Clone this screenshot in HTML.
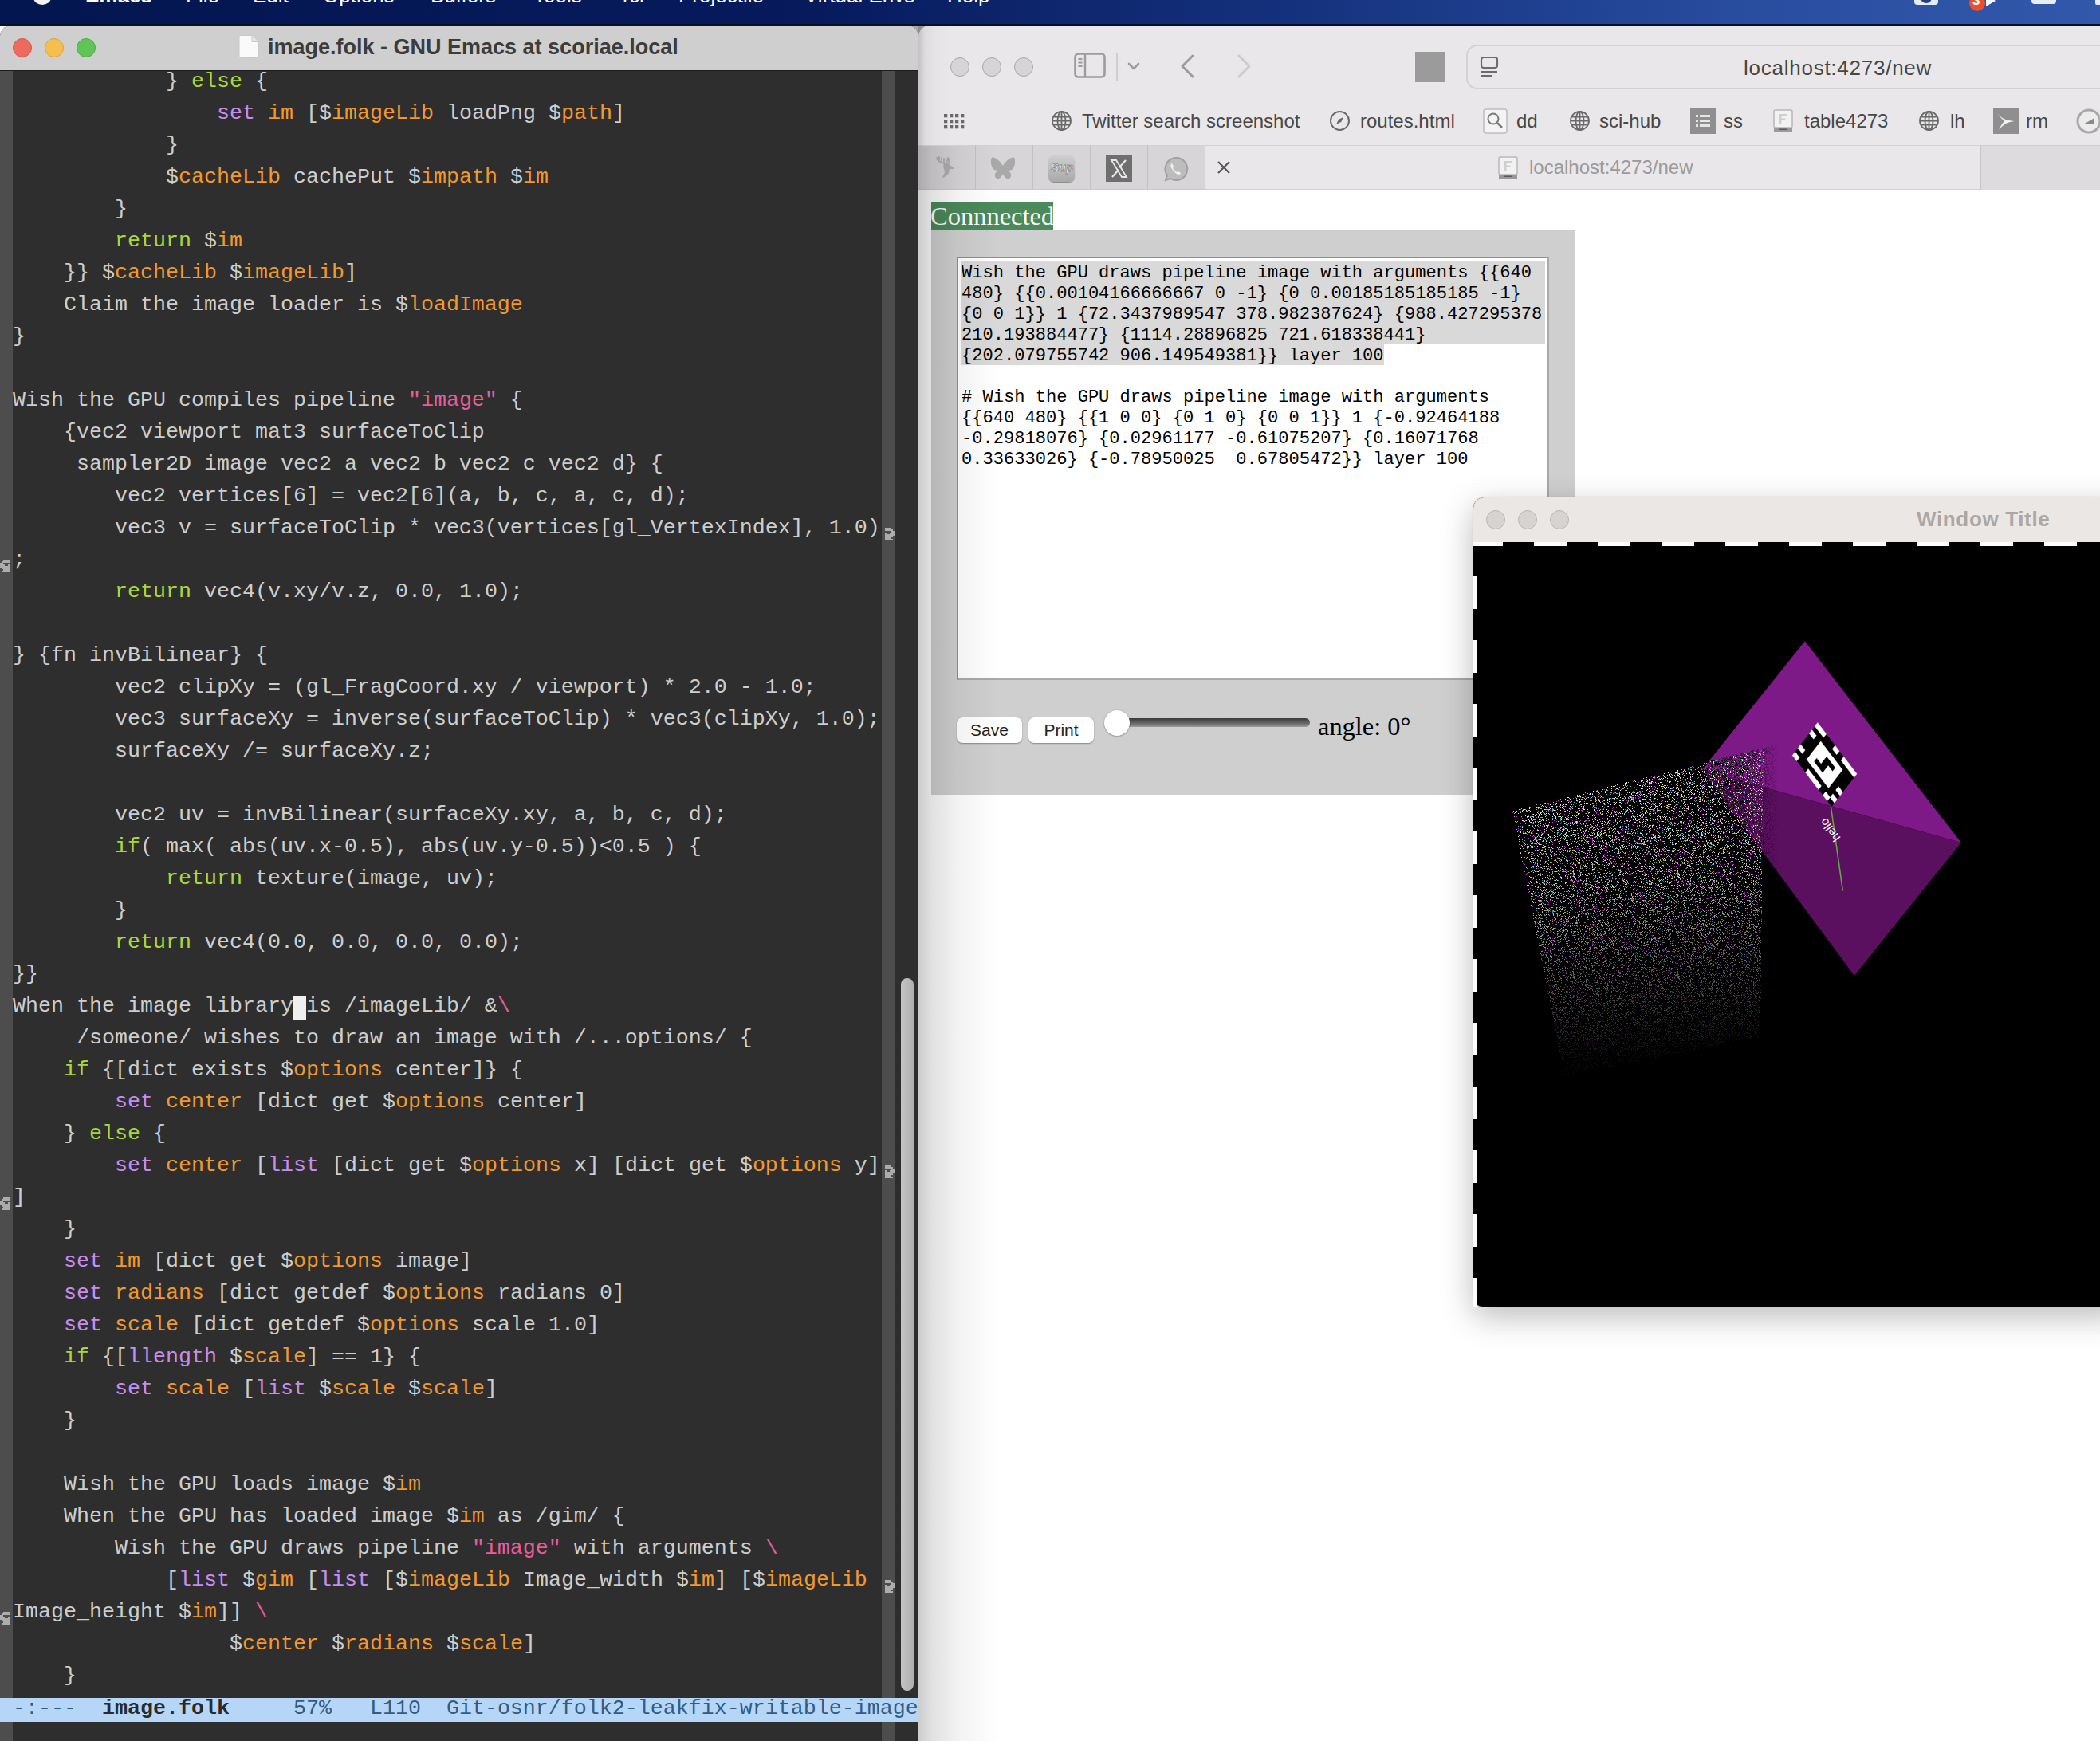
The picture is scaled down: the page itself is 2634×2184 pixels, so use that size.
<!DOCTYPE html><html><head><meta charset="utf-8"><style>*{box-sizing:border-box}
html,body{margin:0;padding:0}
body{width:2634px;height:2184px;overflow:hidden;position:relative;background:#fff;font-family:"Liberation Sans",sans-serif}
.a{position:absolute}
.t{white-space:pre}
.tl{position:absolute;width:24px;height:24px;border-radius:50%}
.ln{position:absolute;left:16px;font-family:"Liberation Mono",monospace;font-size:26.667px;line-height:40px;white-space:pre;color:#cdcdcd}
.k{color:#a8d83c}.p{color:#c88cf0}.o{color:#f2982f}.s{color:#e85c9c}
.bm{position:absolute;top:135px;font-size:24px;line-height:32px;color:#4b4b4b;white-space:pre}
</style></head><body>
<div class="a" style="left:0px;top:0px;width:2634px;height:32px;background:linear-gradient(to right,#04164f 0%,#061a5c 38%,#15327e 62%,#2a4fa2 85%,#3158aa 100%)"></div>
<div class="a t" style="left:107px;top:-19px;color:#fff;font-size:26px;line-height:26px;font-weight:bold">Emacs</div>
<div class="a t" style="left:233px;top:-19px;color:#fff;font-size:26px;line-height:26px;">File</div>
<div class="a t" style="left:317px;top:-19px;color:#fff;font-size:26px;line-height:26px;">Edit</div>
<div class="a t" style="left:405px;top:-19px;color:#fff;font-size:26px;line-height:26px;">Options</div>
<div class="a t" style="left:540px;top:-19px;color:#fff;font-size:26px;line-height:26px;">Buffers</div>
<div class="a t" style="left:669px;top:-19px;color:#fff;font-size:26px;line-height:26px;">Tools</div>
<div class="a t" style="left:776px;top:-19px;color:#fff;font-size:26px;line-height:26px;">Tcl</div>
<div class="a t" style="left:851px;top:-19px;color:#fff;font-size:26px;line-height:26px;">Projectile</div>
<div class="a t" style="left:1009px;top:-19px;color:#fff;font-size:26px;line-height:26px;">Virtual Envs</div>
<div class="a t" style="left:1188px;top:-19px;color:#fff;font-size:26px;line-height:26px;">Help</div>
<div class="a" style="left:42px;top:-14px;width:22px;height:20px;background:#f2f2f2;border-radius:0 0 11px 11px / 0 0 9px 9px"></div>
<div class="a" style="left:2401px;top:-8px;width:30px;height:14px;background:#e8ecf5;border-radius:4px"></div>
<div class="a" style="left:2409px;top:-6px;width:14px;height:10px;background:#233f8c;border-radius:0 0 7px 7px"></div>
<div class="a" style="left:2491px;top:-6px;width:12px;height:14px;background:#fff;clip-path:polygon(0 0,100% 50%,0 100%)"></div>
<div class="a" style="left:2470px;top:-6px;width:20px;height:20px;background:#e8512a;border-radius:50%"></div>
<div class="a t" style="left:2474px;top:-9px;color:#fff;font-size:17px;line-height:20px;font-weight:bold">3</div>
<div class="a" style="left:2548px;top:-8px;width:31px;height:13px;background:#e8ecf5;border-radius:4px"></div>
<div class="a" style="left:2628px;top:-8px;width:8px;height:14px;background:#e8ecf5;border-radius:2px"></div>
<div class="a" style="left:0px;top:30px;width:2634px;height:2px;background:#0a0f24"></div>
<div class="a" style="left:1120px;top:32px;width:60px;height:30px;background:linear-gradient(to right,#b8b8b8,#9a9a9a)"></div>
<div class="a" style="left:1152px;top:32px;width:1482px;height:2152px;background:#fff;border-radius:15px 0 0 0;overflow:hidden"></div>
<div class="a" style="left:1152px;top:32px;width:1482px;height:151px;background:#e9e7e9;border-radius:15px 0 0 0;border-bottom:1px solid #d3d1d3"></div>
<div class="a" style="left:1192px;top:72px;width:24px;height:24px;border-radius:50%;background:#d6d4d6;border:1px solid #a9a7a9"></div>
<div class="a" style="left:1232px;top:72px;width:24px;height:24px;border-radius:50%;background:#d6d4d6;border:1px solid #a9a7a9"></div>
<div class="a" style="left:1272px;top:72px;width:24px;height:24px;border-radius:50%;background:#d6d4d6;border:1px solid #a9a7a9"></div>
<svg class="a" style="left:1346px;top:65px" width="44" height="36" viewBox="0 0 44 36"><rect x="2.5" y="2.5" width="37" height="29" rx="4" fill="none" stroke="#9c9c9c" stroke-width="2.6"/><line x1="15" y1="3" x2="15" y2="31" stroke="#9c9c9c" stroke-width="2.4"/><path d="M6.5 9h5M6.5 13.5h5M6.5 18h5" stroke="#9c9c9c" stroke-width="2"/></svg>
<div class="a" style="left:1400px;top:67px;width:2px;height:34px;background:#cfcdcf"></div>
<svg class="a" style="left:1412px;top:76px" width="20" height="14" viewBox="0 0 20 14"><path d="M4 4l6 6 6-6" fill="none" stroke="#9c9c9c" stroke-width="2.6" stroke-linecap="round" stroke-linejoin="round"/></svg>
<svg class="a" style="left:1476px;top:66px" width="28" height="34" viewBox="0 0 28 34"><path d="M20 4L7 17l13 13" fill="none" stroke="#9c9c9c" stroke-width="3" stroke-linecap="round" stroke-linejoin="round"/></svg>
<svg class="a" style="left:1546px;top:66px" width="28" height="34" viewBox="0 0 28 34"><path d="M8 4l13 13L8 30" fill="none" stroke="#cdcbcd" stroke-width="3" stroke-linecap="round" stroke-linejoin="round"/></svg>
<div class="a" style="left:1775px;top:65px;width:38px;height:38px;background:#9b9b9b"></div>
<div class="a" style="left:1839px;top:56px;width:820px;height:56px;border:2px solid #d3d1d3;border-radius:14px;background:#e9e7e9"></div>
<svg class="a" style="left:1855px;top:70px" width="28" height="28" viewBox="0 0 28 28"><rect x="3" y="2" width="20" height="13" rx="3" fill="none" stroke="#6c6c6c" stroke-width="2.2"/><path d="M3 20h20M3 25h13" stroke="#6c6c6c" stroke-width="2.2"/></svg>
<div class="a t" style="left:2187px;top:70px;font-size:26px;line-height:30px;color:#474747;letter-spacing:0.75px">localhost:4273/new</div>
<svg class="a" style="left:1184px;top:143px" width="26" height="19" viewBox="0 0 26 19"><rect x="0" y="0" width="4.3" height="4.3" fill="#6a6a6a"/><rect x="0" y="7" width="4.3" height="4.3" fill="#6a6a6a"/><rect x="0" y="14" width="4.3" height="4.3" fill="#6a6a6a"/><rect x="7" y="0" width="4.3" height="4.3" fill="#6a6a6a"/><rect x="7" y="7" width="4.3" height="4.3" fill="#6a6a6a"/><rect x="7" y="14" width="4.3" height="4.3" fill="#6a6a6a"/><rect x="14" y="0" width="4.3" height="4.3" fill="#6a6a6a"/><rect x="14" y="7" width="4.3" height="4.3" fill="#6a6a6a"/><rect x="14" y="14" width="4.3" height="4.3" fill="#6a6a6a"/><rect x="21" y="0" width="4.3" height="4.3" fill="#6a6a6a"/><rect x="21" y="7" width="4.3" height="4.3" fill="#6a6a6a"/><rect x="21" y="14" width="4.3" height="4.3" fill="#6a6a6a"/></svg>
<svg class="a" style="left:1318px;top:138px" width="27" height="27" viewBox="0 0 27 27"><g fill="none" stroke="#6a6a6a" stroke-width="1.8"><circle cx="13.5" cy="13.5" r="11.5"/><ellipse cx="13.5" cy="13.5" rx="5" ry="11.5"/><path d="M13.5 2v23M2 13.5h23M3.5 8.5h20M3.5 18.5h20"/></g></svg>
<div class="a t" style="left:1357px;top:138px;font-size:24px;line-height:28px;color:#484848">Twitter search screenshot</div>
<svg class="a" style="left:1667px;top:138px" width="27" height="27" viewBox="0 0 27 27"><circle cx="13.5" cy="13.5" r="11.5" fill="none" stroke="#6a6a6a" stroke-width="2"/><path d="M18 9l-6 2.8-2.8 6 6-2.8z" fill="#6a6a6a"/></svg>
<div class="a t" style="left:1706px;top:138px;font-size:24px;line-height:28px;color:#484848">routes.html</div>
<svg class="a" style="left:1860px;top:136px" width="32" height="32" viewBox="0 0 32 32"><rect x="1" y="1" width="29" height="30" rx="3" fill="#f4f4f4" stroke="#bdbdbd" stroke-width="1.5"/><circle cx="13" cy="13" r="6.5" fill="none" stroke="#7a7a7a" stroke-width="2"/><path d="M18 18l6 6" stroke="#7a7a7a" stroke-width="2.5"/></svg>
<div class="a t" style="left:1902px;top:138px;font-size:24px;line-height:28px;color:#484848">dd</div>
<svg class="a" style="left:1968px;top:138px" width="27" height="27" viewBox="0 0 27 27"><g fill="none" stroke="#6a6a6a" stroke-width="1.8"><circle cx="13.5" cy="13.5" r="11.5"/><ellipse cx="13.5" cy="13.5" rx="5" ry="11.5"/><path d="M13.5 2v23M2 13.5h23M3.5 8.5h20M3.5 18.5h20"/></g></svg>
<div class="a t" style="left:2006px;top:138px;font-size:24px;line-height:28px;color:#484848">sci-hub</div>
<svg class="a" style="left:2120px;top:136px" width="32" height="32" viewBox="0 0 32 32"><rect width="32" height="32" fill="#8f8f8f"/><path d="M7 8h3v3H7zM12 8h13v3H12zM7 14h3v3H7zM12 14h13v3H12zM7 20h3v3H7zM12 20h13v3H12z" fill="#e6e6e6"/></svg>
<div class="a t" style="left:2162px;top:138px;font-size:24px;line-height:28px;color:#484848">ss</div>
<svg class="a" style="left:2224px;top:137px" width="25" height="29" viewBox="0 0 25 29"><rect x="1" y="1" width="23" height="22" rx="2" fill="#f2f2f2" stroke="#b8b8b8" stroke-width="1.5"/><path d="M8 6h9v2.5h-6.5v3h5v2.5h-5v5H8z" fill="#cfcfcf"/><rect x="1" y="23" width="23" height="5" fill="#9a9a9a"/><rect x="8" y="24.5" width="9" height="1.5" fill="#5a5a5a"/></svg>
<div class="a t" style="left:2263px;top:138px;font-size:24px;line-height:28px;color:#484848">table4273</div>
<svg class="a" style="left:2406px;top:138px" width="27" height="27" viewBox="0 0 27 27"><g fill="none" stroke="#6a6a6a" stroke-width="1.8"><circle cx="13.5" cy="13.5" r="11.5"/><ellipse cx="13.5" cy="13.5" rx="5" ry="11.5"/><path d="M13.5 2v23M2 13.5h23M3.5 8.5h20M3.5 18.5h20"/></g></svg>
<div class="a t" style="left:2446px;top:138px;font-size:24px;line-height:28px;color:#484848">lh</div>
<svg class="a" style="left:2500px;top:136px" width="32" height="32" viewBox="0 0 32 32"><rect width="32" height="32" fill="#8f8f8f"/><path d="M5 6c5 6 10 9 22 10-10 1-14 4-20 11 3-6 5-9 7-11-3-3-6-6-9-10z" fill="#f2f2f2"/></svg>
<div class="a t" style="left:2541px;top:138px;font-size:24px;line-height:28px;color:#484848">rm</div>
<svg class="a" style="left:2603px;top:135px" width="34" height="34" viewBox="0 0 34 34"><circle cx="17" cy="17" r="14" fill="#ececec" stroke="#a8a8a8" stroke-width="3"/><path d="M10 21l14-8v8z" fill="#8a8a8a"/></svg>
<div class="a" style="left:1152px;top:183px;width:1482px;height:55px;background:#e9e7e9;border-bottom:1px solid #d0ced0"></div>
<div class="a" style="left:1152px;top:183px;width:359px;height:55px;background:#d7d5d7;border-bottom:1px solid #cbc9cb"></div>
<div class="a" style="left:1223px;top:182px;width:1px;height:56px;background:#c3c1c3"></div>
<div class="a" style="left:1295px;top:182px;width:1px;height:56px;background:#c3c1c3"></div>
<div class="a" style="left:1367px;top:182px;width:1px;height:56px;background:#c3c1c3"></div>
<div class="a" style="left:1439px;top:182px;width:1px;height:56px;background:#c3c1c3"></div>
<div class="a" style="left:1511px;top:182px;width:1px;height:56px;background:#c3c1c3"></div>
<div class="a" style="left:2484px;top:182px;width:150px;height:56px;background:#dddbdd;border-left:1px solid #c8c6c8;border-top:1px solid #d0ced0"></div>
<svg class="a" style="left:1172px;top:195px" width="30" height="30" viewBox="0 0 30 30"><g fill="none" stroke="#b0b0b0" stroke-width="1.8" stroke-linecap="round"><path d="M3 3c1 4 4 6 9 7M6 2v4M9 3v5M12 4v5M15 9c1-2 2-4 2-6M18 4v6"/></g><path d="M12 9c3 0 6 1 7 3l5 3c1 1 0 2-1 2h-4c0 5-3 10-10 11 2-2 4-5 4-9-2-2-2-6-1-10z" fill="#b0b0b0"/></svg>
<svg class="a" style="left:1242px;top:196px" width="32" height="32" viewBox="0 0 32 32"><path d="M16 12C12 5 4 0 2 2 0 4 1 12 3 15c2 3 6 3 8 3-4 1-7 5-4 9 3 3 7 0 9-5 2 5 6 8 9 5 3-4 0-8-4-9 2 0 6 0 8-3 2-3 3-11 1-13-2-2-10 3-14 10z" fill="#a9a9a9"/></svg>
<div class="a" style="left:1315px;top:195px;width:33px;height:33px;background:linear-gradient(#cfcfcf,#a9a9a9);border-radius:7px;box-shadow:0 1px 1px #888"></div>
<div class="a t" style="left:1318px;top:198px;font-size:15px;line-height:24px;font-style:italic;font-weight:bold;color:#f0f0f0;-webkit-text-stroke:0.8px #888">Sup</div>
<div class="a" style="left:1387px;top:195px;width:33px;height:33px;background:#6f6f6f"></div>
<svg class="a" style="left:1390px;top:198px" width="27" height="27" viewBox="0 0 27 27"><path d="M4 3h6l13 21h-6z" fill="none" stroke="#e8e8e8" stroke-width="1.8"/><path d="M22 3L14 12M5 24l8-9" stroke="#e8e8e8" stroke-width="2.2"/></svg>
<svg class="a" style="left:1458px;top:195px" width="34" height="34" viewBox="0 0 34 34"><path d="M17 3a14 14 0 1 1-7 26l-6 2 2-6A14 14 0 0 1 17 3z" fill="#bdbdbd" stroke="#a0a0a0" stroke-width="2"/><path d="M12 10c-2 1-2 4 0 7 2 3 5 6 8 7 2 0 3-1 3-2l-3-2-2 1c-2-1-4-3-5-5l1-2-2-4z" fill="#f2f2f2"/></svg>
<svg class="a" style="left:1525px;top:200px" width="20" height="20" viewBox="0 0 20 20"><path d="M3 3l14 14M17 3L3 17" stroke="#555" stroke-width="2.2"/></svg>
<svg class="a" style="left:1879px;top:196px" width="25" height="29" viewBox="0 0 25 29"><rect x="1" y="1" width="23" height="22" rx="2" fill="#f2f2f2" stroke="#b8b8b8" stroke-width="1.5"/><path d="M8 6h9v2.5h-6.5v3h5v2.5h-5v5H8z" fill="#cfcfcf"/><rect x="1" y="23" width="23" height="5" fill="#9a9a9a"/><rect x="8" y="24.5" width="9" height="1.5" fill="#5a5a5a"/></svg>
<div class="a t" style="left:1918px;top:195px;font-size:24px;line-height:30px;color:#9c9a9c">localhost:4273/new</div>
<div class="a" style="left:1168px;top:254px;width:153px;height:35px;background:#4a8a5b"></div>
<div class="a t" style="left:1167px;top:252px;font-family:'Liberation Serif',serif;font-size:32.5px;line-height:38px;color:#fff">Connnected</div>
<div class="a" style="left:1168px;top:289px;width:808px;height:708px;background:#cfcfcf"></div>
<div class="a" style="left:1200px;top:322px;width:743px;height:531px;background:#fff;border:2px solid #8f8f8f;border-right-color:#a9a9a9;border-bottom-color:#a9a9a9"></div>
<div class="a" style="left:1205px;top:328px;width:733px;height:26px;background:#d9d9d9"></div>
<div class="a" style="left:1205px;top:354px;width:733px;height:26px;background:#d9d9d9"></div>
<div class="a" style="left:1205px;top:380px;width:733px;height:26px;background:#d9d9d9"></div>
<div class="a" style="left:1205px;top:406px;width:733px;height:26px;background:#d9d9d9"></div>
<div class="a" style="left:1205px;top:432px;width:531px;height:26px;background:#d9d9d9"></div>
<div class="a t" style="left:1206px;top:330px;font-family:'Liberation Mono',monospace;font-size:22.07px;line-height:26px;color:#000">Wish the GPU draws pipeline image with arguments {{640</div>
<div class="a t" style="left:1206px;top:356px;font-family:'Liberation Mono',monospace;font-size:22.07px;line-height:26px;color:#000">480} {{0.00104166666667 0 -1} {0 0.00185185185185 -1}</div>
<div class="a t" style="left:1206px;top:382px;font-family:'Liberation Mono',monospace;font-size:22.07px;line-height:26px;color:#000">{0 0 1}} 1 {72.3437989547 378.982387624} {988.427295378</div>
<div class="a t" style="left:1206px;top:408px;font-family:'Liberation Mono',monospace;font-size:22.07px;line-height:26px;color:#000">210.193884477} {1114.28896825 721.618338441}</div>
<div class="a t" style="left:1206px;top:434px;font-family:'Liberation Mono',monospace;font-size:22.07px;line-height:26px;color:#000">{202.079755742 906.149549381}} layer 100</div>
<div class="a t" style="left:1206px;top:486px;font-family:'Liberation Mono',monospace;font-size:22.07px;line-height:26px;color:#000"># Wish the GPU draws pipeline image with arguments</div>
<div class="a t" style="left:1206px;top:512px;font-family:'Liberation Mono',monospace;font-size:22.07px;line-height:26px;color:#000">{{640 480} {{1 0 0} {0 1 0} {0 0 1}} 1 {-0.92464188</div>
<div class="a t" style="left:1206px;top:538px;font-family:'Liberation Mono',monospace;font-size:22.07px;line-height:26px;color:#000">-0.29818076} {0.02961177 -0.61075207} {0.16071768</div>
<div class="a t" style="left:1206px;top:564px;font-family:'Liberation Mono',monospace;font-size:22.07px;line-height:26px;color:#000">0.33633026} {-0.78950025  0.67805472}} layer 100</div>
<div class="a" style="left:1200px;top:900px;width:82px;height:32px;background:#fff;border-radius:7px;box-shadow:0 0.5px 1.5px rgba(0,0,0,.35)"></div>
<div class="a t" style="left:1200px;top:901px;width:82px;text-align:center;font-size:21px;line-height:30px;color:#222">Save</div>
<div class="a" style="left:1290px;top:900px;width:82px;height:32px;background:#fff;border-radius:7px;box-shadow:0 0.5px 1.5px rgba(0,0,0,.35)"></div>
<div class="a t" style="left:1290px;top:901px;width:82px;text-align:center;font-size:21px;line-height:30px;color:#222">Print</div>
<div class="a" style="left:1395px;top:901px;width:248px;height:11px;border-radius:6px;background:linear-gradient(#3a3a3a,#6a6a6a 60%,#9a9a9a)"></div>
<div class="a" style="left:1385px;top:891px;width:32px;height:32px;border-radius:50%;background:#fff;box-shadow:0 0.5px 2px rgba(0,0,0,.45)"></div>
<div class="a t" style="left:1653px;top:893px;font-family:'Liberation Serif',serif;font-size:32.4px;line-height:36px;color:#000">angle: 0°</div>
<div class="a" style="left:1152px;top:183px;width:100px;height:2001px;background:linear-gradient(to right,rgba(0,0,0,.2),rgba(0,0,0,.12) 16%,rgba(0,0,0,.05) 48%,rgba(0,0,0,0))"></div>
<div class="a" style="left:1152px;top:32px;width:40px;height:151px;background:linear-gradient(to right,rgba(0,0,0,.16),rgba(0,0,0,.05) 20%,rgba(0,0,0,.02) 50%,rgba(0,0,0,0))"></div>
<div class="a" style="left:1848px;top:624px;width:816px;height:1015px;background:#000;border-radius:14px 0 0 12px;box-shadow:0 12px 40px rgba(0,0,0,.28),0 0 2px rgba(0,0,0,.3);overflow:hidden"></div>
<div class="a" style="left:1848px;top:624px;width:816px;height:56px;background:#ebe7e4;border-radius:14px 0 0 0"></div>
<div class="a" style="left:1864px;top:640px;width:24px;height:24px;border-radius:50%;background:#d7d3d0;border:1px solid #b9b5b2"></div>
<div class="a" style="left:1904px;top:640px;width:24px;height:24px;border-radius:50%;background:#d7d3d0;border:1px solid #b9b5b2"></div>
<div class="a" style="left:1944px;top:640px;width:24px;height:24px;border-radius:50%;background:#d7d3d0;border:1px solid #b9b5b2"></div>
<div class="a t" style="left:2404px;top:635px;font-size:26px;line-height:32px;font-weight:bold;color:#aba7a4;letter-spacing:0.65px">Window Title</div>
<svg class="a" style="left:1848px;top:680px" width="786" height="959" viewBox="1848 680 786 959" shape-rendering="crispEdges"><path d="M1848 680h37v5h-37zM1924 680h41v5h-41zM2004 680h41v5h-41zM2084 680h41v5h-41zM2164 680h41v5h-41zM2244 680h41v5h-41zM2324 680h41v5h-41zM2404 680h41v5h-41zM2484 680h41v5h-41zM2564 680h41v5h-41z" fill="#fff"/><path d="M1848 723h5v41h-5zM1848 803h5v41h-5zM1848 883h5v41h-5zM1848 963h5v41h-5zM1848 1043h5v41h-5zM1848 1123h5v41h-5zM1848 1203h5v41h-5zM1848 1283h5v41h-5zM1848 1363h5v41h-5zM1848 1443h5v41h-5zM1848 1523h5v41h-5zM1848 1603h5v41h-5z" fill="#fff"/></svg>
<svg class="a" style="left:1848px;top:680px" width="786" height="959" viewBox="1848 680 786 959"><path d="M2263.8 804.3L2134.6 965.7L2459.8 1056.9z" fill="#7e1a88"/><path d="M2134.6 965.7L2459.8 1056.9L2325.9 1223.9z" fill="#5b0f5f"/></svg>
<svg class="a" style="left:1848px;top:680px" width="786" height="959" viewBox="1848 680 786 959" shape-rendering="crispEdges"><defs><pattern id="pc" patternUnits="userSpaceOnUse" x="0" y="0" width="131" height="127"><path d="M81 27h1v1h-1zM117 10h1v1h-1zM114 2h1v1h-1zM65 49h1v1h-1zM36 93h1v1h-1zM72 45h1v1h-1zM105 55h1v1h-1zM81 59h1v1h-1zM44 101h1v1h-1zM129 113h1v1h-1zM28 48h1v1h-1zM15 94h1v1h-1zM5 42h1v1h-1zM105 107h1v1h-1zM120 14h1v1h-1zM82 125h1v1h-1zM57 32h1v1h-1zM67 122h1v1h-1zM34 0h1v1h-1zM49 26h1v1h-1zM12 15h1v1h-1zM115 7h1v1h-1zM26 54h1v1h-1zM94 69h1v1h-1zM108 68h1v1h-1zM126 105h1v1h-1zM110 34h1v1h-1zM97 110h1v1h-1zM62 40h1v1h-1zM80 61h1v1h-1zM89 70h1v1h-1zM84 62h1v1h-1zM78 42h1v1h-1zM42 54h1v1h-1zM29 107h1v1h-1zM106 36h1v1h-1zM58 96h1v1h-1zM71 126h1v1h-1zM46 29h1v1h-1zM31 65h1v1h-1zM6 9h1v1h-1zM12 11h1v1h-1zM53 34h1v1h-1zM114 103h1v1h-1zM12 7h1v1h-1zM17 116h1v1h-1zM110 11h1v1h-1zM79 7h1v1h-1zM125 74h1v1h-1zM74 116h1v1h-1zM19 81h1v1h-1zM73 28h1v1h-1zM6 26h1v1h-1zM84 105h1v1h-1zM76 29h1v1h-1zM93 38h1v1h-1zM74 94h1v1h-1zM99 100h1v1h-1zM58 36h1v1h-1zM98 4h1v1h-1zM94 33h1v1h-1zM105 111h1v1h-1zM118 92h1v1h-1zM14 4h1v1h-1zM86 31h1v1h-1zM95 15h1v1h-1zM56 38h1v1h-1zM10 85h1v1h-1zM68 70h1v1h-1zM113 41h1v1h-1zM118 87h1v1h-1zM69 51h1v1h-1zM103 70h1v1h-1zM130 32h1v1h-1zM122 60h1v1h-1zM75 22h1v1h-1zM98 16h1v1h-1zM97 86h1v1h-1zM84 125h1v1h-1zM17 97h1v1h-1zM110 112h1v1h-1zM63 15h1v1h-1zM30 41h1v1h-1zM29 32h1v1h-1zM119 47h1v1h-1zM47 115h1v1h-1zM13 107h1v1h-1zM51 93h1v1h-1zM124 46h1v1h-1zM75 56h1v1h-1zM11 35h1v1h-1zM28 71h1v1h-1zM26 99h1v1h-1zM124 100h1v1h-1zM117 88h1v1h-1zM100 102h1v1h-1zM75 13h1v1h-1zM76 123h1v1h-1zM49 23h1v1h-1zM53 113h1v1h-1zM93 100h1v1h-1zM9 101h1v1h-1zM21 17h1v1h-1zM124 124h1v1h-1zM103 97h1v1h-1zM40 45h1v1h-1zM93 39h1v1h-1zM17 17h1v1h-1zM127 2h1v1h-1zM43 30h1v1h-1zM22 118h1v1h-1zM119 37h1v1h-1zM106 92h1v1h-1zM110 72h1v1h-1zM97 39h1v1h-1zM22 29h1v1h-1zM86 108h1v1h-1zM40 15h1v1h-1zM61 29h1v1h-1zM53 66h1v1h-1zM0 55h1v1h-1zM117 92h1v1h-1zM95 42h1v1h-1zM120 76h1v1h-1zM119 25h1v1h-1zM105 99h1v1h-1zM119 5h1v1h-1zM22 60h1v1h-1zM3 48h1v1h-1zM2 117h1v1h-1zM92 54h1v1h-1zM127 20h1v1h-1zM15 103h1v1h-1zM88 45h1v1h-1zM11 96h1v1h-1zM59 91h1v1h-1zM40 16h1v1h-1zM70 33h1v1h-1zM84 13h1v1h-1zM106 97h1v1h-1zM86 15h1v1h-1zM99 50h1v1h-1zM61 48h1v1h-1zM125 26h1v1h-1zM75 78h1v1h-1zM110 125h1v1h-1zM20 38h1v1h-1zM14 125h1v1h-1zM82 71h1v1h-1zM104 45h1v1h-1zM39 32h1v1h-1zM113 23h1v1h-1zM104 41h1v1h-1zM39 27h1v1h-1zM108 75h1v1h-1zM98 31h1v1h-1zM75 2h1v1h-1zM50 16h1v1h-1zM83 8h1v1h-1zM79 93h1v1h-1zM103 16h1v1h-1zM6 87h1v1h-1zM82 109h1v1h-1zM107 26h1v1h-1zM89 2h1v1h-1zM47 72h1v1h-1zM10 84h1v1h-1zM116 22h1v1h-1zM45 28h1v1h-1zM49 88h1v1h-1zM21 122h1v1h-1zM33 14h1v1h-1zM115 38h1v1h-1zM59 34h1v1h-1zM49 13h1v1h-1zM17 82h1v1h-1zM89 86h1v1h-1zM40 31h1v1h-1zM48 26h1v1h-1zM70 66h1v1h-1zM38 32h1v1h-1zM93 26h1v1h-1zM45 42h1v1h-1zM98 43h1v1h-1zM101 13h1v1h-1zM75 92h1v1h-1zM114 110h1v1h-1zM39 104h1v1h-1zM10 82h1v1h-1zM26 57h1v1h-1zM118 97h1v1h-1zM65 109h1v1h-1zM110 108h1v1h-1zM10 60h1v1h-1zM95 25h1v1h-1zM35 107h1v1h-1zM81 94h1v1h-1zM56 16h1v1h-1zM49 87h1v1h-1zM12 63h1v1h-1zM95 123h1v1h-1zM108 63h1v1h-1zM88 8h1v1h-1zM43 48h1v1h-1zM48 15h1v1h-1zM94 67h1v1h-1zM99 106h1v1h-1zM36 45h1v1h-1zM98 34h1v1h-1zM117 41h1v1h-1zM16 63h1v1h-1zM24 59h1v1h-1zM59 66h1v1h-1zM94 3h1v1h-1zM83 45h1v1h-1zM79 66h1v1h-1zM51 95h1v1h-1zM40 96h1v1h-1zM84 56h1v1h-1zM99 109h1v1h-1zM26 34h1v1h-1zM58 80h1v1h-1zM44 19h1v1h-1zM62 100h1v1h-1zM4 79h1v1h-1zM44 31h1v1h-1zM50 32h1v1h-1zM71 88h1v1h-1zM94 40h1v1h-1zM108 32h1v1h-1zM120 95h1v1h-1zM103 88h1v1h-1zM99 117h1v1h-1zM130 91h1v1h-1zM88 47h1v1h-1zM14 66h1v1h-1zM23 69h1v1h-1zM75 93h1v1h-1zM124 63h1v1h-1zM119 18h1v1h-1zM98 3h1v1h-1zM28 30h1v1h-1zM8 96h1v1h-1zM20 69h1v1h-1zM4 122h1v1h-1zM40 126h1v1h-1zM94 95h1v1h-1zM95 21h1v1h-1zM130 12h1v1h-1zM38 16h1v1h-1zM33 25h1v1h-1zM51 115h1v1h-1zM97 40h1v1h-1zM29 46h1v1h-1zM67 4h1v1h-1zM16 119h1v1h-1zM65 119h1v1h-1zM23 19h1v1h-1zM74 74h1v1h-1zM63 89h1v1h-1zM87 106h1v1h-1zM107 35h1v1h-1zM67 109h1v1h-1zM92 67h1v1h-1zM82 114h1v1h-1zM62 5h1v1h-1zM130 85h1v1h-1zM51 98h1v1h-1zM50 94h1v1h-1zM33 114h1v1h-1zM44 85h1v1h-1zM14 35h1v1h-1zM88 13h1v1h-1zM27 2h1v1h-1zM96 113h1v1h-1zM65 76h1v1h-1zM103 45h1v1h-1zM99 72h1v1h-1zM44 1h1v1h-1zM78 126h1v1h-1zM128 60h1v1h-1zM8 107h1v1h-1zM30 21h1v1h-1zM112 53h1v1h-1zM99 21h1v1h-1zM129 1h1v1h-1zM109 15h1v1h-1zM38 89h1v1h-1zM127 50h1v1h-1zM21 69h1v1h-1zM78 61h1v1h-1zM127 114h1v1h-1zM43 44h1v1h-1zM110 107h1v1h-1zM77 51h1v1h-1zM20 37h1v1h-1zM38 23h1v1h-1zM22 126h1v1h-1zM126 121h1v1h-1zM75 1h1v1h-1zM57 94h1v1h-1zM13 45h1v1h-1zM36 100h1v1h-1zM60 26h1v1h-1zM107 20h1v1h-1zM124 84h1v1h-1zM56 89h1v1h-1zM30 48h1v1h-1zM94 80h1v1h-1zM43 110h1v1h-1zM59 32h1v1h-1zM54 88h1v1h-1zM95 113h1v1h-1zM104 52h1v1h-1zM2 36h1v1h-1zM125 124h1v1h-1zM61 13h1v1h-1zM53 67h1v1h-1zM70 112h1v1h-1zM122 47h1v1h-1zM95 97h1v1h-1zM73 48h1v1h-1zM52 93h1v1h-1zM82 29h1v1h-1zM15 78h1v1h-1zM72 87h1v1h-1zM99 118h1v1h-1zM37 45h1v1h-1zM115 94h1v1h-1zM108 30h1v1h-1zM8 83h1v1h-1zM44 122h1v1h-1zM112 106h1v1h-1zM87 80h1v1h-1zM32 32h1v1h-1zM49 122h1v1h-1zM38 28h1v1h-1zM83 12h1v1h-1zM32 99h1v1h-1zM56 41h1v1h-1zM74 99h1v1h-1zM32 72h1v1h-1zM112 39h1v1h-1zM49 9h1v1h-1zM41 91h1v1h-1zM115 21h1v1h-1zM64 2h1v1h-1zM122 81h1v1h-1zM89 116h1v1h-1zM17 110h1v1h-1zM9 79h1v1h-1zM113 52h1v1h-1zM29 45h1v1h-1zM25 67h1v1h-1zM130 78h1v1h-1zM62 117h1v1h-1zM106 122h1v1h-1zM100 104h1v1h-1zM107 58h1v1h-1zM48 38h1v1h-1zM71 82h1v1h-1zM39 105h1v1h-1zM100 1h1v1h-1zM66 81h1v1h-1zM96 43h1v1h-1zM64 26h1v1h-1zM8 106h1v1h-1zM89 78h1v1h-1zM32 107h1v1h-1zM84 83h1v1h-1zM116 65h1v1h-1zM115 93h1v1h-1zM21 107h1v1h-1zM112 56h1v1h-1zM40 23h1v1h-1zM33 96h1v1h-1zM8 28h1v1h-1zM92 96h1v1h-1zM105 19h1v1h-1zM25 56h1v1h-1zM5 80h1v1h-1zM103 126h1v1h-1zM100 124h1v1h-1zM63 100h1v1h-1zM100 121h1v1h-1zM36 24h1v1h-1zM85 89h1v1h-1zM81 47h1v1h-1zM100 91h1v1h-1zM98 37h1v1h-1zM33 2h1v1h-1zM57 37h1v1h-1zM9 50h1v1h-1zM64 109h1v1h-1zM83 94h1v1h-1zM65 54h1v1h-1zM125 56h1v1h-1zM24 118h1v1h-1zM21 126h1v1h-1zM111 121h1v1h-1zM21 35h1v1h-1zM3 27h1v1h-1zM53 88h1v1h-1zM54 106h1v1h-1zM107 19h1v1h-1zM78 121h1v1h-1zM43 29h1v1h-1zM4 108h1v1h-1zM111 11h1v1h-1zM122 98h1v1h-1zM129 30h1v1h-1zM99 34h1v1h-1zM103 73h1v1h-1zM50 80h1v1h-1zM117 9h1v1h-1zM100 41h1v1h-1zM51 10h1v1h-1zM111 12h1v1h-1zM98 99h1v1h-1zM69 21h1v1h-1zM54 13h1v1h-1zM17 81h1v1h-1zM35 125h1v1h-1zM127 106h1v1h-1zM58 71h1v1h-1zM1 40h1v1h-1zM36 113h1v1h-1zM55 114h1v1h-1zM117 99h1v1h-1zM52 69h1v1h-1zM46 83h1v1h-1zM103 20h1v1h-1zM123 35h1v1h-1zM104 101h1v1h-1zM89 102h1v1h-1zM35 105h1v1h-1zM93 70h1v1h-1zM92 108h1v1h-1zM41 116h1v1h-1zM67 117h1v1h-1zM119 33h1v1h-1zM67 102h1v1h-1zM72 67h1v1h-1zM25 55h1v1h-1zM82 4h1v1h-1zM48 89h1v1h-1zM59 116h1v1h-1zM94 63h1v1h-1zM122 24h1v1h-1zM91 77h1v1h-1zM3 102h1v1h-1zM126 84h1v1h-1zM73 91h1v1h-1zM93 91h1v1h-1zM64 38h1v1h-1zM61 118h1v1h-1zM54 7h1v1h-1zM50 65h1v1h-1zM37 89h1v1h-1zM66 107h1v1h-1zM24 86h1v1h-1zM59 2h1v1h-1zM28 3h1v1h-1zM46 64h1v1h-1zM35 80h1v1h-1zM9 84h1v1h-1zM115 32h1v1h-1zM110 56h1v1h-1zM113 122h1v1h-1zM9 114h1v1h-1zM50 42h1v1h-1zM59 27h1v1h-1zM41 33h1v1h-1zM5 90h1v1h-1zM1 111h1v1h-1zM74 80h1v1h-1zM74 78h1v1h-1zM68 6h1v1h-1zM84 14h1v1h-1zM42 90h1v1h-1zM74 119h1v1h-1zM126 50h1v1h-1zM57 50h1v1h-1zM76 79h1v1h-1zM21 89h1v1h-1zM107 84h1v1h-1zM41 97h1v1h-1zM53 21h1v1h-1zM35 24h1v1h-1zM100 30h1v1h-1zM48 105h1v1h-1zM108 19h1v1h-1zM88 114h1v1h-1zM121 111h1v1h-1zM13 108h1v1h-1zM94 77h1v1h-1zM111 57h1v1h-1zM92 7h1v1h-1zM64 17h1v1h-1zM65 11h1v1h-1zM120 103h1v1h-1zM9 25h1v1h-1zM103 24h1v1h-1zM20 87h1v1h-1zM63 27h1v1h-1zM127 25h1v1h-1zM68 109h1v1h-1zM76 0h1v1h-1zM57 96h1v1h-1zM34 29h1v1h-1zM32 43h1v1h-1zM114 36h1v1h-1zM63 70h1v1h-1zM79 103h1v1h-1zM86 71h1v1h-1zM66 117h1v1h-1zM18 52h1v1h-1zM112 20h1v1h-1zM28 98h1v1h-1zM29 106h1v1h-1zM53 116h1v1h-1zM76 13h1v1h-1zM96 12h1v1h-1zM49 126h1v1h-1zM98 53h1v1h-1zM52 24h1v1h-1zM56 8h1v1h-1zM113 86h1v1h-1zM51 62h1v1h-1zM40 58h1v1h-1zM96 118h1v1h-1zM64 106h1v1h-1zM122 8h1v1h-1zM19 48h1v1h-1zM54 5h1v1h-1zM107 124h1v1h-1zM111 92h1v1h-1zM45 60h1v1h-1zM91 7h1v1h-1zM27 8h1v1h-1zM16 113h1v1h-1zM20 89h1v1h-1zM107 91h1v1h-1zM43 27h1v1h-1zM120 31h1v1h-1zM45 119h1v1h-1zM74 59h1v1h-1zM121 87h1v1h-1zM60 112h1v1h-1zM73 6h1v1h-1zM96 5h1v1h-1zM20 99h1v1h-1zM92 77h1v1h-1zM34 126h1v1h-1zM123 120h1v1h-1zM48 28h1v1h-1zM123 0h1v1h-1zM86 91h1v1h-1zM11 86h1v1h-1zM61 56h1v1h-1zM27 95h1v1h-1zM109 16h1v1h-1zM73 93h1v1h-1zM61 111h1v1h-1zM88 60h1v1h-1zM66 3h1v1h-1zM83 111h1v1h-1zM129 91h1v1h-1zM86 60h1v1h-1zM45 58h1v1h-1zM112 58h1v1h-1zM20 125h1v1h-1zM127 24h1v1h-1zM95 70h1v1h-1zM33 74h1v1h-1zM79 43h1v1h-1zM62 124h1v1h-1zM103 75h1v1h-1zM104 118h1v1h-1zM78 14h1v1h-1zM36 96h1v1h-1zM44 38h1v1h-1zM122 42h1v1h-1zM50 46h1v1h-1zM72 14h1v1h-1zM9 83h1v1h-1zM26 85h1v1h-1zM66 57h1v1h-1zM29 50h1v1h-1zM128 17h1v1h-1zM76 31h1v1h-1zM116 96h1v1h-1zM24 88h1v1h-1zM83 54h1v1h-1zM121 9h1v1h-1zM55 35h1v1h-1zM129 9h1v1h-1zM14 10h1v1h-1zM82 55h1v1h-1zM13 110h1v1h-1zM56 100h1v1h-1zM11 69h1v1h-1zM88 95h1v1h-1zM3 125h1v1h-1zM96 7h1v1h-1zM97 107h1v1h-1zM120 69h1v1h-1zM79 107h1v1h-1zM1 115h1v1h-1zM40 5h1v1h-1zM18 28h1v1h-1zM106 35h1v1h-1zM103 27h1v1h-1zM34 22h1v1h-1zM59 54h1v1h-1zM84 19h1v1h-1zM23 20h1v1h-1zM4 105h1v1h-1zM47 95h1v1h-1zM91 19h1v1h-1zM65 2h1v1h-1zM115 46h1v1h-1zM117 72h1v1h-1zM130 23h1v1h-1zM104 21h1v1h-1zM36 26h1v1h-1zM12 40h1v1h-1zM25 20h1v1h-1zM6 42h1v1h-1zM85 15h1v1h-1zM87 114h1v1h-1zM57 71h1v1h-1zM124 86h1v1h-1zM31 79h1v1h-1zM16 62h1v1h-1zM84 123h1v1h-1zM19 92h1v1h-1zM53 23h1v1h-1zM109 40h1v1h-1zM126 87h1v1h-1zM114 68h1v1h-1zM15 35h1v1h-1zM54 14h1v1h-1zM54 91h1v1h-1zM91 96h1v1h-1zM40 84h1v1h-1zM7 7h1v1h-1zM51 90h1v1h-1zM43 45h1v1h-1zM33 103h1v1h-1zM2 12h1v1h-1zM115 85h1v1h-1zM65 52h1v1h-1zM86 104h1v1h-1zM121 19h1v1h-1zM118 122h1v1h-1zM125 98h1v1h-1zM126 58h1v1h-1zM112 74h1v1h-1zM76 71h1v1h-1zM37 65h1v1h-1zM94 50h1v1h-1zM35 15h1v1h-1zM90 36h1v1h-1zM70 70h1v1h-1zM9 81h1v1h-1zM69 71h1v1h-1zM12 112h1v1h-1zM87 48h1v1h-1zM116 50h1v1h-1zM84 0h1v1h-1zM105 70h1v1h-1zM23 80h1v1h-1zM22 48h1v1h-1zM26 67h1v1h-1zM73 79h1v1h-1zM16 65h1v1h-1zM34 78h1v1h-1zM55 120h1v1h-1zM126 4h1v1h-1zM91 35h1v1h-1zM118 77h1v1h-1zM32 7h1v1h-1zM94 25h1v1h-1zM117 8h1v1h-1zM66 29h1v1h-1zM40 107h1v1h-1zM1 52h1v1h-1zM129 71h1v1h-1zM36 116h1v1h-1zM3 6h1v1h-1zM1 25h1v1h-1zM27 79h1v1h-1zM61 34h1v1h-1zM13 60h1v1h-1zM14 5h1v1h-1zM106 34h1v1h-1zM105 39h1v1h-1zM56 97h1v1h-1zM70 44h1v1h-1zM10 1h1v1h-1zM42 32h1v1h-1zM117 77h1v1h-1zM61 3h1v1h-1zM106 91h1v1h-1zM93 123h1v1h-1zM73 27h1v1h-1zM108 4h1v1h-1zM106 16h1v1h-1zM94 57h1v1h-1zM102 106h1v1h-1zM70 81h1v1h-1zM108 34h1v1h-1zM83 6h1v1h-1zM67 47h1v1h-1zM23 93h1v1h-1zM53 85h1v1h-1zM81 8h1v1h-1zM13 71h1v1h-1zM54 53h1v1h-1zM9 6h1v1h-1zM100 12h1v1h-1zM24 25h1v1h-1zM48 63h1v1h-1zM85 16h1v1h-1zM78 105h1v1h-1zM23 98h1v1h-1zM122 85h1v1h-1zM106 93h1v1h-1zM8 98h1v1h-1zM125 45h1v1h-1zM113 8h1v1h-1zM98 118h1v1h-1zM39 11h1v1h-1zM15 118h1v1h-1zM98 82h1v1h-1zM76 46h1v1h-1zM58 70h1v1h-1zM27 42h1v1h-1zM19 52h1v1h-1zM97 66h1v1h-1zM125 123h1v1h-1zM31 57h1v1h-1zM5 6h1v1h-1zM101 97h1v1h-1zM71 37h1v1h-1zM103 93h1v1h-1zM59 33h1v1h-1zM7 15h1v1h-1zM12 14h1v1h-1zM116 118h1v1h-1zM34 25h1v1h-1zM119 126h1v1h-1zM58 43h1v1h-1zM37 33h1v1h-1zM72 5h1v1h-1zM85 1h1v1h-1zM101 101h1v1h-1zM96 14h1v1h-1zM54 86h1v1h-1zM71 115h1v1h-1zM51 117h1v1h-1zM124 116h1v1h-1zM67 81h1v1h-1zM44 5h1v1h-1zM58 24h1v1h-1zM53 32h1v1h-1zM98 17h1v1h-1zM126 89h1v1h-1zM38 67h1v1h-1zM44 14h1v1h-1zM111 79h1v1h-1zM66 121h1v1h-1zM11 25h1v1h-1zM39 15h1v1h-1zM8 91h1v1h-1zM16 117h1v1h-1zM64 104h1v1h-1zM32 74h1v1h-1zM7 47h1v1h-1zM104 49h1v1h-1zM129 92h1v1h-1zM16 43h1v1h-1zM93 89h1v1h-1zM4 113h1v1h-1zM33 56h1v1h-1zM50 99h1v1h-1zM116 89h1v1h-1zM44 17h1v1h-1zM71 89h1v1h-1zM92 118h1v1h-1zM120 106h1v1h-1zM113 48h1v1h-1zM125 71h1v1h-1zM46 66h1v1h-1zM89 65h1v1h-1zM130 107h1v1h-1zM73 54h1v1h-1zM68 1h1v1h-1zM130 120h1v1h-1zM103 89h1v1h-1zM47 36h1v1h-1zM16 50h1v1h-1zM8 73h1v1h-1zM24 70h1v1h-1zM33 38h1v1h-1zM1 43h1v1h-1zM12 115h1v1h-1zM6 32h1v1h-1zM14 26h1v1h-1zM80 13h1v1h-1zM90 76h1v1h-1zM6 106h1v1h-1zM71 96h1v1h-1zM69 114h1v1h-1zM123 53h1v1h-1zM100 16h1v1h-1zM53 44h1v1h-1zM122 96h1v1h-1zM112 102h1v1h-1zM127 80h1v1h-1zM15 33h1v1h-1zM80 26h1v1h-1zM80 0h1v1h-1zM129 6h1v1h-1zM51 113h1v1h-1zM12 17h1v1h-1zM36 58h1v1h-1zM58 40h1v1h-1zM111 34h1v1h-1zM114 26h1v1h-1zM93 61h1v1h-1zM85 44h1v1h-1zM0 71h1v1h-1zM33 47h1v1h-1zM14 6h1v1h-1zM49 2h1v1h-1zM114 4h1v1h-1zM89 5h1v1h-1zM42 28h1v1h-1zM92 116h1v1h-1zM34 64h1v1h-1zM66 21h1v1h-1zM68 63h1v1h-1zM8 76h1v1h-1zM121 104h1v1h-1zM11 52h1v1h-1zM105 4h1v1h-1zM30 56h1v1h-1zM42 2h1v1h-1zM86 10h1v1h-1zM10 81h1v1h-1zM80 111h1v1h-1zM95 77h1v1h-1zM95 58h1v1h-1zM29 18h1v1h-1zM116 49h1v1h-1zM7 125h1v1h-1zM91 115h1v1h-1zM58 8h1v1h-1zM50 79h1v1h-1zM41 0h1v1h-1zM50 126h1v1h-1zM80 72h1v1h-1zM3 1h1v1h-1zM73 95h1v1h-1zM65 28h1v1h-1zM15 113h1v1h-1zM103 92h1v1h-1zM117 63h1v1h-1zM0 0h1v1h-1zM41 53h1v1h-1zM116 34h1v1h-1zM47 118h1v1h-1zM41 84h1v1h-1zM44 39h1v1h-1zM129 82h1v1h-1zM63 80h1v1h-1zM38 29h1v1h-1zM48 45h1v1h-1zM56 102h1v1h-1zM37 80h1v1h-1zM128 33h1v1h-1zM1 86h1v1h-1zM130 28h1v1h-1zM27 111h1v1h-1zM92 61h1v1h-1zM128 114h1v1h-1zM84 102h1v1h-1zM27 50h1v1h-1zM48 97h1v1h-1zM81 21h1v1h-1zM5 21h1v1h-1zM2 111h1v1h-1zM54 6h1v1h-1zM58 97h1v1h-1zM47 84h1v1h-1zM26 7h1v1h-1zM119 88h1v1h-1zM107 82h1v1h-1zM23 113h1v1h-1zM77 69h1v1h-1zM86 84h1v1h-1zM67 22h1v1h-1zM55 79h1v1h-1zM111 107h1v1h-1zM59 85h1v1h-1zM52 122h1v1h-1zM65 82h1v1h-1zM51 41h1v1h-1zM99 32h1v1h-1zM76 75h1v1h-1zM56 6h1v1h-1zM129 105h1v1h-1zM51 124h1v1h-1zM108 41h1v1h-1zM84 53h1v1h-1zM101 90h1v1h-1zM130 100h1v1h-1zM129 50h1v1h-1zM3 52h1v1h-1zM94 91h1v1h-1zM59 92h1v1h-1zM5 49h1v1h-1zM115 0h1v1h-1zM102 52h1v1h-1zM70 119h1v1h-1zM0 123h1v1h-1zM31 94h1v1h-1zM64 12h1v1h-1zM30 50h1v1h-1zM13 23h1v1h-1zM25 112h1v1h-1zM125 27h1v1h-1zM7 72h1v1h-1zM41 61h1v1h-1zM67 53h1v1h-1zM38 21h1v1h-1zM36 12h1v1h-1zM15 59h1v1h-1zM4 94h1v1h-1zM27 39h1v1h-1zM46 11h1v1h-1zM113 100h1v1h-1zM115 104h1v1h-1zM18 120h1v1h-1zM129 23h1v1h-1zM124 12h1v1h-1zM71 79h1v1h-1zM67 78h1v1h-1zM39 24h1v1h-1zM66 90h1v1h-1zM59 55h1v1h-1zM126 23h1v1h-1zM10 94h1v1h-1zM64 102h1v1h-1zM67 111h1v1h-1zM47 46h1v1h-1zM35 63h1v1h-1zM81 31h1v1h-1zM114 5h1v1h-1zM112 122h1v1h-1zM107 80h1v1h-1zM103 100h1v1h-1zM39 100h1v1h-1zM112 47h1v1h-1zM105 123h1v1h-1zM60 120h1v1h-1zM28 21h1v1h-1zM95 81h1v1h-1zM109 102h1v1h-1zM41 11h1v1h-1zM42 81h1v1h-1zM1 32h1v1h-1zM0 94h1v1h-1zM30 102h1v1h-1zM68 31h1v1h-1zM29 97h1v1h-1zM95 90h1v1h-1zM99 31h1v1h-1zM67 115h1v1h-1zM55 60h1v1h-1zM101 47h1v1h-1zM16 67h1v1h-1zM37 97h1v1h-1zM49 115h1v1h-1zM20 64h1v1h-1zM81 107h1v1h-1zM65 91h1v1h-1zM25 21h1v1h-1zM63 95h1v1h-1zM57 81h1v1h-1zM106 49h1v1h-1zM94 45h1v1h-1zM115 34h1v1h-1zM77 2h1v1h-1zM15 47h1v1h-1zM51 17h1v1h-1zM96 107h1v1h-1zM2 44h1v1h-1zM86 61h1v1h-1zM98 113h1v1h-1zM43 16h1v1h-1zM16 0h1v1h-1zM109 126h1v1h-1zM22 70h1v1h-1zM70 75h1v1h-1zM126 116h1v1h-1zM96 37h1v1h-1zM100 81h1v1h-1zM56 67h1v1h-1zM86 119h1v1h-1zM35 116h1v1h-1zM32 67h1v1h-1zM25 105h1v1h-1zM70 56h1v1h-1zM47 25h1v1h-1zM75 88h1v1h-1zM5 43h1v1h-1zM97 70h1v1h-1zM1 2h1v1h-1zM81 113h1v1h-1zM38 30h1v1h-1zM38 13h1v1h-1zM20 10h1v1h-1zM86 12h1v1h-1zM102 83h1v1h-1zM50 21h1v1h-1zM116 121h1v1h-1zM35 11h1v1h-1zM107 46h1v1h-1zM110 120h1v1h-1zM130 38h1v1h-1zM29 120h1v1h-1zM85 64h1v1h-1zM25 66h1v1h-1zM130 63h1v1h-1zM25 3h1v1h-1zM101 38h1v1h-1zM0 114h1v1h-1zM95 119h1v1h-1zM8 67h1v1h-1zM40 105h1v1h-1zM82 90h1v1h-1zM102 41h1v1h-1zM47 69h1v1h-1zM6 80h1v1h-1zM91 14h1v1h-1zM118 73h1v1h-1zM15 15h1v1h-1zM79 29h1v1h-1zM93 29h1v1h-1zM40 53h1v1h-1zM88 105h1v1h-1zM127 120h1v1h-1zM64 36h1v1h-1zM124 9h1v1h-1zM8 77h1v1h-1zM92 29h1v1h-1zM26 118h1v1h-1zM124 107h1v1h-1zM122 124h1v1h-1zM70 4h1v1h-1zM123 8h1v1h-1zM118 118h1v1h-1zM114 21h1v1h-1zM4 19h1v1h-1zM34 45h1v1h-1zM9 46h1v1h-1zM1 24h1v1h-1zM26 82h1v1h-1zM128 80h1v1h-1zM9 39h1v1h-1zM25 39h1v1h-1zM43 99h1v1h-1zM21 27h1v1h-1zM48 76h1v1h-1zM52 14h1v1h-1zM42 49h1v1h-1zM121 62h1v1h-1zM121 97h1v1h-1zM81 106h1v1h-1zM109 91h1v1h-1zM7 75h1v1h-1zM25 102h1v1h-1zM44 49h1v1h-1zM99 5h1v1h-1zM60 70h1v1h-1zM65 80h1v1h-1zM12 72h1v1h-1zM1 64h1v1h-1zM23 81h1v1h-1zM72 99h1v1h-1zM26 95h1v1h-1zM116 19h1v1h-1zM47 14h1v1h-1zM36 9h1v1h-1zM77 18h1v1h-1zM19 23h1v1h-1zM34 39h1v1h-1zM75 45h1v1h-1zM66 108h1v1h-1zM14 53h1v1h-1zM127 32h1v1h-1zM78 75h1v1h-1zM93 73h1v1h-1zM128 37h1v1h-1zM51 1h1v1h-1zM111 62h1v1h-1zM68 114h1v1h-1z" fill="#e8e8e8"/><path d="M75 64h1v1h-1zM29 91h1v1h-1zM7 17h1v1h-1zM37 104h1v1h-1zM119 96h1v1h-1zM0 119h1v1h-1zM104 37h1v1h-1zM39 113h1v1h-1zM33 42h1v1h-1zM129 16h1v1h-1zM61 5h1v1h-1zM110 33h1v1h-1zM4 67h1v1h-1zM67 76h1v1h-1zM107 51h1v1h-1zM65 4h1v1h-1zM32 119h1v1h-1zM126 108h1v1h-1zM64 1h1v1h-1zM86 45h1v1h-1zM20 6h1v1h-1zM69 118h1v1h-1zM24 61h1v1h-1zM66 115h1v1h-1zM83 99h1v1h-1zM70 52h1v1h-1zM86 58h1v1h-1zM49 77h1v1h-1zM77 59h1v1h-1zM108 86h1v1h-1zM124 22h1v1h-1zM0 86h1v1h-1zM65 53h1v1h-1zM86 80h1v1h-1zM69 43h1v1h-1zM110 55h1v1h-1zM118 94h1v1h-1zM98 21h1v1h-1zM32 54h1v1h-1zM23 70h1v1h-1zM115 114h1v1h-1zM74 93h1v1h-1zM53 8h1v1h-1zM114 95h1v1h-1zM71 59h1v1h-1zM54 120h1v1h-1zM114 83h1v1h-1zM46 94h1v1h-1zM0 116h1v1h-1zM106 74h1v1h-1zM11 90h1v1h-1zM44 22h1v1h-1zM18 46h1v1h-1zM35 62h1v1h-1zM124 29h1v1h-1zM58 20h1v1h-1zM128 48h1v1h-1zM32 20h1v1h-1zM56 36h1v1h-1zM6 120h1v1h-1zM39 78h1v1h-1zM14 89h1v1h-1zM16 95h1v1h-1zM125 8h1v1h-1zM53 52h1v1h-1zM11 58h1v1h-1zM24 92h1v1h-1zM91 60h1v1h-1zM14 11h1v1h-1zM56 3h1v1h-1zM24 103h1v1h-1zM74 79h1v1h-1zM40 11h1v1h-1zM28 53h1v1h-1zM31 111h1v1h-1zM117 120h1v1h-1zM6 100h1v1h-1zM57 124h1v1h-1zM16 108h1v1h-1zM25 84h1v1h-1zM59 20h1v1h-1zM64 98h1v1h-1zM85 84h1v1h-1zM13 14h1v1h-1zM77 64h1v1h-1zM25 111h1v1h-1zM49 49h1v1h-1zM77 26h1v1h-1zM99 36h1v1h-1zM118 2h1v1h-1zM40 98h1v1h-1zM109 5h1v1h-1zM23 54h1v1h-1zM115 66h1v1h-1zM9 30h1v1h-1zM101 80h1v1h-1zM123 38h1v1h-1zM116 0h1v1h-1zM7 108h1v1h-1zM104 84h1v1h-1zM84 27h1v1h-1zM103 19h1v1h-1zM11 68h1v1h-1zM19 101h1v1h-1zM110 61h1v1h-1zM56 21h1v1h-1zM2 7h1v1h-1zM49 73h1v1h-1zM47 79h1v1h-1zM121 39h1v1h-1zM44 46h1v1h-1zM49 65h1v1h-1zM15 105h1v1h-1zM98 125h1v1h-1zM24 101h1v1h-1zM100 73h1v1h-1zM32 35h1v1h-1zM7 46h1v1h-1zM123 121h1v1h-1zM22 40h1v1h-1zM112 109h1v1h-1zM123 4h1v1h-1zM24 89h1v1h-1zM34 68h1v1h-1zM114 23h1v1h-1zM127 98h1v1h-1zM66 61h1v1h-1zM57 82h1v1h-1zM41 115h1v1h-1zM108 61h1v1h-1zM111 49h1v1h-1zM89 8h1v1h-1zM10 102h1v1h-1zM102 114h1v1h-1zM122 31h1v1h-1zM36 72h1v1h-1zM104 8h1v1h-1zM0 73h1v1h-1zM87 72h1v1h-1zM100 119h1v1h-1zM96 87h1v1h-1zM85 9h1v1h-1zM11 8h1v1h-1zM119 61h1v1h-1zM9 89h1v1h-1zM77 125h1v1h-1zM1 0h1v1h-1zM97 51h1v1h-1zM122 5h1v1h-1zM72 98h1v1h-1zM61 33h1v1h-1zM4 17h1v1h-1zM88 11h1v1h-1zM38 103h1v1h-1zM51 12h1v1h-1zM97 62h1v1h-1zM49 42h1v1h-1zM58 119h1v1h-1zM117 37h1v1h-1zM75 37h1v1h-1zM66 37h1v1h-1zM76 89h1v1h-1zM29 124h1v1h-1zM40 17h1v1h-1zM9 7h1v1h-1zM36 64h1v1h-1zM86 72h1v1h-1zM26 19h1v1h-1zM41 78h1v1h-1zM92 8h1v1h-1zM105 93h1v1h-1zM23 38h1v1h-1zM58 99h1v1h-1zM18 122h1v1h-1zM50 114h1v1h-1zM38 65h1v1h-1zM9 26h1v1h-1zM51 97h1v1h-1zM127 77h1v1h-1zM101 122h1v1h-1zM50 101h1v1h-1zM20 72h1v1h-1zM7 53h1v1h-1zM30 27h1v1h-1zM17 24h1v1h-1zM18 44h1v1h-1zM3 98h1v1h-1zM21 59h1v1h-1zM35 58h1v1h-1zM24 2h1v1h-1zM58 112h1v1h-1zM107 126h1v1h-1zM79 94h1v1h-1zM27 124h1v1h-1zM76 105h1v1h-1zM43 88h1v1h-1zM86 75h1v1h-1zM5 76h1v1h-1zM36 111h1v1h-1zM89 12h1v1h-1zM80 110h1v1h-1zM26 41h1v1h-1zM43 71h1v1h-1zM72 89h1v1h-1zM72 110h1v1h-1zM121 69h1v1h-1zM89 15h1v1h-1zM111 105h1v1h-1zM24 82h1v1h-1zM11 14h1v1h-1zM27 27h1v1h-1zM99 13h1v1h-1zM35 84h1v1h-1zM106 116h1v1h-1zM19 111h1v1h-1zM35 113h1v1h-1zM99 3h1v1h-1zM22 88h1v1h-1zM18 78h1v1h-1zM42 11h1v1h-1zM118 55h1v1h-1zM95 8h1v1h-1zM28 45h1v1h-1zM116 8h1v1h-1zM10 26h1v1h-1zM74 103h1v1h-1zM16 77h1v1h-1zM62 47h1v1h-1zM124 21h1v1h-1zM68 77h1v1h-1zM34 30h1v1h-1zM98 63h1v1h-1zM102 125h1v1h-1zM89 38h1v1h-1zM17 88h1v1h-1zM53 112h1v1h-1zM50 109h1v1h-1zM22 112h1v1h-1zM79 41h1v1h-1zM69 86h1v1h-1zM25 79h1v1h-1zM123 49h1v1h-1zM91 34h1v1h-1zM128 108h1v1h-1zM40 71h1v1h-1zM63 10h1v1h-1zM71 39h1v1h-1zM32 94h1v1h-1zM37 103h1v1h-1zM17 70h1v1h-1zM60 114h1v1h-1zM46 62h1v1h-1zM36 34h1v1h-1zM4 83h1v1h-1zM98 11h1v1h-1zM28 23h1v1h-1zM39 91h1v1h-1zM120 49h1v1h-1zM106 60h1v1h-1zM49 40h1v1h-1zM56 4h1v1h-1zM18 33h1v1h-1zM49 98h1v1h-1zM105 89h1v1h-1zM42 4h1v1h-1zM40 56h1v1h-1zM33 121h1v1h-1zM13 15h1v1h-1zM4 51h1v1h-1zM79 17h1v1h-1zM98 68h1v1h-1zM10 32h1v1h-1zM26 66h1v1h-1zM101 12h1v1h-1zM129 74h1v1h-1zM115 54h1v1h-1zM0 89h1v1h-1zM4 84h1v1h-1zM1 94h1v1h-1zM50 43h1v1h-1zM85 90h1v1h-1zM16 83h1v1h-1zM26 21h1v1h-1zM68 123h1v1h-1zM85 39h1v1h-1zM34 7h1v1h-1zM67 59h1v1h-1zM116 52h1v1h-1zM111 123h1v1h-1zM109 47h1v1h-1zM46 40h1v1h-1zM78 59h1v1h-1zM113 109h1v1h-1zM113 77h1v1h-1zM15 49h1v1h-1zM75 107h1v1h-1zM107 73h1v1h-1zM129 77h1v1h-1zM61 36h1v1h-1zM52 15h1v1h-1zM22 14h1v1h-1zM70 45h1v1h-1zM130 40h1v1h-1zM60 19h1v1h-1zM97 20h1v1h-1zM98 14h1v1h-1zM43 51h1v1h-1zM73 46h1v1h-1zM121 34h1v1h-1zM123 84h1v1h-1zM108 59h1v1h-1zM8 30h1v1h-1zM126 83h1v1h-1zM57 2h1v1h-1zM17 78h1v1h-1zM56 23h1v1h-1zM113 12h1v1h-1zM79 16h1v1h-1zM124 89h1v1h-1zM38 18h1v1h-1zM1 71h1v1h-1zM24 85h1v1h-1zM112 57h1v1h-1zM76 117h1v1h-1zM32 12h1v1h-1zM60 37h1v1h-1zM51 53h1v1h-1zM74 86h1v1h-1zM41 80h1v1h-1zM69 14h1v1h-1zM61 96h1v1h-1zM105 23h1v1h-1zM74 8h1v1h-1zM41 12h1v1h-1zM119 4h1v1h-1zM79 52h1v1h-1zM119 107h1v1h-1zM84 114h1v1h-1zM0 76h1v1h-1zM38 86h1v1h-1zM38 97h1v1h-1zM117 103h1v1h-1zM46 57h1v1h-1zM99 101h1v1h-1zM67 104h1v1h-1zM95 66h1v1h-1zM100 86h1v1h-1zM34 110h1v1h-1zM25 60h1v1h-1zM42 47h1v1h-1zM85 75h1v1h-1zM53 13h1v1h-1zM122 66h1v1h-1zM47 63h1v1h-1zM114 22h1v1h-1zM107 103h1v1h-1zM37 60h1v1h-1zM11 15h1v1h-1zM12 9h1v1h-1zM6 23h1v1h-1zM21 56h1v1h-1zM61 14h1v1h-1zM90 37h1v1h-1zM8 80h1v1h-1zM109 78h1v1h-1zM103 103h1v1h-1zM114 117h1v1h-1zM61 124h1v1h-1zM100 47h1v1h-1zM67 20h1v1h-1zM52 3h1v1h-1zM59 106h1v1h-1zM93 5h1v1h-1zM121 99h1v1h-1zM81 9h1v1h-1zM104 126h1v1h-1zM2 77h1v1h-1zM91 12h1v1h-1zM96 123h1v1h-1zM6 116h1v1h-1zM123 73h1v1h-1zM66 14h1v1h-1zM21 125h1v1h-1zM66 60h1v1h-1zM129 35h1v1h-1zM101 39h1v1h-1zM23 2h1v1h-1zM60 23h1v1h-1zM57 112h1v1h-1zM99 104h1v1h-1zM64 93h1v1h-1zM73 3h1v1h-1zM81 45h1v1h-1zM24 4h1v1h-1zM98 109h1v1h-1zM104 64h1v1h-1zM32 68h1v1h-1zM36 82h1v1h-1zM92 34h1v1h-1zM21 32h1v1h-1zM58 46h1v1h-1zM34 46h1v1h-1zM42 117h1v1h-1zM90 41h1v1h-1zM88 104h1v1h-1zM110 50h1v1h-1zM34 101h1v1h-1zM9 17h1v1h-1zM86 29h1v1h-1zM26 6h1v1h-1zM18 38h1v1h-1zM75 102h1v1h-1zM123 114h1v1h-1zM121 83h1v1h-1zM106 42h1v1h-1zM23 46h1v1h-1zM30 5h1v1h-1zM34 74h1v1h-1zM88 53h1v1h-1zM24 112h1v1h-1zM52 91h1v1h-1zM101 44h1v1h-1zM60 1h1v1h-1zM30 16h1v1h-1zM105 25h1v1h-1zM60 117h1v1h-1zM67 36h1v1h-1zM88 20h1v1h-1zM64 37h1v1h-1zM130 10h1v1h-1zM12 55h1v1h-1zM113 113h1v1h-1zM66 98h1v1h-1zM25 59h1v1h-1zM83 0h1v1h-1zM96 92h1v1h-1zM60 38h1v1h-1zM33 16h1v1h-1zM58 28h1v1h-1zM60 62h1v1h-1zM32 70h1v1h-1zM51 92h1v1h-1zM14 34h1v1h-1zM19 63h1v1h-1zM101 21h1v1h-1zM70 39h1v1h-1zM88 42h1v1h-1zM84 92h1v1h-1zM111 35h1v1h-1zM43 35h1v1h-1zM123 23h1v1h-1zM121 14h1v1h-1zM53 17h1v1h-1zM128 14h1v1h-1zM111 4h1v1h-1zM23 27h1v1h-1zM93 90h1v1h-1zM35 111h1v1h-1zM126 2h1v1h-1zM85 25h1v1h-1zM2 101h1v1h-1zM105 105h1v1h-1zM29 93h1v1h-1zM104 65h1v1h-1zM60 66h1v1h-1zM100 108h1v1h-1zM82 79h1v1h-1zM55 39h1v1h-1zM10 8h1v1h-1zM51 87h1v1h-1zM111 118h1v1h-1zM80 121h1v1h-1zM111 44h1v1h-1zM21 53h1v1h-1zM28 61h1v1h-1zM95 100h1v1h-1zM110 49h1v1h-1zM46 97h1v1h-1zM74 44h1v1h-1zM113 94h1v1h-1zM16 4h1v1h-1zM103 4h1v1h-1zM72 4h1v1h-1zM69 27h1v1h-1zM8 18h1v1h-1zM67 13h1v1h-1zM91 107h1v1h-1zM21 123h1v1h-1zM30 119h1v1h-1zM58 41h1v1h-1zM6 95h1v1h-1zM20 20h1v1h-1zM92 86h1v1h-1zM75 6h1v1h-1zM76 48h1v1h-1zM65 51h1v1h-1zM60 31h1v1h-1zM14 32h1v1h-1zM26 106h1v1h-1zM68 44h1v1h-1zM98 19h1v1h-1zM111 33h1v1h-1zM87 85h1v1h-1zM112 36h1v1h-1zM41 44h1v1h-1zM11 87h1v1h-1zM119 65h1v1h-1zM73 112h1v1h-1zM89 112h1v1h-1zM25 64h1v1h-1zM65 8h1v1h-1zM110 38h1v1h-1zM87 79h1v1h-1zM91 56h1v1h-1zM120 71h1v1h-1zM129 34h1v1h-1zM127 35h1v1h-1zM0 17h1v1h-1zM81 56h1v1h-1zM38 88h1v1h-1zM96 16h1v1h-1zM35 31h1v1h-1z" fill="#c4c4c4"/><path d="M123 16h1v1h-1zM101 55h1v1h-1zM109 82h1v1h-1zM39 98h1v1h-1zM107 31h1v1h-1zM17 69h1v1h-1zM106 76h1v1h-1zM62 123h1v1h-1zM66 26h1v1h-1zM103 99h1v1h-1zM112 99h1v1h-1zM80 81h1v1h-1zM127 76h1v1h-1zM61 68h1v1h-1zM130 81h1v1h-1zM32 40h1v1h-1zM47 29h1v1h-1zM14 48h1v1h-1zM7 13h1v1h-1zM19 72h1v1h-1zM52 87h1v1h-1zM73 126h1v1h-1zM126 122h1v1h-1zM39 96h1v1h-1zM123 67h1v1h-1zM36 89h1v1h-1zM121 49h1v1h-1zM72 72h1v1h-1zM49 41h1v1h-1zM128 110h1v1h-1zM27 19h1v1h-1zM4 58h1v1h-1zM61 37h1v1h-1zM62 74h1v1h-1zM7 83h1v1h-1zM48 62h1v1h-1zM3 108h1v1h-1zM16 34h1v1h-1zM126 104h1v1h-1zM56 18h1v1h-1zM45 111h1v1h-1zM7 39h1v1h-1zM89 31h1v1h-1zM68 80h1v1h-1zM100 49h1v1h-1zM40 39h1v1h-1zM106 21h1v1h-1zM111 94h1v1h-1zM127 53h1v1h-1zM113 2h1v1h-1zM82 18h1v1h-1zM103 95h1v1h-1zM67 94h1v1h-1zM23 110h1v1h-1zM45 63h1v1h-1zM40 54h1v1h-1zM129 109h1v1h-1zM117 108h1v1h-1zM108 49h1v1h-1zM115 80h1v1h-1zM120 56h1v1h-1zM68 66h1v1h-1zM88 99h1v1h-1zM39 107h1v1h-1zM52 22h1v1h-1zM61 83h1v1h-1zM79 98h1v1h-1zM77 27h1v1h-1zM59 51h1v1h-1zM49 56h1v1h-1zM30 114h1v1h-1zM82 62h1v1h-1zM8 71h1v1h-1zM97 58h1v1h-1zM116 18h1v1h-1zM6 114h1v1h-1zM33 75h1v1h-1zM124 15h1v1h-1zM5 85h1v1h-1zM77 20h1v1h-1zM14 114h1v1h-1zM21 76h1v1h-1zM74 81h1v1h-1zM57 58h1v1h-1zM25 126h1v1h-1zM75 39h1v1h-1zM31 96h1v1h-1zM111 51h1v1h-1zM16 54h1v1h-1zM41 29h1v1h-1zM115 99h1v1h-1zM76 73h1v1h-1zM86 39h1v1h-1zM94 82h1v1h-1zM41 20h1v1h-1zM113 11h1v1h-1zM18 22h1v1h-1zM3 63h1v1h-1zM86 53h1v1h-1zM28 93h1v1h-1zM82 44h1v1h-1zM117 22h1v1h-1zM77 85h1v1h-1zM86 94h1v1h-1zM68 107h1v1h-1zM86 65h1v1h-1zM28 73h1v1h-1zM10 125h1v1h-1zM21 18h1v1h-1zM17 111h1v1h-1zM17 13h1v1h-1zM96 22h1v1h-1zM112 93h1v1h-1zM24 87h1v1h-1zM113 40h1v1h-1zM40 28h1v1h-1zM106 30h1v1h-1zM27 34h1v1h-1zM73 1h1v1h-1zM130 11h1v1h-1zM24 13h1v1h-1zM114 119h1v1h-1zM77 19h1v1h-1zM42 84h1v1h-1zM94 64h1v1h-1zM50 47h1v1h-1zM18 60h1v1h-1zM19 93h1v1h-1zM93 43h1v1h-1zM120 48h1v1h-1zM33 68h1v1h-1zM12 113h1v1h-1zM58 15h1v1h-1zM19 1h1v1h-1zM58 117h1v1h-1zM59 61h1v1h-1zM111 77h1v1h-1zM34 16h1v1h-1zM71 92h1v1h-1zM126 22h1v1h-1zM123 12h1v1h-1zM31 19h1v1h-1zM108 44h1v1h-1zM5 37h1v1h-1zM67 121h1v1h-1zM103 106h1v1h-1zM92 111h1v1h-1zM44 111h1v1h-1zM39 125h1v1h-1zM21 64h1v1h-1zM99 28h1v1h-1zM105 92h1v1h-1zM76 14h1v1h-1zM105 51h1v1h-1zM92 75h1v1h-1zM28 52h1v1h-1zM5 55h1v1h-1zM72 34h1v1h-1zM69 41h1v1h-1zM62 7h1v1h-1zM7 59h1v1h-1zM94 14h1v1h-1zM5 10h1v1h-1zM59 42h1v1h-1zM42 23h1v1h-1zM109 87h1v1h-1zM92 10h1v1h-1zM84 95h1v1h-1zM13 80h1v1h-1zM21 8h1v1h-1zM49 12h1v1h-1zM9 68h1v1h-1zM20 11h1v1h-1zM11 55h1v1h-1zM98 12h1v1h-1zM93 37h1v1h-1zM4 125h1v1h-1zM76 28h1v1h-1zM55 13h1v1h-1zM42 74h1v1h-1zM101 29h1v1h-1zM124 104h1v1h-1zM55 22h1v1h-1zM108 124h1v1h-1zM108 120h1v1h-1zM88 55h1v1h-1zM60 67h1v1h-1zM32 37h1v1h-1zM33 5h1v1h-1zM62 33h1v1h-1zM26 22h1v1h-1zM126 110h1v1h-1zM45 93h1v1h-1zM37 3h1v1h-1zM83 91h1v1h-1zM42 34h1v1h-1zM9 94h1v1h-1zM47 123h1v1h-1zM113 36h1v1h-1zM17 59h1v1h-1zM60 49h1v1h-1zM117 118h1v1h-1zM3 116h1v1h-1zM28 114h1v1h-1zM13 17h1v1h-1zM41 100h1v1h-1zM67 28h1v1h-1zM34 43h1v1h-1zM90 33h1v1h-1zM78 52h1v1h-1zM55 65h1v1h-1zM94 85h1v1h-1zM103 28h1v1h-1zM30 116h1v1h-1zM123 72h1v1h-1zM55 75h1v1h-1zM100 20h1v1h-1zM76 96h1v1h-1zM92 104h1v1h-1zM50 50h1v1h-1zM26 31h1v1h-1zM6 3h1v1h-1zM109 100h1v1h-1zM22 28h1v1h-1zM8 54h1v1h-1zM104 109h1v1h-1zM96 49h1v1h-1zM68 90h1v1h-1zM112 25h1v1h-1zM107 100h1v1h-1zM45 31h1v1h-1zM74 65h1v1h-1zM37 4h1v1h-1zM106 56h1v1h-1zM56 78h1v1h-1zM98 25h1v1h-1zM23 41h1v1h-1zM30 46h1v1h-1zM98 79h1v1h-1zM9 61h1v1h-1zM72 113h1v1h-1zM60 3h1v1h-1zM64 54h1v1h-1zM23 68h1v1h-1zM81 30h1v1h-1zM108 118h1v1h-1zM71 68h1v1h-1zM70 26h1v1h-1zM73 31h1v1h-1zM32 123h1v1h-1zM24 42h1v1h-1zM22 53h1v1h-1zM97 78h1v1h-1zM46 22h1v1h-1zM98 97h1v1h-1zM114 120h1v1h-1zM1 77h1v1h-1zM21 65h1v1h-1zM116 85h1v1h-1zM120 41h1v1h-1zM33 79h1v1h-1zM104 46h1v1h-1zM62 58h1v1h-1zM128 122h1v1h-1zM92 47h1v1h-1zM12 118h1v1h-1zM88 19h1v1h-1zM130 76h1v1h-1zM102 81h1v1h-1zM129 31h1v1h-1zM28 59h1v1h-1zM88 17h1v1h-1zM98 64h1v1h-1zM99 55h1v1h-1zM50 60h1v1h-1zM5 81h1v1h-1zM30 47h1v1h-1zM36 65h1v1h-1zM20 102h1v1h-1zM40 55h1v1h-1zM38 76h1v1h-1zM97 46h1v1h-1zM119 59h1v1h-1zM122 77h1v1h-1zM92 103h1v1h-1zM26 111h1v1h-1zM24 24h1v1h-1zM59 37h1v1h-1zM6 98h1v1h-1zM5 65h1v1h-1zM68 8h1v1h-1zM37 123h1v1h-1zM77 55h1v1h-1zM4 9h1v1h-1zM97 119h1v1h-1zM110 87h1v1h-1zM9 91h1v1h-1zM12 105h1v1h-1zM114 41h1v1h-1zM34 49h1v1h-1zM118 124h1v1h-1zM43 114h1v1h-1zM23 4h1v1h-1zM15 123h1v1h-1zM124 90h1v1h-1zM107 118h1v1h-1zM83 47h1v1h-1zM16 53h1v1h-1zM105 115h1v1h-1zM29 35h1v1h-1zM41 95h1v1h-1zM128 12h1v1h-1zM120 23h1v1h-1zM128 45h1v1h-1zM66 86h1v1h-1zM94 62h1v1h-1zM57 40h1v1h-1zM66 79h1v1h-1zM92 106h1v1h-1zM75 115h1v1h-1zM14 42h1v1h-1zM120 115h1v1h-1zM90 105h1v1h-1zM81 110h1v1h-1zM27 119h1v1h-1zM63 3h1v1h-1zM127 109h1v1h-1zM112 71h1v1h-1zM67 49h1v1h-1zM32 39h1v1h-1zM37 121h1v1h-1zM78 34h1v1h-1zM28 50h1v1h-1zM64 10h1v1h-1zM45 90h1v1h-1zM35 48h1v1h-1zM81 79h1v1h-1zM16 56h1v1h-1zM104 48h1v1h-1zM118 14h1v1h-1zM18 90h1v1h-1zM121 48h1v1h-1zM90 75h1v1h-1zM37 57h1v1h-1zM81 50h1v1h-1zM106 85h1v1h-1zM12 48h1v1h-1zM17 101h1v1h-1zM54 2h1v1h-1zM119 60h1v1h-1zM11 62h1v1h-1zM70 23h1v1h-1zM77 71h1v1h-1zM82 24h1v1h-1zM96 81h1v1h-1zM14 88h1v1h-1zM100 116h1v1h-1zM95 37h1v1h-1zM67 74h1v1h-1zM54 113h1v1h-1zM115 55h1v1h-1zM94 54h1v1h-1zM130 59h1v1h-1zM85 11h1v1h-1zM122 49h1v1h-1zM110 113h1v1h-1zM117 16h1v1h-1zM3 50h1v1h-1zM12 88h1v1h-1zM6 55h1v1h-1zM15 91h1v1h-1zM69 47h1v1h-1zM115 36h1v1h-1zM43 74h1v1h-1zM48 59h1v1h-1zM101 70h1v1h-1zM105 102h1v1h-1zM37 20h1v1h-1zM10 5h1v1h-1zM88 121h1v1h-1zM71 2h1v1h-1zM14 80h1v1h-1zM112 37h1v1h-1zM77 68h1v1h-1zM128 5h1v1h-1zM12 12h1v1h-1zM76 67h1v1h-1zM11 1h1v1h-1zM77 46h1v1h-1zM27 97h1v1h-1zM1 8h1v1h-1zM51 21h1v1h-1zM99 113h1v1h-1zM6 65h1v1h-1zM78 112h1v1h-1zM57 84h1v1h-1zM76 40h1v1h-1zM76 27h1v1h-1zM116 74h1v1h-1zM63 91h1v1h-1zM4 32h1v1h-1zM69 83h1v1h-1zM108 1h1v1h-1zM128 69h1v1h-1zM13 29h1v1h-1zM37 39h1v1h-1zM126 114h1v1h-1zM116 51h1v1h-1zM113 104h1v1h-1zM83 75h1v1h-1zM79 96h1v1h-1zM72 35h1v1h-1zM21 47h1v1h-1zM64 81h1v1h-1zM22 121h1v1h-1zM34 121h1v1h-1zM121 65h1v1h-1zM19 109h1v1h-1zM64 118h1v1h-1zM117 55h1v1h-1zM122 11h1v1h-1zM32 90h1v1h-1zM86 112h1v1h-1zM0 62h1v1h-1zM126 13h1v1h-1zM82 6h1v1h-1zM81 48h1v1h-1zM110 97h1v1h-1zM50 69h1v1h-1zM110 37h1v1h-1zM103 67h1v1h-1zM119 77h1v1h-1zM47 56h1v1h-1zM88 87h1v1h-1zM49 58h1v1h-1zM108 92h1v1h-1zM16 55h1v1h-1zM81 46h1v1h-1zM6 70h1v1h-1zM68 32h1v1h-1zM93 9h1v1h-1zM94 29h1v1h-1zM39 90h1v1h-1zM2 115h1v1h-1zM64 90h1v1h-1zM87 26h1v1h-1zM93 48h1v1h-1zM61 87h1v1h-1zM54 89h1v1h-1zM47 55h1v1h-1zM40 52h1v1h-1zM38 75h1v1h-1zM57 34h1v1h-1zM15 39h1v1h-1zM118 12h1v1h-1zM47 80h1v1h-1zM126 125h1v1h-1zM36 41h1v1h-1zM104 58h1v1h-1zM75 10h1v1h-1zM29 112h1v1h-1zM97 53h1v1h-1zM50 45h1v1h-1zM85 123h1v1h-1zM7 94h1v1h-1zM69 34h1v1h-1zM84 78h1v1h-1zM1 19h1v1h-1zM83 112h1v1h-1zM45 107h1v1h-1zM82 112h1v1h-1zM2 104h1v1h-1zM46 79h1v1h-1zM13 7h1v1h-1zM16 14h1v1h-1zM16 23h1v1h-1zM32 16h1v1h-1zM13 25h1v1h-1zM36 123h1v1h-1zM46 36h1v1h-1zM47 48h1v1h-1zM107 109h1v1h-1zM107 30h1v1h-1zM32 26h1v1h-1zM97 104h1v1h-1zM39 5h1v1h-1zM37 51h1v1h-1zM91 20h1v1h-1zM88 29h1v1h-1zM11 71h1v1h-1zM17 104h1v1h-1zM91 111h1v1h-1zM110 85h1v1h-1zM13 92h1v1h-1zM70 69h1v1h-1zM24 58h1v1h-1zM108 116h1v1h-1zM91 83h1v1h-1zM38 6h1v1h-1zM44 64h1v1h-1zM48 120h1v1h-1zM18 68h1v1h-1zM66 54h1v1h-1zM101 35h1v1h-1zM95 108h1v1h-1zM95 73h1v1h-1zM25 73h1v1h-1zM40 59h1v1h-1zM40 103h1v1h-1zM51 91h1v1h-1zM18 0h1v1h-1zM76 118h1v1h-1zM56 60h1v1h-1zM13 116h1v1h-1zM18 73h1v1h-1zM72 39h1v1h-1zM70 25h1v1h-1zM19 0h1v1h-1zM118 61h1v1h-1zM119 122h1v1h-1zM129 47h1v1h-1zM24 37h1v1h-1zM110 46h1v1h-1zM38 92h1v1h-1zM93 77h1v1h-1zM89 25h1v1h-1zM88 33h1v1h-1zM113 34h1v1h-1zM79 105h1v1h-1zM57 47h1v1h-1zM81 51h1v1h-1zM70 86h1v1h-1zM9 107h1v1h-1zM102 38h1v1h-1zM116 23h1v1h-1zM89 22h1v1h-1zM113 15h1v1h-1zM21 91h1v1h-1zM77 44h1v1h-1zM113 74h1v1h-1zM36 115h1v1h-1zM116 76h1v1h-1zM0 95h1v1h-1zM1 84h1v1h-1zM110 70h1v1h-1zM73 119h1v1h-1zM104 94h1v1h-1zM52 86h1v1h-1zM28 79h1v1h-1zM90 110h1v1h-1zM72 17h1v1h-1zM26 72h1v1h-1zM42 108h1v1h-1zM44 10h1v1h-1zM25 11h1v1h-1zM82 7h1v1h-1zM57 125h1v1h-1zM115 84h1v1h-1zM58 123h1v1h-1zM84 117h1v1h-1zM18 18h1v1h-1zM116 58h1v1h-1zM81 119h1v1h-1zM110 0h1v1h-1zM4 88h1v1h-1zM63 109h1v1h-1zM82 111h1v1h-1zM94 108h1v1h-1zM73 57h1v1h-1zM8 112h1v1h-1zM36 33h1v1h-1zM73 118h1v1h-1zM114 48h1v1h-1zM78 68h1v1h-1zM43 33h1v1h-1zM94 56h1v1h-1zM60 119h1v1h-1zM111 2h1v1h-1zM35 39h1v1h-1zM87 89h1v1h-1zM33 87h1v1h-1zM51 22h1v1h-1zM47 101h1v1h-1zM11 111h1v1h-1zM83 7h1v1h-1zM4 70h1v1h-1zM25 77h1v1h-1zM35 44h1v1h-1zM60 105h1v1h-1zM46 125h1v1h-1zM85 98h1v1h-1zM32 75h1v1h-1zM12 97h1v1h-1zM83 103h1v1h-1zM47 58h1v1h-1zM67 68h1v1h-1zM48 42h1v1h-1zM59 78h1v1h-1zM26 51h1v1h-1zM127 74h1v1h-1zM87 40h1v1h-1zM118 116h1v1h-1zM34 89h1v1h-1zM122 52h1v1h-1zM54 107h1v1h-1zM121 89h1v1h-1zM32 38h1v1h-1zM88 27h1v1h-1zM15 67h1v1h-1zM67 16h1v1h-1zM73 17h1v1h-1zM110 26h1v1h-1zM54 33h1v1h-1zM86 8h1v1h-1zM27 13h1v1h-1zM44 34h1v1h-1zM94 123h1v1h-1zM23 14h1v1h-1zM63 35h1v1h-1zM16 21h1v1h-1zM53 62h1v1h-1zM21 34h1v1h-1zM123 17h1v1h-1zM32 41h1v1h-1zM102 53h1v1h-1zM31 59h1v1h-1zM65 27h1v1h-1zM90 92h1v1h-1zM59 71h1v1h-1zM108 18h1v1h-1zM59 100h1v1h-1zM83 35h1v1h-1zM91 16h1v1h-1zM86 111h1v1h-1zM77 74h1v1h-1zM13 89h1v1h-1zM51 15h1v1h-1zM116 32h1v1h-1zM125 49h1v1h-1zM1 100h1v1h-1zM117 38h1v1h-1zM90 68h1v1h-1zM42 51h1v1h-1zM46 111h1v1h-1zM96 40h1v1h-1zM26 33h1v1h-1zM43 75h1v1h-1zM28 124h1v1h-1zM115 13h1v1h-1zM116 119h1v1h-1zM109 83h1v1h-1zM77 73h1v1h-1zM90 112h1v1h-1zM73 20h1v1h-1zM51 46h1v1h-1zM77 3h1v1h-1zM4 15h1v1h-1zM40 112h1v1h-1zM45 77h1v1h-1zM44 126h1v1h-1z" fill="#c030d0"/><path d="M15 26h1v1h-1zM130 102h1v1h-1zM1 67h1v1h-1zM80 66h1v1h-1zM35 104h1v1h-1zM123 13h1v1h-1zM92 56h1v1h-1zM95 103h1v1h-1zM50 97h1v1h-1zM49 45h1v1h-1zM79 75h1v1h-1zM88 70h1v1h-1zM125 59h1v1h-1zM28 63h1v1h-1zM1 42h1v1h-1zM25 76h1v1h-1zM7 124h1v1h-1zM126 61h1v1h-1zM77 111h1v1h-1zM54 25h1v1h-1zM25 14h1v1h-1zM55 112h1v1h-1zM97 113h1v1h-1zM89 54h1v1h-1zM81 112h1v1h-1zM26 32h1v1h-1zM96 55h1v1h-1zM88 63h1v1h-1zM100 88h1v1h-1zM90 45h1v1h-1zM68 101h1v1h-1zM33 28h1v1h-1zM80 1h1v1h-1zM44 4h1v1h-1zM65 34h1v1h-1zM12 85h1v1h-1zM105 54h1v1h-1zM61 24h1v1h-1zM21 97h1v1h-1zM21 2h1v1h-1zM130 62h1v1h-1zM86 56h1v1h-1zM27 4h1v1h-1zM43 5h1v1h-1zM17 79h1v1h-1zM98 114h1v1h-1zM93 42h1v1h-1zM59 12h1v1h-1zM70 67h1v1h-1zM49 47h1v1h-1zM71 43h1v1h-1zM4 126h1v1h-1zM33 22h1v1h-1zM108 106h1v1h-1zM56 105h1v1h-1zM110 124h1v1h-1zM33 118h1v1h-1zM116 11h1v1h-1zM8 75h1v1h-1zM129 29h1v1h-1zM70 20h1v1h-1zM103 34h1v1h-1zM17 72h1v1h-1zM128 30h1v1h-1zM115 57h1v1h-1zM120 88h1v1h-1zM90 62h1v1h-1zM8 81h1v1h-1zM125 55h1v1h-1zM73 24h1v1h-1zM9 117h1v1h-1zM25 95h1v1h-1zM98 9h1v1h-1zM14 67h1v1h-1zM48 98h1v1h-1zM54 16h1v1h-1zM120 28h1v1h-1zM55 57h1v1h-1zM115 77h1v1h-1zM49 18h1v1h-1zM14 103h1v1h-1zM24 93h1v1h-1zM130 29h1v1h-1zM121 70h1v1h-1zM36 1h1v1h-1zM43 103h1v1h-1zM34 59h1v1h-1zM61 101h1v1h-1zM67 77h1v1h-1zM7 90h1v1h-1zM118 16h1v1h-1zM18 113h1v1h-1zM50 87h1v1h-1zM57 86h1v1h-1zM37 125h1v1h-1zM28 24h1v1h-1zM1 50h1v1h-1zM103 35h1v1h-1zM66 45h1v1h-1zM80 97h1v1h-1zM21 30h1v1h-1zM121 75h1v1h-1zM87 116h1v1h-1zM2 33h1v1h-1zM34 86h1v1h-1zM11 37h1v1h-1zM10 56h1v1h-1zM24 17h1v1h-1zM49 97h1v1h-1zM10 49h1v1h-1zM18 88h1v1h-1zM45 40h1v1h-1zM74 73h1v1h-1zM98 95h1v1h-1zM112 60h1v1h-1zM96 42h1v1h-1zM21 43h1v1h-1zM10 53h1v1h-1zM79 28h1v1h-1zM92 66h1v1h-1zM61 64h1v1h-1zM8 120h1v1h-1zM77 23h1v1h-1zM113 1h1v1h-1zM127 11h1v1h-1zM100 61h1v1h-1zM91 15h1v1h-1zM5 121h1v1h-1zM18 39h1v1h-1zM99 54h1v1h-1zM15 93h1v1h-1zM6 109h1v1h-1zM105 1h1v1h-1zM101 76h1v1h-1zM33 51h1v1h-1zM127 108h1v1h-1zM127 23h1v1h-1zM118 52h1v1h-1zM51 68h1v1h-1zM80 29h1v1h-1zM78 81h1v1h-1zM87 51h1v1h-1zM65 37h1v1h-1zM16 76h1v1h-1zM7 122h1v1h-1zM65 90h1v1h-1zM99 41h1v1h-1zM90 57h1v1h-1zM49 10h1v1h-1zM63 93h1v1h-1zM73 96h1v1h-1zM129 122h1v1h-1zM42 39h1v1h-1zM71 112h1v1h-1zM125 67h1v1h-1zM28 34h1v1h-1zM88 76h1v1h-1zM43 84h1v1h-1zM104 90h1v1h-1zM89 32h1v1h-1zM31 6h1v1h-1zM40 9h1v1h-1zM1 38h1v1h-1zM93 87h1v1h-1zM123 83h1v1h-1zM95 30h1v1h-1zM47 120h1v1h-1zM41 73h1v1h-1zM95 50h1v1h-1zM32 110h1v1h-1zM100 29h1v1h-1zM22 116h1v1h-1zM75 41h1v1h-1zM7 30h1v1h-1zM75 0h1v1h-1zM105 56h1v1h-1zM8 50h1v1h-1zM68 33h1v1h-1zM45 105h1v1h-1zM35 51h1v1h-1zM52 99h1v1h-1zM123 113h1v1h-1zM56 65h1v1h-1zM53 63h1v1h-1zM60 113h1v1h-1zM74 100h1v1h-1zM106 105h1v1h-1zM18 6h1v1h-1zM113 103h1v1h-1zM70 115h1v1h-1zM101 92h1v1h-1zM55 64h1v1h-1zM50 107h1v1h-1zM61 86h1v1h-1zM125 51h1v1h-1zM104 17h1v1h-1zM91 103h1v1h-1zM130 18h1v1h-1zM71 104h1v1h-1zM39 124h1v1h-1zM120 39h1v1h-1zM56 26h1v1h-1zM57 45h1v1h-1zM85 46h1v1h-1zM127 111h1v1h-1zM2 27h1v1h-1zM38 0h1v1h-1zM60 124h1v1h-1zM38 46h1v1h-1zM114 93h1v1h-1zM113 125h1v1h-1zM93 126h1v1h-1zM118 64h1v1h-1zM55 96h1v1h-1zM50 83h1v1h-1zM37 118h1v1h-1zM116 29h1v1h-1zM92 46h1v1h-1zM106 72h1v1h-1zM13 3h1v1h-1zM16 38h1v1h-1zM39 30h1v1h-1zM84 11h1v1h-1zM126 96h1v1h-1zM11 21h1v1h-1zM122 75h1v1h-1zM41 49h1v1h-1zM27 59h1v1h-1zM38 35h1v1h-1zM108 60h1v1h-1zM117 21h1v1h-1zM116 104h1v1h-1zM7 99h1v1h-1zM126 91h1v1h-1zM116 14h1v1h-1zM31 20h1v1h-1zM117 62h1v1h-1zM51 43h1v1h-1zM31 115h1v1h-1zM92 28h1v1h-1zM53 28h1v1h-1zM78 38h1v1h-1zM31 68h1v1h-1zM83 116h1v1h-1zM103 113h1v1h-1zM89 72h1v1h-1zM26 92h1v1h-1zM86 55h1v1h-1zM47 85h1v1h-1zM11 30h1v1h-1zM120 25h1v1h-1zM0 60h1v1h-1zM43 52h1v1h-1zM60 27h1v1h-1zM49 125h1v1h-1zM83 105h1v1h-1zM65 61h1v1h-1zM64 47h1v1h-1zM121 63h1v1h-1zM80 115h1v1h-1zM114 101h1v1h-1zM28 55h1v1h-1zM85 38h1v1h-1zM122 61h1v1h-1zM107 22h1v1h-1zM123 30h1v1h-1zM84 122h1v1h-1zM108 0h1v1h-1zM109 93h1v1h-1zM60 53h1v1h-1zM89 60h1v1h-1zM46 44h1v1h-1zM4 56h1v1h-1zM103 90h1v1h-1zM11 60h1v1h-1zM66 22h1v1h-1zM104 122h1v1h-1zM111 38h1v1h-1zM58 106h1v1h-1zM44 68h1v1h-1zM13 104h1v1h-1zM1 102h1v1h-1zM88 56h1v1h-1zM65 50h1v1h-1zM68 21h1v1h-1zM111 53h1v1h-1zM23 96h1v1h-1zM40 120h1v1h-1zM46 46h1v1h-1zM81 73h1v1h-1zM83 108h1v1h-1zM113 10h1v1h-1zM83 115h1v1h-1zM113 126h1v1h-1zM61 12h1v1h-1zM13 100h1v1h-1zM69 125h1v1h-1zM3 4h1v1h-1zM129 17h1v1h-1zM112 65h1v1h-1zM99 60h1v1h-1zM96 71h1v1h-1zM70 87h1v1h-1zM125 121h1v1h-1zM126 0h1v1h-1zM0 15h1v1h-1zM52 32h1v1h-1zM36 19h1v1h-1zM8 62h1v1h-1zM79 126h1v1h-1zM49 109h1v1h-1zM75 20h1v1h-1zM128 22h1v1h-1zM39 97h1v1h-1zM89 17h1v1h-1zM92 105h1v1h-1zM94 38h1v1h-1zM46 115h1v1h-1zM116 64h1v1h-1zM111 3h1v1h-1zM92 62h1v1h-1zM91 37h1v1h-1zM92 115h1v1h-1zM7 66h1v1h-1zM37 109h1v1h-1zM85 32h1v1h-1zM106 73h1v1h-1zM21 75h1v1h-1zM62 112h1v1h-1zM33 41h1v1h-1zM32 106h1v1h-1zM69 74h1v1h-1zM111 71h1v1h-1zM31 28h1v1h-1zM46 21h1v1h-1zM35 79h1v1h-1zM116 88h1v1h-1zM124 10h1v1h-1zM71 53h1v1h-1zM110 52h1v1h-1zM11 122h1v1h-1zM15 7h1v1h-1zM13 19h1v1h-1zM85 8h1v1h-1zM31 22h1v1h-1zM128 24h1v1h-1zM126 33h1v1h-1zM123 10h1v1h-1zM38 99h1v1h-1zM105 38h1v1h-1zM5 114h1v1h-1zM8 93h1v1h-1zM105 42h1v1h-1zM0 100h1v1h-1zM36 84h1v1h-1z" fill="#40c0d0"/><path d="M61 105h1v1h-1zM94 99h1v1h-1zM58 58h1v1h-1zM76 91h1v1h-1zM20 95h1v1h-1zM0 105h1v1h-1zM11 45h1v1h-1zM51 73h1v1h-1zM88 31h1v1h-1zM63 106h1v1h-1zM127 125h1v1h-1zM49 117h1v1h-1zM31 97h1v1h-1zM89 75h1v1h-1zM36 83h1v1h-1zM119 98h1v1h-1zM54 38h1v1h-1zM1 63h1v1h-1zM113 79h1v1h-1zM68 59h1v1h-1zM120 100h1v1h-1zM98 71h1v1h-1zM106 79h1v1h-1zM110 21h1v1h-1zM114 80h1v1h-1zM38 59h1v1h-1zM32 69h1v1h-1zM2 9h1v1h-1zM2 81h1v1h-1zM100 0h1v1h-1zM108 47h1v1h-1zM32 118h1v1h-1zM59 115h1v1h-1zM83 78h1v1h-1zM110 86h1v1h-1zM63 51h1v1h-1zM2 17h1v1h-1zM8 108h1v1h-1zM30 59h1v1h-1zM34 73h1v1h-1zM83 28h1v1h-1zM25 107h1v1h-1zM127 122h1v1h-1zM3 112h1v1h-1zM119 2h1v1h-1zM16 125h1v1h-1zM129 83h1v1h-1zM121 6h1v1h-1zM111 32h1v1h-1zM59 14h1v1h-1zM14 41h1v1h-1zM41 43h1v1h-1zM51 78h1v1h-1zM110 65h1v1h-1zM16 116h1v1h-1zM79 13h1v1h-1zM69 64h1v1h-1zM101 117h1v1h-1zM37 46h1v1h-1zM123 123h1v1h-1zM23 25h1v1h-1zM60 97h1v1h-1zM51 57h1v1h-1zM67 6h1v1h-1zM11 32h1v1h-1zM84 28h1v1h-1zM29 16h1v1h-1zM4 76h1v1h-1zM82 108h1v1h-1zM59 90h1v1h-1zM105 77h1v1h-1zM81 1h1v1h-1zM85 105h1v1h-1zM61 99h1v1h-1zM65 29h1v1h-1zM126 123h1v1h-1zM51 7h1v1h-1zM64 0h1v1h-1zM73 53h1v1h-1zM44 59h1v1h-1zM38 63h1v1h-1zM46 118h1v1h-1zM58 64h1v1h-1zM116 33h1v1h-1zM70 88h1v1h-1zM64 96h1v1h-1zM20 67h1v1h-1zM107 88h1v1h-1zM83 113h1v1h-1zM82 32h1v1h-1zM49 66h1v1h-1zM120 8h1v1h-1zM105 113h1v1h-1zM123 104h1v1h-1zM125 24h1v1h-1zM1 83h1v1h-1zM6 25h1v1h-1zM123 94h1v1h-1zM14 110h1v1h-1zM49 61h1v1h-1zM74 111h1v1h-1zM32 59h1v1h-1zM7 77h1v1h-1zM40 88h1v1h-1zM120 60h1v1h-1zM64 56h1v1h-1zM29 36h1v1h-1zM120 36h1v1h-1zM0 109h1v1h-1zM48 103h1v1h-1zM99 125h1v1h-1zM61 85h1v1h-1zM128 126h1v1h-1zM20 53h1v1h-1zM9 33h1v1h-1zM124 96h1v1h-1zM105 7h1v1h-1zM101 18h1v1h-1zM110 24h1v1h-1zM52 0h1v1h-1zM89 9h1v1h-1zM14 65h1v1h-1zM79 117h1v1h-1zM91 42h1v1h-1zM62 1h1v1h-1zM57 80h1v1h-1zM115 63h1v1h-1zM77 92h1v1h-1zM105 126h1v1h-1zM102 22h1v1h-1zM59 58h1v1h-1zM25 5h1v1h-1zM79 97h1v1h-1zM58 95h1v1h-1zM18 102h1v1h-1zM89 63h1v1h-1zM4 50h1v1h-1zM56 93h1v1h-1zM81 104h1v1h-1zM48 25h1v1h-1zM63 48h1v1h-1zM53 27h1v1h-1zM53 89h1v1h-1zM58 69h1v1h-1zM30 42h1v1h-1zM39 115h1v1h-1zM65 101h1v1h-1zM86 77h1v1h-1zM33 122h1v1h-1zM29 21h1v1h-1zM24 63h1v1h-1zM94 19h1v1h-1zM43 90h1v1h-1zM92 26h1v1h-1zM117 33h1v1h-1zM3 56h1v1h-1zM93 107h1v1h-1zM68 15h1v1h-1zM88 106h1v1h-1zM71 11h1v1h-1zM129 120h1v1h-1zM30 76h1v1h-1zM26 40h1v1h-1zM52 118h1v1h-1zM118 123h1v1h-1zM57 25h1v1h-1zM129 58h1v1h-1zM7 68h1v1h-1zM66 106h1v1h-1zM86 28h1v1h-1zM95 9h1v1h-1zM70 2h1v1h-1zM83 80h1v1h-1zM105 13h1v1h-1zM26 126h1v1h-1zM14 29h1v1h-1zM120 97h1v1h-1zM126 68h1v1h-1zM15 30h1v1h-1zM26 109h1v1h-1zM87 13h1v1h-1zM124 110h1v1h-1zM99 114h1v1h-1zM125 77h1v1h-1zM56 88h1v1h-1zM66 109h1v1h-1zM114 126h1v1h-1zM60 51h1v1h-1zM107 114h1v1h-1zM7 50h1v1h-1zM4 117h1v1h-1zM82 113h1v1h-1zM115 11h1v1h-1zM37 62h1v1h-1zM36 112h1v1h-1zM127 16h1v1h-1zM66 38h1v1h-1zM109 36h1v1h-1zM0 82h1v1h-1zM96 76h1v1h-1zM100 50h1v1h-1zM95 125h1v1h-1zM17 85h1v1h-1zM3 43h1v1h-1zM49 124h1v1h-1zM42 126h1v1h-1zM119 28h1v1h-1zM5 17h1v1h-1zM108 12h1v1h-1zM22 124h1v1h-1zM55 5h1v1h-1zM68 118h1v1h-1zM90 12h1v1h-1zM118 109h1v1h-1zM19 38h1v1h-1zM109 33h1v1h-1zM43 17h1v1h-1zM1 10h1v1h-1zM32 29h1v1h-1zM71 32h1v1h-1zM81 111h1v1h-1zM101 41h1v1h-1zM42 30h1v1h-1zM63 112h1v1h-1zM125 6h1v1h-1zM81 24h1v1h-1zM15 17h1v1h-1zM101 26h1v1h-1zM86 42h1v1h-1zM47 18h1v1h-1zM127 57h1v1h-1zM97 26h1v1h-1zM78 46h1v1h-1zM39 110h1v1h-1zM128 1h1v1h-1zM57 109h1v1h-1zM53 36h1v1h-1zM20 98h1v1h-1zM39 68h1v1h-1zM13 115h1v1h-1zM88 36h1v1h-1zM64 62h1v1h-1zM59 40h1v1h-1zM54 48h1v1h-1zM57 38h1v1h-1zM31 114h1v1h-1zM129 70h1v1h-1zM45 19h1v1h-1zM94 97h1v1h-1zM98 81h1v1h-1zM17 25h1v1h-1zM47 28h1v1h-1zM9 100h1v1h-1zM8 79h1v1h-1zM91 85h1v1h-1zM54 46h1v1h-1zM47 124h1v1h-1zM62 106h1v1h-1zM71 47h1v1h-1zM42 3h1v1h-1zM111 56h1v1h-1zM33 82h1v1h-1zM6 119h1v1h-1zM85 117h1v1h-1zM7 88h1v1h-1zM65 110h1v1h-1zM130 33h1v1h-1zM55 109h1v1h-1zM57 11h1v1h-1zM53 68h1v1h-1zM127 110h1v1h-1zM6 123h1v1h-1zM91 116h1v1h-1zM67 48h1v1h-1zM12 3h1v1h-1zM103 52h1v1h-1zM54 39h1v1h-1zM53 83h1v1h-1zM8 56h1v1h-1zM15 81h1v1h-1zM116 107h1v1h-1zM74 125h1v1h-1zM24 71h1v1h-1zM41 68h1v1h-1zM18 124h1v1h-1zM108 103h1v1h-1zM101 54h1v1h-1zM106 126h1v1h-1z" fill="#c8c840"/><path d="M44 91h1v1h-1zM18 2h1v1h-1zM90 104h1v1h-1zM48 90h1v1h-1zM115 88h1v1h-1zM66 42h1v1h-1zM75 24h1v1h-1zM128 95h1v1h-1zM57 90h1v1h-1zM19 113h1v1h-1zM3 36h1v1h-1zM95 18h1v1h-1zM26 101h1v1h-1zM97 82h1v1h-1zM123 64h1v1h-1zM12 53h1v1h-1zM32 76h1v1h-1zM105 64h1v1h-1zM82 105h1v1h-1zM95 20h1v1h-1zM27 3h1v1h-1zM119 30h1v1h-1zM83 119h1v1h-1zM31 32h1v1h-1zM112 80h1v1h-1zM49 79h1v1h-1zM5 64h1v1h-1zM41 106h1v1h-1zM34 104h1v1h-1zM73 77h1v1h-1zM110 101h1v1h-1zM111 41h1v1h-1zM69 6h1v1h-1zM111 112h1v1h-1zM24 73h1v1h-1zM98 93h1v1h-1zM16 110h1v1h-1zM53 24h1v1h-1zM101 91h1v1h-1zM99 59h1v1h-1zM13 102h1v1h-1zM100 39h1v1h-1zM23 92h1v1h-1zM70 61h1v1h-1zM86 47h1v1h-1zM55 105h1v1h-1zM4 37h1v1h-1zM21 111h1v1h-1zM71 100h1v1h-1zM119 6h1v1h-1zM119 29h1v1h-1zM91 50h1v1h-1zM96 114h1v1h-1zM109 123h1v1h-1zM17 31h1v1h-1zM100 55h1v1h-1zM122 107h1v1h-1zM103 118h1v1h-1zM29 2h1v1h-1zM20 120h1v1h-1zM53 43h1v1h-1zM73 102h1v1h-1zM102 48h1v1h-1zM37 53h1v1h-1zM108 70h1v1h-1zM99 43h1v1h-1zM48 82h1v1h-1zM35 56h1v1h-1zM77 24h1v1h-1zM45 16h1v1h-1zM28 107h1v1h-1zM107 107h1v1h-1zM22 114h1v1h-1zM52 19h1v1h-1zM62 37h1v1h-1zM87 83h1v1h-1zM87 59h1v1h-1zM46 58h1v1h-1zM124 52h1v1h-1zM119 36h1v1h-1zM124 48h1v1h-1zM79 56h1v1h-1zM95 1h1v1h-1zM124 6h1v1h-1zM98 120h1v1h-1zM16 51h1v1h-1zM66 76h1v1h-1zM38 34h1v1h-1zM26 39h1v1h-1zM94 24h1v1h-1zM15 86h1v1h-1zM66 78h1v1h-1zM1 18h1v1h-1zM30 111h1v1h-1zM99 75h1v1h-1zM126 90h1v1h-1zM69 92h1v1h-1zM96 33h1v1h-1zM22 37h1v1h-1zM64 72h1v1h-1zM65 59h1v1h-1zM53 6h1v1h-1zM70 100h1v1h-1zM7 96h1v1h-1zM13 64h1v1h-1zM53 77h1v1h-1zM116 2h1v1h-1zM123 62h1v1h-1zM52 67h1v1h-1zM19 73h1v1h-1zM102 117h1v1h-1zM24 39h1v1h-1zM83 19h1v1h-1zM52 33h1v1h-1zM26 10h1v1h-1zM32 24h1v1h-1zM41 83h1v1h-1zM13 76h1v1h-1zM8 105h1v1h-1zM49 5h1v1h-1zM90 42h1v1h-1zM113 0h1v1h-1zM52 40h1v1h-1zM38 56h1v1h-1zM105 10h1v1h-1zM55 107h1v1h-1zM8 6h1v1h-1zM128 102h1v1h-1zM56 124h1v1h-1zM114 109h1v1h-1zM88 40h1v1h-1zM111 122h1v1h-1zM88 94h1v1h-1zM21 31h1v1h-1zM72 41h1v1h-1zM73 111h1v1h-1zM23 13h1v1h-1zM27 93h1v1h-1zM33 100h1v1h-1zM116 87h1v1h-1zM97 42h1v1h-1zM25 90h1v1h-1zM24 34h1v1h-1zM14 82h1v1h-1zM20 55h1v1h-1zM88 108h1v1h-1zM62 86h1v1h-1zM16 121h1v1h-1zM103 47h1v1h-1zM119 111h1v1h-1zM72 54h1v1h-1zM92 42h1v1h-1zM130 15h1v1h-1zM26 50h1v1h-1zM37 75h1v1h-1zM78 90h1v1h-1zM57 72h1v1h-1zM96 95h1v1h-1zM99 122h1v1h-1zM22 59h1v1h-1zM72 68h1v1h-1zM105 108h1v1h-1zM87 101h1v1h-1zM103 5h1v1h-1zM77 116h1v1h-1zM60 78h1v1h-1zM78 110h1v1h-1zM28 26h1v1h-1zM50 30h1v1h-1zM34 123h1v1h-1zM126 12h1v1h-1zM17 87h1v1h-1zM14 84h1v1h-1zM22 105h1v1h-1zM97 85h1v1h-1zM78 44h1v1h-1zM46 48h1v1h-1zM98 72h1v1h-1zM43 25h1v1h-1zM29 115h1v1h-1zM2 11h1v1h-1zM100 9h1v1h-1zM45 43h1v1h-1zM20 93h1v1h-1zM6 79h1v1h-1zM13 101h1v1h-1zM129 124h1v1h-1zM104 54h1v1h-1zM9 105h1v1h-1zM97 11h1v1h-1zM118 111h1v1h-1zM55 45h1v1h-1zM38 104h1v1h-1zM45 79h1v1h-1zM82 122h1v1h-1zM44 116h1v1h-1zM8 82h1v1h-1zM13 1h1v1h-1zM89 84h1v1h-1zM122 63h1v1h-1zM31 124h1v1h-1zM76 126h1v1h-1zM43 23h1v1h-1zM117 0h1v1h-1zM43 87h1v1h-1zM18 109h1v1h-1zM28 89h1v1h-1zM8 25h1v1h-1zM47 90h1v1h-1zM59 98h1v1h-1zM123 76h1v1h-1zM34 34h1v1h-1zM95 80h1v1h-1zM110 51h1v1h-1zM26 1h1v1h-1zM62 67h1v1h-1zM65 99h1v1h-1zM7 89h1v1h-1zM91 67h1v1h-1zM114 106h1v1h-1zM59 15h1v1h-1zM113 27h1v1h-1zM113 78h1v1h-1zM5 103h1v1h-1zM38 102h1v1h-1zM50 61h1v1h-1zM23 105h1v1h-1zM64 105h1v1h-1zM28 13h1v1h-1zM111 98h1v1h-1z" fill="#80b080"/><path d="M89 46h1v1h-1zM66 105h1v1h-1zM91 26h1v1h-1zM58 7h1v1h-1zM25 15h1v1h-1zM114 0h1v1h-1zM78 77h1v1h-1zM83 53h1v1h-1zM57 33h1v1h-1zM42 104h1v1h-1zM124 34h1v1h-1zM67 8h1v1h-1zM70 47h1v1h-1zM62 48h1v1h-1zM106 75h1v1h-1zM105 26h1v1h-1zM42 14h1v1h-1zM123 25h1v1h-1zM123 22h1v1h-1zM54 19h1v1h-1zM62 18h1v1h-1zM120 79h1v1h-1zM32 98h1v1h-1zM23 32h1v1h-1zM13 39h1v1h-1zM109 74h1v1h-1zM50 40h1v1h-1zM54 93h1v1h-1zM27 86h1v1h-1zM68 24h1v1h-1zM107 67h1v1h-1zM92 3h1v1h-1zM88 5h1v1h-1zM77 35h1v1h-1zM47 96h1v1h-1zM68 49h1v1h-1zM30 112h1v1h-1zM55 32h1v1h-1zM19 125h1v1h-1zM61 23h1v1h-1zM128 77h1v1h-1zM101 110h1v1h-1zM88 46h1v1h-1zM39 51h1v1h-1zM15 111h1v1h-1zM4 48h1v1h-1zM112 81h1v1h-1zM78 29h1v1h-1zM40 76h1v1h-1zM81 43h1v1h-1zM64 83h1v1h-1zM51 102h1v1h-1zM80 41h1v1h-1zM77 115h1v1h-1zM107 74h1v1h-1zM21 102h1v1h-1zM33 23h1v1h-1zM93 120h1v1h-1zM17 120h1v1h-1zM6 88h1v1h-1zM122 122h1v1h-1zM113 102h1v1h-1zM8 65h1v1h-1zM109 71h1v1h-1zM110 71h1v1h-1zM65 74h1v1h-1zM56 82h1v1h-1zM91 75h1v1h-1zM99 107h1v1h-1zM77 112h1v1h-1zM100 111h1v1h-1zM37 115h1v1h-1zM92 15h1v1h-1zM118 3h1v1h-1zM77 29h1v1h-1zM80 60h1v1h-1zM76 100h1v1h-1zM16 99h1v1h-1zM124 62h1v1h-1zM1 12h1v1h-1zM95 32h1v1h-1zM95 4h1v1h-1zM127 14h1v1h-1zM115 28h1v1h-1zM49 21h1v1h-1zM6 46h1v1h-1zM97 96h1v1h-1zM17 73h1v1h-1zM48 16h1v1h-1zM101 3h1v1h-1zM40 50h1v1h-1zM42 111h1v1h-1zM122 55h1v1h-1zM54 80h1v1h-1zM39 39h1v1h-1zM90 23h1v1h-1zM78 16h1v1h-1zM63 54h1v1h-1zM108 73h1v1h-1zM65 75h1v1h-1zM103 51h1v1h-1zM11 56h1v1h-1zM48 61h1v1h-1zM96 80h1v1h-1zM113 43h1v1h-1zM54 44h1v1h-1zM63 17h1v1h-1zM57 0h1v1h-1zM102 16h1v1h-1zM18 35h1v1h-1zM29 22h1v1h-1zM106 120h1v1h-1zM8 78h1v1h-1zM121 50h1v1h-1zM12 46h1v1h-1zM99 9h1v1h-1zM51 122h1v1h-1zM104 104h1v1h-1zM29 48h1v1h-1zM95 96h1v1h-1zM87 24h1v1h-1zM22 33h1v1h-1zM28 81h1v1h-1zM75 97h1v1h-1zM50 102h1v1h-1zM123 31h1v1h-1zM27 10h1v1h-1zM57 39h1v1h-1zM62 94h1v1h-1zM69 122h1v1h-1zM24 76h1v1h-1zM122 32h1v1h-1zM50 18h1v1h-1zM88 85h1v1h-1zM94 68h1v1h-1zM50 4h1v1h-1zM53 79h1v1h-1zM104 5h1v1h-1zM93 34h1v1h-1zM33 17h1v1h-1zM24 94h1v1h-1zM99 30h1v1h-1zM122 39h1v1h-1zM34 10h1v1h-1zM36 55h1v1h-1zM97 43h1v1h-1zM108 126h1v1h-1zM38 19h1v1h-1zM48 50h1v1h-1zM120 111h1v1h-1zM91 65h1v1h-1zM46 126h1v1h-1zM62 35h1v1h-1zM90 80h1v1h-1z" fill="#c8a0a8"/></pattern><pattern id="pb" patternUnits="userSpaceOnUse" x="0" y="0" width="131" height="127"><path d="M118 104h1v1h-1zM90 42h1v1h-1zM76 107h1v1h-1zM48 45h1v1h-1zM92 88h1v1h-1zM6 48h1v1h-1zM111 101h1v1h-1zM41 42h1v1h-1zM127 45h1v1h-1zM27 107h1v1h-1zM85 48h1v1h-1zM117 37h1v1h-1zM122 115h1v1h-1zM120 42h1v1h-1zM20 104h1v1h-1zM106 107h1v1h-1zM59 32h1v1h-1zM4 96h1v1h-1zM55 61h1v1h-1zM113 39h1v1h-1zM99 104h1v1h-1zM112 43h1v1h-1zM57 107h1v1h-1zM29 45h1v1h-1zM48 58h1v1h-1zM122 7h1v1h-1zM15 110h1v1h-1zM92 101h1v1h-1zM6 61h1v1h-1zM108 45h1v1h-1zM8 107h1v1h-1zM22 5h1v1h-1zM27 120h1v1h-1zM127 58h1v1h-1zM25 47h1v1h-1zM85 61h1v1h-1zM30 125h1v1h-1zM84 102h1v1h-1zM43 64h1v1h-1zM4 109h1v1h-1zM78 58h1v1h-1zM17 48h1v1h-1zM36 61h1v1h-1zM52 5h1v1h-1zM38 107h1v1h-1zM112 56h1v1h-1zM10 8h1v1h-1zM115 61h1v1h-1zM73 64h1v1h-1zM64 15h1v1h-1zM31 67h1v1h-1zM3 5h1v1h-1zM22 18h1v1h-1zM75 110h1v1h-1zM66 61h1v1h-1zM11 125h1v1h-1zM52 126h1v1h-1zM98 13h1v1h-1zM43 77h1v1h-1zM1 80h1v1h-1zM87 120h1v1h-1zM45 123h1v1h-1zM119 72h1v1h-1zM77 75h1v1h-1zM75 2h1v1h-1zM61 67h1v1h-1zM94 15h1v1h-1zM93 19h1v1h-1zM38 120h1v1h-1zM10 21h1v1h-1zM128 13h1v1h-1zM73 77h1v1h-1zM114 78h1v1h-1zM67 3h1v1h-1zM12 67h1v1h-1zM86 16h1v1h-1zM70 8h1v1h-1zM3 18h1v1h-1zM88 62h1v1h-1zM107 75h1v1h-1zM126 88h1v1h-1zM79 13h1v1h-1zM65 78h1v1h-1zM68 83h1v1h-1zM109 121h1v1h-1zM21 8h1v1h-1zM26 86h1v1h-1zM67 124h1v1h-1zM100 72h1v1h-1zM42 67h1v1h-1zM61 80h1v1h-1zM80 93h1v1h-1zM33 18h1v1h-1zM19 83h1v1h-1zM109 13h1v1h-1zM95 78h1v1h-1zM12 80h1v1h-1zM89 34h1v1h-1zM56 86h1v1h-1zM9 11h1v1h-1zM88 75h1v1h-1zM5 40h1v1h-1zM123 32h1v1h-1zM68 96h1v1h-1zM21 21h1v1h-1zM26 99h1v1h-1zM125 78h1v1h-1zM42 80h1v1h-1zM74 32h1v1h-1zM19 96h1v1h-1zM60 97h1v1h-1zM13 22h1v1h-1zM51 48h1v1h-1zM35 40h1v1h-1zM95 91h1v1h-1zM53 94h1v1h-1zM72 107h1v1h-1zM14 102h1v1h-1zM48 100h1v1h-1zM122 49h1v1h-1zM81 48h1v1h-1zM20 38h1v1h-1zM39 51h1v1h-1zM125 91h1v1h-1zM4 30h1v1h-1zM23 43h1v1h-1zM83 94h1v1h-1zM96 33h1v1h-1zM60 110h1v1h-1zM99 38h1v1h-1zM44 102h1v1h-1zM118 51h1v1h-1zM57 41h1v1h-1zM2 105h1v1h-1zM76 54h1v1h-1zM120 97h1v1h-1zM111 48h1v1h-1zM78 100h1v1h-1zM97 113h1v1h-1zM50 38h1v1h-1zM69 51h1v1h-1zM110 52h1v1h-1zM55 116h1v1h-1zM14 115h1v1h-1zM48 113h1v1h-1zM122 62h1v1h-1zM4 43h1v1h-1zM23 56h1v1h-1zM25 102h1v1h-1zM44 115h1v1h-1zM120 110h1v1h-1zM18 62h1v1h-1zM59 100h1v1h-1zM97 126h1v1h-1zM50 51h1v1h-1zM8 54h1v1h-1zM11 59h1v1h-1zM126 9h1v1h-1zM112 111h1v1h-1zM103 62h1v1h-1zM45 57h1v1h-1zM119 6h1v1h-1zM105 108h1v1h-1zM64 70h1v1h-1zM22 73h1v1h-1zM80 14h1v1h-1zM66 116h1v1h-1zM112 3h1v1h-1zM82 60h1v1h-1zM15 70h1v1h-1zM114 12h1v1h-1zM59 113h1v1h-1zM31 14h1v1h-1zM17 116h1v1h-1zM91 65h1v1h-1zM52 73h1v1h-1zM126 22h1v1h-1zM10 76h1v1h-1zM68 17h1v1h-1zM54 119h1v1h-1zM128 68h1v1h-1zM109 55h1v1h-1zM100 6h1v1h-1zM86 71h1v1h-1zM58 9h1v1h-1zM3 73h1v1h-1zM89 76h1v1h-1zM42 1h1v1h-1zM121 65h1v1h-1zM47 79h1v1h-1zM19 17h1v1h-1zM98 81h1v1h-1zM82 73h1v1h-1zM101 86h1v1h-1zM54 11h1v1h-1zM95 12h1v1h-1zM40 76h1v1h-1zM12 14h1v1h-1zM53 15h1v1h-1zM107 22h1v1h-1zM65 25h1v1h-1zM51 90h1v1h-1zM128 81h1v1h-1zM7 20h1v1h-1zM125 12h1v1h-1zM70 76h1v1h-1zM89 89h1v1h-1zM42 14h1v1h-1zM83 15h1v1h-1zM102 28h1v1h-1zM19 30h1v1h-1zM5 95h1v1h-1zM21 76h1v1h-1zM39 93h1v1h-1zM116 84h1v1h-1zM14 36h1v1h-1zM13 77h1v1h-1zM32 90h1v1h-1zM49 30h1v1h-1zM90 31h1v1h-1zM70 89h1v1h-1zM111 90h1v1h-1zM83 28h1v1h-1zM102 41h1v1h-1zM69 93h1v1h-1zM41 31h1v1h-1zM60 44h1v1h-1zM44 36h1v1h-1zM2 39h1v1h-1zM81 103h1v1h-1zM34 28h1v1h-1zM39 106h1v1h-1zM37 33h1v1h-1zM78 34h1v1h-1zM129 36h1v1h-1zM55 50h1v1h-1zM113 28h1v1h-1zM99 93h1v1h-1zM16 95h1v1h-1zM90 44h1v1h-1zM76 109h1v1h-1zM6 50h1v1h-1zM9 92h1v1h-1zM50 93h1v1h-1zM124 42h1v1h-1zM105 29h1v1h-1zM69 106h1v1h-1zM108 34h1v1h-1zM127 47h1v1h-1zM27 109h1v1h-1zM30 114h1v1h-1zM62 103h1v1h-1zM103 104h1v1h-1zM20 106h1v1h-1zM78 47h1v1h-1zM64 112h1v1h-1zM96 101h1v1h-1zM30 6h1v1h-1zM112 45h1v1h-1zM71 44h1v1h-1zM29 47h1v1h-1zM6 63h1v1h-1zM64 4h1v1h-1zM50 106h1v1h-1zM108 47h1v1h-1zM66 50h1v1h-1zM57 1h1v1h-1zM84 104h1v1h-1zM101 7h1v1h-1zM1 69h1v1h-1zM106 122h1v1h-1zM45 112h1v1h-1zM64 125h1v1h-1zM77 64h1v1h-1zM94 4h1v1h-1zM52 7h1v1h-1zM112 58h1v1h-1zM128 2h1v1h-1zM45 4h1v1h-1zM86 5h1v1h-1zM31 69h1v1h-1zM94 125h1v1h-1zM24 66h1v1h-1zM98 15h1v1h-1zM82 7h1v1h-1zM45 125h1v1h-1zM58 64h1v1h-1zM75 4h1v1h-1zM121 120h1v1h-1zM52 20h1v1h-1zM93 21h1v1h-1zM79 123h1v1h-1zM63 115h1v1h-1zM86 18h1v1h-1zM72 83h1v1h-1zM46 67h1v1h-1zM49 72h1v1h-1zM21 10h1v1h-1zM40 23h1v1h-1zM81 24h1v1h-1zM26 88h1v1h-1zM125 67h1v1h-1zM58 77h1v1h-1zM42 69h1v1h-1zM116 18h1v1h-1zM19 85h1v1h-1zM32 24h1v1h-1zM51 37h1v1h-1zM35 29h1v1h-1zM95 80h1v1h-1zM114 93h1v1h-1zM67 18h1v1h-1zM14 91h1v1h-1zM47 39h1v1h-1zM46 80h1v1h-1zM5 42h1v1h-1zM104 21h1v1h-1zM49 85h1v1h-1zM123 34h1v1h-1zM81 37h1v1h-1zM83 83h1v1h-1zM41 86h1v1h-1zM44 91h1v1h-1zM76 43h1v1h-1zM117 81h1v1h-1zM34 83h1v1h-1zM53 96h1v1h-1zM92 24h1v1h-1zM97 102h1v1h-1zM69 40h1v1h-1zM129 91h1v1h-1zM48 102h1v1h-1zM6 105h1v1h-1zM23 45h1v1h-1zM96 35h1v1h-1zM41 99h1v1h-1zM99 40h1v1h-1zM44 104h1v1h-1zM118 53h1v1h-1zM2 107h1v1h-1zM117 94h1v1h-1zM92 37h1v1h-1zM37 101h1v1h-1zM18 51h1v1h-1zM97 115h1v1h-1zM50 40h1v1h-1zM36 105h1v1h-1zM8 43h1v1h-1zM27 56h1v1h-1zM11 48h1v1h-1zM71 99h1v1h-1zM90 112h1v1h-1zM87 43h1v1h-1zM106 56h1v1h-1zM6 118h1v1h-1zM4 45h1v1h-1zM45 46h1v1h-1zM105 97h1v1h-1zM124 110h1v1h-1zM25 104h1v1h-1zM85 118h1v1h-1zM43 121h1v1h-1zM59 102h1v1h-1zM78 115h1v1h-1zM17 105h1v1h-1zM75 46h1v1h-1zM11 61h1v1h-1zM126 11h1v1h-1zM24 0h1v1h-1zM84 51h1v1h-1zM115 118h1v1h-1zM87 56h1v1h-1zM128 57h1v1h-1zM1 16h1v1h-1zM31 124h1v1h-1zM105 110h1v1h-1zM64 72h1v1h-1zM3 62h1v1h-1zM22 75h1v1h-1zM61 3h1v1h-1zM38 56h1v1h-1zM114 14h1v1h-1zM12 3h1v1h-1zM31 16h1v1h-1zM58 119h1v1h-1zM52 75h1v1h-1zM93 76h1v1h-1zM10 78h1v1h-1zM68 19h1v1h-1zM12 124h1v1h-1zM86 73h1v1h-1zM58 11h1v1h-1zM130 116h1v1h-1zM42 3h1v1h-1zM61 16h1v1h-1zM47 81h1v1h-1zM95 14h1v1h-1zM40 78h1v1h-1zM114 27h1v1h-1zM12 16h1v1h-1zM53 17h1v1h-1zM72 30h1v1h-1zM129 12h1v1h-1zM33 75h1v1h-1zM32 79h1v1h-1zM49 19h1v1h-1zM35 84h1v1h-1zM89 91h1v1h-1zM9 68h1v1h-1zM83 17h1v1h-1zM0 19h1v1h-1zM60 33h1v1h-1zM63 75h1v1h-1zM21 78h1v1h-1zM62 79h1v1h-1zM37 22h1v1h-1zM116 86h1v1h-1zM13 79h1v1h-1zM32 92h1v1h-1zM118 95h1v1h-1zM48 36h1v1h-1zM125 27h1v1h-1zM92 79h1v1h-1zM9 81h1v1h-1zM124 31h1v1h-1zM69 95h1v1h-1zM60 46h1v1h-1zM25 25h1v1h-1zM2 41h1v1h-1zM122 106h1v1h-1zM34 30h1v1h-1zM120 33h1v1h-1zM23 100h1v1h-1zM97 49h1v1h-1zM14 51h1v1h-1zM55 52h1v1h-1zM96 90h1v1h-1zM99 95h1v1h-1zM71 33h1v1h-1zM90 46h1v1h-1zM92 92h1v1h-1zM111 105h1v1h-1zM105 31h1v1h-1zM50 95h1v1h-1zM8 98h1v1h-1zM127 49h1v1h-1zM11 103h1v1h-1zM44 51h1v1h-1zM2 54h1v1h-1zM76 3h1v1h-1zM122 119h1v1h-1zM87 98h1v1h-1zM59 36h1v1h-1zM4 100h1v1h-1zM23 113h1v1h-1zM99 108h1v1h-1zM115 52h1v1h-1zM106 3h1v1h-1zM105 44h1v1h-1zM50 108h1v1h-1zM110 122h1v1h-1zM22 9h1v1h-1zM66 52h1v1h-1zM11 116h1v1h-1zM24 55h1v1h-1zM84 106h1v1h-1zM103 119h1v1h-1zM15 6h1v1h-1zM101 9h1v1h-1zM106 124h1v1h-1zM18 11h1v1h-1zM119 63h1v1h-1zM91 1h1v1h-1zM80 71h1v1h-1zM52 9h1v1h-1zM38 111h1v1h-1zM98 125h1v1h-1zM82 117h1v1h-1zM86 7h1v1h-1zM31 71h1v1h-1zM91 122h1v1h-1zM121 1h1v1h-1zM33 117h1v1h-1zM79 4h1v1h-1zM24 68h1v1h-1zM98 17h1v1h-1zM82 9h1v1h-1zM68 74h1v1h-1zM1 84h1v1h-1zM109 112h1v1h-1zM42 58h1v1h-1zM116 7h1v1h-1zM61 71h1v1h-1zM10 25h1v1h-1zM109 4h1v1h-1zM21 120h1v1h-1zM95 69h1v1h-1zM114 82h1v1h-1zM31 84h1v1h-1zM70 12h1v1h-1zM130 63h1v1h-1zM5 31h1v1h-1zM63 9h1v1h-1zM123 23h1v1h-1zM21 12h1v1h-1zM7 77h1v1h-1zM40 25h1v1h-1zM26 90h1v1h-1zM125 69h1v1h-1zM42 71h1v1h-1zM116 20h1v1h-1zM102 85h1v1h-1zM0 74h1v1h-1zM74 23h1v1h-1zM93 36h1v1h-1zM95 82h1v1h-1zM70 25h1v1h-1zM9 15h1v1h-1zM14 93h1v1h-1zM129 80h1v1h-1zM104 23h1v1h-1zM90 88h1v1h-1zM7 90h1v1h-1zM20 29h1v1h-1zM125 82h1v1h-1zM96 24h1v1h-1zM41 88h1v1h-1zM13 26h1v1h-1zM44 93h1v1h-1zM118 42h1v1h-1zM32 39h1v1h-1zM16 31h1v1h-1zM2 96h1v1h-1zM117 83h1v1h-1zM76 45h1v1h-1zM34 85h1v1h-1zM53 98h1v1h-1zM92 26h1v1h-1zM111 39h1v1h-1zM97 104h1v1h-1zM69 42h1v1h-1zM14 106h1v1h-1zM8 32h1v1h-1zM71 88h1v1h-1zM30 50h1v1h-1zM103 40h1v1h-1zM48 104h1v1h-1zM122 53h1v1h-1zM106 45h1v1h-1zM6 107h1v1h-1zM4 34h1v1h-1zM64 48h1v1h-1zM83 98h1v1h-1zM124 99h1v1h-1zM96 37h1v1h-1zM41 101h1v1h-1zM127 104h1v1h-1zM25 93h1v1h-1zM99 42h1v1h-1zM38 32h1v1h-1zM57 45h1v1h-1zM76 58h1v1h-1zM120 101h1v1h-1zM18 53h1v1h-1zM50 42h1v1h-1zM55 120h1v1h-1zM115 107h1v1h-1zM105 99h1v1h-1zM64 61h1v1h-1zM3 51h1v1h-1zM127 117h1v1h-1zM25 106h1v1h-1zM66 107h1v1h-1zM24 110h1v1h-1zM57 58h1v1h-1zM15 61h1v1h-1zM73 2h1v1h-1zM31 5h1v1h-1zM17 107h1v1h-1zM91 56h1v1h-1zM36 120h1v1h-1zM110 69h1v1h-1zM33 51h1v1h-1zM24 2h1v1h-1zM84 53h1v1h-1zM87 58h1v1h-1zM128 59h1v1h-1zM73 123h1v1h-1zM86 62h1v1h-1zM31 126h1v1h-1zM3 64h1v1h-1zM77 13h1v1h-1zM89 67h1v1h-1zM82 64h1v1h-1zM54 2h1v1h-1zM12 5h1v1h-1zM75 61h1v1h-1zM88 0h1v1h-1zM33 64h1v1h-1zM49 8h1v1h-1zM68 21h1v1h-1zM54 123h1v1h-1zM128 72h1v1h-1zM89 80h1v1h-1zM61 18h1v1h-1zM47 83h1v1h-1zM0 8h1v1h-1zM82 77h1v1h-1zM123 78h1v1h-1zM72 32h1v1h-1zM116 75h1v1h-1zM14 27h1v1h-1zM46 16h1v1h-1zM32 81h1v1h-1zM49 21h1v1h-1zM7 24h1v1h-1zM111 81h1v1h-1zM47 96h1v1h-1zM41 22h1v1h-1zM5 99h1v1h-1zM44 27h1v1h-1zM21 80h1v1h-1zM62 81h1v1h-1zM117 17h1v1h-1zM34 19h1v1h-1zM53 32h1v1h-1zM20 84h1v1h-1zM97 38h1v1h-1zM74 91h1v1h-1zM113 19h1v1h-1zM118 97h1v1h-1zM7 37h1v1h-1zM6 41h1v1h-1zM111 94h1v1h-1zM50 84h1v1h-1zM41 35h1v1h-1zM127 38h1v1h-1zM27 100h1v1h-1zM25 27h1v1h-1zM104 91h1v1h-1zM62 94h1v1h-1zM103 95h1v1h-1zM20 97h1v1h-1zM78 38h1v1h-1zM23 102h1v1h-1zM36 41h1v1h-1zM113 32h1v1h-1zM13 94h1v1h-1zM118 110h1v1h-1zM71 35h1v1h-1zM57 100h1v1h-1zM29 38h1v1h-1zM48 51h1v1h-1zM92 94h1v1h-1zM50 97h1v1h-1zM69 110h1v1h-1zM110 111h1v1h-1zM108 38h1v1h-1zM27 113h1v1h-1zM66 41h1v1h-1zM84 95h1v1h-1zM43 57h1v1h-1zM106 113h1v1h-1zM119 52h1v1h-1zM17 41h1v1h-1zM36 54h1v1h-1zM22 119h1v1h-1zM55 67h1v1h-1zM38 100h1v1h-1zM10 1h1v1h-1zM73 57h1v1h-1zM18 121h1v1h-1zM108 51h1v1h-1zM8 113h1v1h-1zM94 116h1v1h-1zM66 54h1v1h-1zM11 118h1v1h-1zM85 67h1v1h-1zM24 57h1v1h-1zM98 6h1v1h-1zM101 11h1v1h-1zM87 113h1v1h-1zM128 114h1v1h-1zM1 73h1v1h-1zM17 54h1v1h-1zM3 119h1v1h-1zM94 8h1v1h-1zM52 11h1v1h-1zM38 113h1v1h-1zM10 14h1v1h-1zM114 71h1v1h-1zM12 60h1v1h-1zM70 1h1v1h-1zM89 14h1v1h-1zM121 3h1v1h-1zM5 20h1v1h-1zM79 6h1v1h-1zM65 71h1v1h-1zM82 11h1v1h-1zM123 12h1v1h-1zM109 114h1v1h-1zM68 76h1v1h-1zM21 1h1v1h-1zM26 79h1v1h-1zM58 68h1v1h-1zM77 81h1v1h-1zM42 60h1v1h-1zM121 124h1v1h-1zM80 86h1v1h-1zM33 11h1v1h-1zM63 119h1v1h-1zM109 6h1v1h-1zM21 122h1v1h-1zM95 71h1v1h-1zM54 70h1v1h-1zM53 74h1v1h-1zM72 87h1v1h-1zM70 14h1v1h-1zM130 65h1v1h-1zM9 4h1v1h-1zM28 17h1v1h-1zM107 81h1v1h-1zM46 71h1v1h-1zM5 33h1v1h-1zM123 25h1v1h-1zM102 87h1v1h-1zM0 76h1v1h-1zM74 25h1v1h-1zM19 89h1v1h-1zM32 28h1v1h-1zM118 31h1v1h-1zM35 33h1v1h-1zM34 74h1v1h-1zM92 15h1v1h-1zM37 79h1v1h-1zM111 28h1v1h-1zM9 17h1v1h-1zM69 31h1v1h-1zM113 74h1v1h-1zM104 25h1v1h-1zM30 39h1v1h-1zM122 42h1v1h-1zM125 84h1v1h-1zM4 23h1v1h-1zM23 36h1v1h-1zM83 87h1v1h-1zM96 26h1v1h-1zM41 90h1v1h-1zM25 82h1v1h-1zM118 44h1v1h-1zM34 87h1v1h-1zM120 90h1v1h-1zM92 28h1v1h-1zM37 92h1v1h-1zM50 31h1v1h-1zM55 109h1v1h-1zM129 95h1v1h-1zM8 34h1v1h-1zM113 87h1v1h-1zM30 52h1v1h-1zM29 93h1v1h-1zM103 42h1v1h-1zM122 55h1v1h-1zM20 44h1v1h-1zM106 47h1v1h-1zM23 49h1v1h-1zM96 39h1v1h-1zM55 1h1v1h-1zM41 103h1v1h-1zM127 106h1v1h-1zM25 95h1v1h-1zM44 108h1v1h-1zM57 47h1v1h-1zM117 98h1v1h-1zM59 93h1v1h-1zM97 119h1v1h-1zM17 96h1v1h-1zM50 44h1v1h-1zM36 109h1v1h-1zM110 58h1v1h-1zM8 47h1v1h-1zM85 1h1v1h-1zM52 53h1v1h-1zM71 103h1v1h-1zM43 4h1v1h-1zM103 55h1v1h-1zM115 109h1v1h-1zM106 60h1v1h-1zM73 112h1v1h-1zM45 50h1v1h-1zM77 2h1v1h-1zM108 106h1v1h-1zM126 123h1v1h-1zM98 61h1v1h-1zM82 53h1v1h-1zM73 4h1v1h-1zM119 120h1v1h-1zM31 7h1v1h-1zM36 122h1v1h-1zM107 2h1v1h-1zM24 4h1v1h-1zM1 20h1v1h-1zM128 61h1v1h-1zM54 112h1v1h-1zM12 115h1v1h-1zM86 64h1v1h-1zM45 63h1v1h-1zM3 66h1v1h-1zM80 20h1v1h-1zM107 123h1v1h-1zM79 61h1v1h-1zM65 126h1v1h-1zM101 79h1v1h-1zM21 56h1v1h-1zM95 5h1v1h-1zM40 69h1v1h-1zM54 4h1v1h-1zM72 21h1v1h-1zM75 63h1v1h-1zM42 115h1v1h-1zM33 66h1v1h-1zM107 15h1v1h-1zM65 18h1v1h-1zM51 83h1v1h-1zM95 126h1v1h-1zM26 26h1v1h-1zM86 77h1v1h-1zM89 82h1v1h-1zM42 7h1v1h-1zM28 72h1v1h-1zM102 21h1v1h-1zM47 85h1v1h-1zM19 23h1v1h-1zM60 24h1v1h-1zM46 126h1v1h-1zM5 88h1v1h-1zM104 67h1v1h-1zM21 69h1v1h-1zM81 83h1v1h-1zM34 8h1v1h-1zM37 13h1v1h-1zM46 18h1v1h-1zM35 88h1v1h-1zM125 18h1v1h-1zM111 83h1v1h-1zM5 101h1v1h-1zM44 29h1v1h-1zM104 80h1v1h-1zM2 32h1v1h-1zM117 19h1v1h-1zM62 83h1v1h-1zM34 21h1v1h-1zM20 86h1v1h-1zM53 34h1v1h-1zM39 99h1v1h-1zM37 26h1v1h-1zM56 39h1v1h-1zM129 29h1v1h-1zM118 99h1v1h-1zM16 88h1v1h-1zM6 43h1v1h-1zM9 85h1v1h-1zM50 86h1v1h-1zM27 102h1v1h-1zM44 42h1v1h-1zM2 45h1v1h-1zM120 37h1v1h-1zM20 99h1v1h-1zM4 91h1v1h-1zM78 40h1v1h-1zM36 43h1v1h-1zM96 94h1v1h-1zM99 99h1v1h-1zM118 112h1v1h-1zM38 89h1v1h-1zM112 38h1v1h-1zM29 40h1v1h-1zM115 43h1v1h-1zM48 53h1v1h-1zM105 35h1v1h-1zM22 0h1v1h-1zM27 115h1v1h-1zM66 43h1v1h-1zM11 107h1v1h-1zM85 56h1v1h-1zM24 46h1v1h-1zM43 59h1v1h-1zM101 0h1v1h-1zM87 102h1v1h-1zM106 115h1v1h-1zM4 104h1v1h-1zM45 105h1v1h-1zM119 54h1v1h-1zM36 56h1v1h-1zM38 102h1v1h-1zM98 116h1v1h-1zM54 46h1v1h-1zM18 123h1v1h-1zM91 113h1v1h-1zM94 118h1v1h-1zM66 56h1v1h-1zM107 57h1v1h-1zM11 120h1v1h-1zM126 70h1v1h-1zM24 59h1v1h-1zM98 8h1v1h-1zM10 124h1v1h-1zM87 115h1v1h-1zM1 75h1v1h-1zM119 67h1v1h-1zM17 56h1v1h-1zM3 121h1v1h-1zM77 70h1v1h-1zM80 75h1v1h-1zM121 113h1v1h-1zM93 14h1v1h-1zM10 16h1v1h-1zM51 17h1v1h-1zM82 121h1v1h-1zM54 59h1v1h-1zM12 62h1v1h-1zM70 3h1v1h-1zM130 54h1v1h-1zM89 16h1v1h-1zM88 57h1v1h-1zM33 121h1v1h-1zM107 70h1v1h-1zM47 19h1v1h-1zM5 22h1v1h-1zM63 0h1v1h-1zM123 14h1v1h-1zM109 116h1v1h-1zM21 3h1v1h-1zM40 16h1v1h-1zM58 70h1v1h-1zM70 124h1v1h-1zM116 11h1v1h-1zM61 75h1v1h-1zM32 17h1v1h-1zM63 121h1v1h-1zM51 30h1v1h-1zM21 124h1v1h-1zM95 73h1v1h-1zM114 86h1v1h-1zM12 75h1v1h-1zM70 16h1v1h-1zM14 84h1v1h-1zM5 35h1v1h-1zM46 73h1v1h-1zM49 78h1v1h-1zM21 16h1v1h-1zM7 81h1v1h-1zM102 89h1v1h-1zM0 78h1v1h-1zM60 92h1v1h-1zM76 36h1v1h-1zM95 86h1v1h-1zM34 76h1v1h-1zM111 30h1v1h-1zM56 94h1v1h-1zM9 19h1v1h-1zM69 33h1v1h-1zM129 84h1v1h-1zM104 27h1v1h-1zM7 94h1v1h-1zM48 95h1v1h-1zM106 36h1v1h-1zM39 46h1v1h-1zM125 86h1v1h-1zM124 90h1v1h-1zM127 95h1v1h-1zM60 105h1v1h-1zM118 46h1v1h-1zM76 49h1v1h-1zM37 94h1v1h-1zM78 95h1v1h-1zM36 98h1v1h-1zM69 46h1v1h-1zM27 49h1v1h-1zM84 31h1v1h-1zM122 57h1v1h-1zM4 38h1v1h-1zM45 39h1v1h-1zM105 90h1v1h-1zM96 41h1v1h-1zM22 55h1v1h-1zM66 98h1v1h-1zM99 46h1v1h-1zM85 111h1v1h-1zM38 36h1v1h-1zM117 100h1v1h-1zM15 52h1v1h-1zM120 105h1v1h-1zM59 95h1v1h-1zM18 57h1v1h-1zM17 98h1v1h-1zM55 124h1v1h-1zM94 52h1v1h-1zM126 4h1v1h-1zM115 111h1v1h-1zM87 49h1v1h-1zM128 50h1v1h-1zM45 52h1v1h-1zM64 65h1v1h-1zM77 4h1v1h-1zM126 125h1v1h-1zM38 49h1v1h-1zM79 50h1v1h-1zM98 63h1v1h-1zM82 55h1v1h-1zM73 6h1v1h-1zM114 7h1v1h-1zM119 122h1v1h-1zM31 9h1v1h-1zM17 111h1v1h-1zM58 112h1v1h-1zM77 125h1v1h-1zM52 68h1v1h-1zM115 124h1v1h-1zM26 15h1v1h-1zM86 66h1v1h-1zM58 4h1v1h-1zM3 68h1v1h-1zM61 9h1v1h-1zM121 60h1v1h-1zM47 74h1v1h-1zM107 125h1v1h-1zM80 22h1v1h-1zM82 68h1v1h-1zM21 58h1v1h-1zM100 122h1v1h-1zM12 9h1v1h-1zM53 10h1v1h-1zM72 23h1v1h-1zM58 125h1v1h-1zM116 66h1v1h-1zM10 84h1v1h-1zM51 85h1v1h-1zM109 63h1v1h-1zM130 122h1v1h-1zM42 9h1v1h-1zM83 10h1v1h-1zM19 25h1v1h-1zM60 26h1v1h-1zM63 68h1v1h-1zM104 69h1v1h-1zM21 71h1v1h-1zM53 23h1v1h-1zM39 88h1v1h-1zM32 85h1v1h-1zM49 25h1v1h-1zM92 72h1v1h-1zM9 74h1v1h-1zM69 88h1v1h-1zM25 18h1v1h-1zM34 23h1v1h-1zM78 29h1v1h-1zM14 44h1v1h-1zM55 45h1v1h-1zM113 23h1v1h-1zM13 85h1v1h-1zM71 26h1v1h-1zM16 90h1v1h-1zM90 39h1v1h-1zM105 24h1v1h-1zM127 42h1v1h-1zM11 96h1v1h-1zM44 44h1v1h-1zM103 99h1v1h-1zM59 29h1v1h-1zM97 55h1v1h-1zM17 32h1v1h-1zM96 96h1v1h-1zM99 101h1v1h-1zM71 39h1v1h-1zM112 40h1v1h-1zM105 37h1v1h-1zM50 101h1v1h-1zM110 115h1v1h-1zM22 2h1v1h-1zM127 55h1v1h-1zM94 107h1v1h-1zM66 45h1v1h-1zM126 59h1v1h-1zM84 99h1v1h-1zM103 112h1v1h-1zM101 2h1v1h-1zM1 64h1v1h-1zM87 104h1v1h-1zM106 117h1v1h-1zM100 43h1v1h-1zM45 107h1v1h-1zM64 120h1v1h-1zM36 58h1v1h-1zM77 59h1v1h-1zM52 2h1v1h-1zM38 104h1v1h-1zM112 53h1v1h-1zM10 5h1v1h-1zM115 58h1v1h-1zM15 120h1v1h-1zM73 61h1v1h-1zM75 107h1v1h-1zM107 59h1v1h-1zM65 62h1v1h-1zM82 2h1v1h-1zM101 15h1v1h-1zM45 120h1v1h-1zM58 59h1v1h-1zM3 123h1v1h-1zM77 72h1v1h-1zM121 115h1v1h-1zM19 67h1v1h-1zM93 16h1v1h-1zM54 61h1v1h-1zM67 0h1v1h-1zM31 77h1v1h-1zM75 120h1v1h-1zM116 121h1v1h-1zM33 123h1v1h-1zM107 72h1v1h-1zM46 62h1v1h-1zM40 18h1v1h-1zM67 121h1v1h-1zM70 126h1v1h-1zM42 64h1v1h-1zM74 16h1v1h-1zM19 80h1v1h-1zM93 29h1v1h-1zM35 24h1v1h-1zM95 75h1v1h-1zM34 65h1v1h-1zM53 78h1v1h-1zM72 91h1v1h-1zM111 19h1v1h-1zM28 21h1v1h-1zM88 72h1v1h-1zM83 78h1v1h-1zM13 19h1v1h-1zM99 22h1v1h-1zM44 86h1v1h-1zM118 35h1v1h-1zM32 32h1v1h-1zM117 76h1v1h-1zM55 100h1v1h-1zM113 78h1v1h-1zM90 94h1v1h-1zM48 97h1v1h-1zM122 46h1v1h-1zM23 40h1v1h-1zM96 30h1v1h-1zM127 97h1v1h-1zM44 99h1v1h-1zM85 100h1v1h-1zM38 25h1v1h-1zM76 51h1v1h-1zM15 41h1v1h-1zM59 84h1v1h-1zM92 32h1v1h-1zM36 100h1v1h-1zM55 113h1v1h-1zM8 38h1v1h-1zM94 41h1v1h-1zM27 51h1v1h-1zM29 97h1v1h-1zM4 40h1v1h-1zM45 41h1v1h-1zM105 92h1v1h-1zM124 105h1v1h-1zM22 57h1v1h-1zM121 36h1v1h-1zM66 100h1v1h-1zM24 103h1v1h-1zM98 52h1v1h-1zM57 51h1v1h-1zM18 59h1v1h-1zM78 110h1v1h-1zM110 62h1v1h-1zM84 46h1v1h-1zM10 60h1v1h-1zM87 51h1v1h-1zM128 52h1v1h-1zM86 55h1v1h-1zM105 105h1v1h-1zM119 3h1v1h-1zM3 57h1v1h-1zM77 6h1v1h-1zM121 49h1v1h-1zM66 113h1v1h-1zM107 114h1v1h-1zM19 1h1v1h-1zM79 52h1v1h-1zM24 116h1v1h-1zM98 65h1v1h-1zM63 44h1v1h-1zM73 8h1v1h-1zM114 9h1v1h-1zM17 113h1v1h-1zM58 114h1v1h-1zM75 54h1v1h-1zM107 6h1v1h-1zM19 122h1v1h-1zM93 71h1v1h-1zM10 73h1v1h-1zM54 116h1v1h-1zM128 65h1v1h-1zM67 55h1v1h-1zM12 119h1v1h-1zM70 60h1v1h-1zM88 114h1v1h-1zM47 76h1v1h-1zM0 1h1v1h-1zM79 65h1v1h-1zM5 79h1v1h-1zM46 117h1v1h-1zM82 70h1v1h-1zM49 122h1v1h-1zM40 73h1v1h-1zM114 22h1v1h-1zM12 11h1v1h-1zM72 25h1v1h-1zM56 17h1v1h-1zM46 9h1v1h-1zM32 74h1v1h-1zM49 14h1v1h-1zM109 65h1v1h-1zM70 73h1v1h-1zM9 63h1v1h-1zM83 12h1v1h-1zM28 76h1v1h-1zM47 89h1v1h-1zM60 28h1v1h-1zM44 20h1v1h-1zM21 73h1v1h-1zM62 74h1v1h-1zM95 22h1v1h-1zM81 87h1v1h-1zM34 12h1v1h-1zM37 17h1v1h-1zM14 33h1v1h-1zM129 20h1v1h-1zM13 74h1v1h-1zM118 90h1v1h-1zM51 100h1v1h-1zM16 79h1v1h-1zM35 92h1v1h-1zM92 74h1v1h-1zM6 34h1v1h-1zM9 76h1v1h-1zM69 90h1v1h-1zM41 28h1v1h-1zM27 93h1v1h-1zM104 84h1v1h-1zM117 23h1v1h-1zM62 87h1v1h-1zM81 100h1v1h-1zM122 101h1v1h-1zM34 25h1v1h-1zM39 103h1v1h-1zM78 31h1v1h-1zM97 44h1v1h-1zM96 85h1v1h-1zM55 47h1v1h-1zM13 87h1v1h-1zM118 103h1v1h-1zM6 47h1v1h-1zM105 26h1v1h-1zM69 103h1v1h-1zM8 93h1v1h-1zM127 44h1v1h-1zM11 98h1v1h-1zM117 36h1v1h-1zM84 88h1v1h-1zM103 101h1v1h-1zM122 114h1v1h-1zM87 93h1v1h-1zM20 103h1v1h-1zM1 53h1v1h-1zM78 44h1v1h-1zM23 108h1v1h-1zM36 47h1v1h-1zM99 103h1v1h-1zM112 42h1v1h-1zM76 119h1v1h-1zM115 47h1v1h-1zM15 109h1v1h-1zM18 114h1v1h-1zM85 60h1v1h-1zM106 119h1v1h-1zM59 44h1v1h-1zM100 45h1v1h-1zM58 48h1v1h-1zM3 112h1v1h-1zM77 61h1v1h-1zM94 1h1v1h-1zM80 66h1v1h-1zM93 5h1v1h-1zM38 106h1v1h-1zM10 7h1v1h-1zM115 60h1v1h-1zM82 112h1v1h-1zM101 125h1v1h-1zM54 50h1v1h-1zM73 63h1v1h-1zM86 2h1v1h-1zM89 7h1v1h-1zM88 48h1v1h-1zM107 61h1v1h-1zM126 74h1v1h-1zM123 5h1v1h-1zM128 120h1v1h-1zM26 72h1v1h-1zM42 53h1v1h-1zM0 56h1v1h-1zM33 4h1v1h-1zM93 18h1v1h-1zM51 21h1v1h-1zM54 63h1v1h-1zM21 115h1v1h-1zM116 123h1v1h-1zM28 10h1v1h-1zM47 23h1v1h-1zM74 126h1v1h-1zM46 64h1v1h-1zM109 120h1v1h-1zM68 82h1v1h-1zM7 72h1v1h-1zM81 21h1v1h-1zM26 85h1v1h-1zM125 64h1v1h-1zM39 24h1v1h-1zM102 80h1v1h-1zM74 18h1v1h-1zM19 82h1v1h-1zM60 83h1v1h-1zM53 80h1v1h-1zM72 93h1v1h-1zM92 8h1v1h-1zM111 21h1v1h-1zM56 85h1v1h-1zM14 88h1v1h-1zM113 67h1v1h-1zM5 39h1v1h-1zM122 35h1v1h-1zM39 37h1v1h-1zM102 93h1v1h-1zM25 75h1v1h-1zM16 26h1v1h-1zM2 91h1v1h-1zM37 85h1v1h-1zM111 34h1v1h-1zM8 27h1v1h-1zM27 40h1v1h-1zM84 22h1v1h-1zM29 86h1v1h-1zM48 99h1v1h-1zM122 48h1v1h-1zM20 37h1v1h-1zM106 40h1v1h-1zM6 102h1v1h-1zM105 81h1v1h-1zM64 43h1v1h-1zM25 88h1v1h-1zM44 101h1v1h-1zM57 40h1v1h-1zM76 53h1v1h-1zM15 43h1v1h-1zM78 99h1v1h-1zM17 89h1v1h-1zM91 38h1v1h-1zM50 37h1v1h-1zM110 51h1v1h-1zM94 43h1v1h-1zM71 96h1v1h-1zM112 97h1v1h-1zM29 99h1v1h-1zM106 53h1v1h-1zM6 115h1v1h-1zM73 105h1v1h-1zM124 107h1v1h-1zM108 99h1v1h-1zM127 112h1v1h-1zM126 116h1v1h-1zM79 41h1v1h-1zM24 105h1v1h-1zM1 121h1v1h-1zM119 113h1v1h-1zM17 102h1v1h-1zM91 51h1v1h-1zM36 115h1v1h-1zM77 116h1v1h-1zM75 43h1v1h-1zM33 46h1v1h-1zM52 59h1v1h-1zM115 115h1v1h-1zM12 108h1v1h-1zM86 57h1v1h-1zM45 56h1v1h-1zM130 100h1v1h-1zM22 72h1v1h-1zM89 62h1v1h-1zM80 13h1v1h-1zM66 115h1v1h-1zM98 67h1v1h-1zM65 119h1v1h-1zM63 46h1v1h-1zM82 59h1v1h-1zM101 72h1v1h-1zM114 11h1v1h-1zM12 0h1v1h-1zM31 13h1v1h-1zM75 56h1v1h-1zM42 108h1v1h-1zM116 57h1v1h-1zM33 59h1v1h-1zM93 73h1v1h-1zM65 11h1v1h-1zM49 3h1v1h-1zM68 16h1v1h-1zM54 118h1v1h-1zM109 54h1v1h-1zM26 19h1v1h-1zM67 57h1v1h-1zM58 8h1v1h-1zM88 116h1v1h-1zM0 3h1v1h-1zM19 16h1v1h-1zM5 81h1v1h-1zM46 119h1v1h-1zM114 24h1v1h-1zM81 76h1v1h-1zM0 124h1v1h-1zM74 73h1v1h-1zM46 11h1v1h-1zM7 19h1v1h-1zM26 32h1v1h-1zM9 65h1v1h-1zM47 91h1v1h-1zM0 16h1v1h-1zM60 30h1v1h-1zM5 94h1v1h-1zM44 22h1v1h-1zM104 73h1v1h-1zM62 76h1v1h-1zM81 89h1v1h-1zM120 17h1v1h-1zM20 79h1v1h-1zM39 92h1v1h-1zM14 35h1v1h-1zM118 92h1v1h-1zM16 81h1v1h-1zM35 94h1v1h-1zM92 76h1v1h-1zM83 27h1v1h-1zM124 28h1v1h-1zM41 30h1v1h-1zM25 22h1v1h-1zM30 100h1v1h-1zM103 90h1v1h-1zM120 30h1v1h-1zM20 92h1v1h-1zM36 36h1v1h-1zM96 87h1v1h-1zM118 105h1v1h-1zM16 94h1v1h-1zM112 31h1v1h-1zM76 108h1v1h-1zM29 33h1v1h-1zM115 36h1v1h-1zM48 46h1v1h-1zM105 28h1v1h-1zM50 92h1v1h-1zM69 105h1v1h-1zM110 106h1v1h-1zM108 33h1v1h-1zM127 46h1v1h-1zM25 35h1v1h-1zM103 103h1v1h-1zM122 116h1v1h-1zM87 95h1v1h-1zM1 55h1v1h-1zM106 108h1v1h-1zM17 36h1v1h-1zM112 44h1v1h-1zM57 108h1v1h-1zM101 114h1v1h-1zM18 116h1v1h-1zM105 41h1v1h-1zM108 46h1v1h-1zM8 108h1v1h-1zM94 111h1v1h-1zM11 113h1v1h-1zM107 50h1v1h-1zM84 103h1v1h-1zM45 111h1v1h-1zM119 60h1v1h-1zM64 124h1v1h-1zM17 49h1v1h-1zM3 114h1v1h-1zM61 55h1v1h-1zM38 108h1v1h-1zM93 7h1v1h-1zM54 52h1v1h-1zM12 55h1v1h-1zM72 69h1v1h-1zM130 47h1v1h-1zM89 9h1v1h-1zM88 50h1v1h-1zM107 63h1v1h-1zM46 53h1v1h-1zM5 15h1v1h-1zM49 58h1v1h-1zM123 7h1v1h-1zM109 109h1v1h-1zM100 60h1v1h-1zM86 125h1v1h-1zM70 117h1v1h-1zM42 55h1v1h-1zM61 68h1v1h-1zM74 7h1v1h-1zM93 20h1v1h-1zM79 122h1v1h-1zM63 114h1v1h-1zM35 15h1v1h-1zM95 66h1v1h-1zM114 79h1v1h-1zM53 69h1v1h-1zM70 9h1v1h-1zM56 74h1v1h-1zM129 64h1v1h-1zM123 20h1v1h-1zM109 122h1v1h-1zM68 84h1v1h-1zM21 9h1v1h-1zM62 10h1v1h-1zM81 23h1v1h-1zM26 87h1v1h-1zM125 66h1v1h-1zM39 26h1v1h-1zM42 68h1v1h-1zM0 71h1v1h-1zM44 77h1v1h-1zM118 26h1v1h-1zM95 79h1v1h-1zM53 82h1v1h-1zM97 88h1v1h-1zM50 13h1v1h-1zM69 26h1v1h-1zM14 90h1v1h-1zM129 77h1v1h-1zM27 29h1v1h-1zM71 72h1v1h-1zM90 85h1v1h-1zM122 37h1v1h-1zM83 82h1v1h-1zM124 83h1v1h-1zM96 21h1v1h-1zM127 88h1v1h-1zM60 98h1v1h-1zM44 90h1v1h-1zM57 29h1v1h-1zM117 80h1v1h-1zM78 88h1v1h-1zM50 26h1v1h-1zM36 91h1v1h-1zM110 40h1v1h-1zM8 29h1v1h-1zM113 82h1v1h-1zM11 34h1v1h-1zM90 98h1v1h-1zM29 88h1v1h-1zM87 29h1v1h-1zM6 104h1v1h-1zM23 44h1v1h-1zM22 48h1v1h-1zM25 90h1v1h-1zM66 91h1v1h-1zM85 104h1v1h-1zM57 42h1v1h-1zM76 55h1v1h-1zM15 45h1v1h-1zM120 98h1v1h-1zM18 50h1v1h-1zM119 102h1v1h-1zM110 53h1v1h-1zM11 47h1v1h-1zM52 48h1v1h-1zM87 42h1v1h-1zM1 2h1v1h-1zM64 58h1v1h-1zM108 101h1v1h-1zM66 104h1v1h-1zM85 117h1v1h-1zM79 43h1v1h-1zM98 56h1v1h-1zM43 120h1v1h-1zM15 58h1v1h-1zM1 123h1v1h-1zM119 115h1v1h-1zM17 104h1v1h-1zM91 53h1v1h-1zM52 61h1v1h-1zM115 117h1v1h-1zM121 53h1v1h-1zM79 56h1v1h-1zM65 121h1v1h-1zM68 126h1v1h-1zM21 51h1v1h-1zM40 64h1v1h-1zM72 16h1v1h-1zM56 8h1v1h-1zM116 59h1v1h-1zM107 10h1v1h-1zM49 5h1v1h-1zM26 21h1v1h-1zM12 123h1v1h-1zM86 72h1v1h-1zM70 64h1v1h-1zM130 115h1v1h-1zM89 77h1v1h-1zM42 2h1v1h-1zM28 67h1v1h-1zM102 16h1v1h-1zM88 118h1v1h-1zM0 5h1v1h-1zM60 19h1v1h-1zM46 121h1v1h-1zM104 62h1v1h-1zM49 126h1v1h-1zM123 75h1v1h-1zM21 64h1v1h-1zM95 13h1v1h-1zM40 77h1v1h-1zM81 78h1v1h-1zM39 81h1v1h-1zM14 24h1v1h-1zM0 126h1v1h-1zM113 3h1v1h-1zM46 13h1v1h-1zM102 29h1v1h-1zM60 32h1v1h-1zM25 11h1v1h-1zM44 24h1v1h-1zM104 75h1v1h-1zM123 88h1v1h-1zM117 14h1v1h-1zM62 78h1v1h-1zM20 81h1v1h-1zM37 21h1v1h-1zM97 35h1v1h-1zM14 37h1v1h-1zM129 24h1v1h-1zM71 19h1v1h-1zM16 83h1v1h-1zM76 97h1v1h-1zM27 97h1v1h-1zM30 102h1v1h-1zM117 27h1v1h-1zM43 41h1v1h-1zM120 32h1v1h-1zM106 97h1v1h-1zM23 99h1v1h-1zM64 100h1v1h-1zM17 25h1v1h-1zM36 38h1v1h-1zM96 89h1v1h-1zM55 51h1v1h-1zM38 84h1v1h-1zM112 33h1v1h-1zM76 110h1v1h-1zM29 35h1v1h-1zM115 38h1v1h-1zM73 41h1v1h-1zM18 105h1v1h-1zM91 95h1v1h-1zM110 108h1v1h-1zM8 97h1v1h-1zM11 102h1v1h-1zM30 115h1v1h-1zM43 54h1v1h-1zM106 110h1v1h-1zM4 99h1v1h-1zM45 100h1v1h-1zM119 49h1v1h-1zM17 38h1v1h-1zM36 51h1v1h-1zM77 52h1v1h-1zM3 103h1v1h-1zM121 95h1v1h-1zM80 57h1v1h-1zM38 97h1v1h-1zM112 46h1v1h-1zM57 110h1v1h-1zM115 51h1v1h-1zM54 41h1v1h-1zM18 118h1v1h-1zM91 108h1v1h-1zM110 121h1v1h-1zM130 36h1v1h-1zM94 113h1v1h-1zM52 116h1v1h-1zM126 65h1v1h-1zM24 54h1v1h-1zM68 60h1v1h-1zM100 49h1v1h-1zM45 113h1v1h-1zM119 62h1v1h-1zM58 52h1v1h-1zM3 116h1v1h-1zM77 65h1v1h-1zM61 57h1v1h-1zM80 70h1v1h-1zM79 111h1v1h-1zM98 124h1v1h-1zM10 11h1v1h-1zM51 12h1v1h-1zM54 54h1v1h-1zM114 68h1v1h-1zM130 49h1v1h-1zM116 114h1v1h-1zM28 1h1v1h-1zM88 52h1v1h-1zM33 116h1v1h-1zM5 17h1v1h-1zM46 55h1v1h-1zM65 68h1v1h-1zM128 124h1v1h-1zM7 63h1v1h-1zM81 12h1v1h-1zM70 119h1v1h-1zM102 71h1v1h-1zM0 60h1v1h-1zM74 9h1v1h-1zM21 119h1v1h-1zM67 6h1v1h-1zM72 84h1v1h-1zM37 63h1v1h-1zM56 76h1v1h-1zM9 1h1v1h-1zM28 14h1v1h-1zM14 79h1v1h-1zM129 66h1v1h-1zM104 9h1v1h-1zM123 22h1v1h-1zM109 124h1v1h-1zM81 25h1v1h-1zM39 28h1v1h-1zM125 68h1v1h-1zM9 122h1v1h-1zM83 71h1v1h-1zM96 10h1v1h-1zM60 87h1v1h-1zM13 12h1v1h-1zM44 79h1v1h-1zM76 31h1v1h-1zM120 74h1v1h-1zM53 84h1v1h-1zM92 12h1v1h-1zM37 76h1v1h-1zM111 25h1v1h-1zM97 90h1v1h-1zM9 14h1v1h-1zM50 15h1v1h-1zM129 79h1v1h-1zM90 87h1v1h-1zM29 77h1v1h-1zM103 26h1v1h-1zM48 90h1v1h-1zM20 28h1v1h-1zM39 41h1v1h-1zM6 93h1v1h-1zM4 20h1v1h-1zM83 84h1v1h-1zM124 85h1v1h-1zM96 23h1v1h-1zM41 87h1v1h-1zM25 79h1v1h-1zM85 93h1v1h-1zM16 30h1v1h-1zM59 77h1v1h-1zM69 41h1v1h-1zM36 93h1v1h-1zM112 88h1v1h-1zM115 93h1v1h-1zM48 103h1v1h-1zM122 52h1v1h-1zM103 39h1v1h-1zM106 44h1v1h-1zM4 33h1v1h-1zM22 50h1v1h-1zM57 44h1v1h-1zM43 109h1v1h-1zM15 47h1v1h-1zM101 50h1v1h-1zM1 112h1v1h-1zM78 103h1v1h-1zM8 44h1v1h-1zM94 47h1v1h-1zM11 49h1v1h-1zM112 101h1v1h-1zM84 39h1v1h-1zM10 53h1v1h-1zM115 106h1v1h-1zM128 45h1v1h-1zM64 60h1v1h-1zM31 112h1v1h-1zM3 50h1v1h-1zM108 103h1v1h-1zM121 42h1v1h-1zM126 120h1v1h-1zM79 45h1v1h-1zM98 58h1v1h-1zM101 63h1v1h-1zM1 125h1v1h-1zM114 2h1v1h-1zM100 104h1v1h-1zM31 4h1v1h-1zM72 5h1v1h-1zM17 106h1v1h-1zM58 107h1v1h-1zM77 120h1v1h-1zM61 112h1v1h-1zM126 12h1v1h-1zM10 66h1v1h-1zM54 109h1v1h-1zM114 123h1v1h-1zM12 112h1v1h-1zM31 125h1v1h-1zM61 4h1v1h-1zM102 5h1v1h-1zM47 69h1v1h-1zM107 120h1v1h-1zM19 7h1v1h-1zM5 72h1v1h-1zM65 123h1v1h-1zM82 63h1v1h-1zM12 4h1v1h-1zM53 5h1v1h-1zM14 13h1v1h-1zM33 63h1v1h-1zM65 15h1v1h-1zM51 80h1v1h-1zM109 58h1v1h-1zM35 72h1v1h-1zM68 20h1v1h-1zM7 10h1v1h-1zM26 23h1v1h-1zM12 125h1v1h-1zM70 66h1v1h-1zM9 56h1v1h-1zM28 69h1v1h-1zM60 21h1v1h-1zM104 64h1v1h-1zM95 15h1v1h-1zM81 80h1v1h-1zM53 18h1v1h-1zM125 123h1v1h-1zM97 24h1v1h-1zM42 125h1v1h-1zM14 26h1v1h-1zM129 13h1v1h-1zM71 8h1v1h-1zM16 72h1v1h-1zM90 21h1v1h-1zM7 23h1v1h-1zM125 15h1v1h-1zM111 80h1v1h-1zM83 18h1v1h-1zM124 19h1v1h-1zM69 83h1v1h-1zM41 21h1v1h-1zM127 24h1v1h-1zM25 13h1v1h-1zM104 77h1v1h-1zM117 16h1v1h-1zM62 80h1v1h-1zM81 93h1v1h-1zM122 94h1v1h-1zM120 21h1v1h-1zM39 96h1v1h-1zM37 23h1v1h-1zM78 24h1v1h-1zM97 37h1v1h-1zM16 85h1v1h-1zM76 99h1v1h-1zM124 32h1v1h-1zM69 96h1v1h-1zM110 97h1v1h-1zM66 27h1v1h-1zM11 91h1v1h-1zM85 40h1v1h-1zM30 104h1v1h-1zM2 42h1v1h-1zM103 94h1v1h-1zM120 34h1v1h-1zM20 96h1v1h-1zM106 99h1v1h-1zM119 38h1v1h-1zM64 102h1v1h-1zM36 40h1v1h-1zM38 86h1v1h-1zM57 99h1v1h-1zM29 37h1v1h-1zM115 40h1v1h-1zM15 102h1v1h-1zM8 99h1v1h-1zM52 105h1v1h-1zM43 56h1v1h-1zM1 59h1v1h-1zM59 37h1v1h-1zM45 102h1v1h-1zM119 51h1v1h-1zM3 105h1v1h-1zM77 54h1v1h-1zM22 118h1v1h-1zM10 0h1v1h-1zM101 118h1v1h-1zM12 46h1v1h-1zM130 38h1v1h-1zM75 102h1v1h-1zM94 115h1v1h-1zM88 41h1v1h-1zM52 118h1v1h-1zM68 62h1v1h-1zM109 100h1v1h-1zM3 118h1v1h-1zM89 121h1v1h-1zM77 67h1v1h-1zM42 46h1v1h-1zM61 59h1v1h-1zM80 72h1v1h-1zM47 124h1v1h-1zM19 62h1v1h-1zM10 13h1v1h-1zM54 56h1v1h-1zM95 57h1v1h-1zM40 121h1v1h-1zM53 60h1v1h-1zM88 54h1v1h-1zM33 118h1v1h-1zM47 16h1v1h-1zM5 19h1v1h-1zM65 70h1v1h-1zM123 11h1v1h-1zM68 75h1v1h-1zM40 13h1v1h-1zM125 57h1v1h-1zM39 17h1v1h-1zM32 14h1v1h-1zM63 118h1v1h-1zM51 27h1v1h-1zM104 119h1v1h-1zM35 19h1v1h-1zM21 121h1v1h-1zM95 70h1v1h-1zM34 60h1v1h-1zM111 14h1v1h-1zM56 78h1v1h-1zM14 81h1v1h-1zM104 11h1v1h-1zM62 14h1v1h-1zM122 28h1v1h-1zM125 70h1v1h-1zM23 22h1v1h-1zM102 86h1v1h-1zM118 30h1v1h-1zM16 19h1v1h-1zM35 32h1v1h-1zM34 73h1v1h-1zM120 76h1v1h-1zM92 14h1v1h-1zM37 78h1v1h-1zM111 27h1v1h-1zM78 79h1v1h-1zM97 92h1v1h-1zM50 17h1v1h-1zM129 81h1v1h-1zM55 95h1v1h-1zM8 20h1v1h-1zM11 25h1v1h-1zM106 33h1v1h-1zM4 22h1v1h-1zM23 35h1v1h-1zM105 74h1v1h-1zM64 36h1v1h-1zM124 87h1v1h-1zM127 92h1v1h-1zM118 43h1v1h-1zM117 84h1v1h-1zM120 89h1v1h-1zM59 79h1v1h-1zM78 92h1v1h-1zM50 30h1v1h-1zM55 108h1v1h-1zM27 46h1v1h-1zM30 51h1v1h-1zM112 90h1v1h-1zM6 108h1v1h-1zM4 35h1v1h-1zM108 92h1v1h-1zM66 95h1v1h-1zM85 108h1v1h-1zM57 46h1v1h-1zM98 47h1v1h-1zM101 52h1v1h-1zM1 114h1v1h-1zM18 54h1v1h-1zM119 106h1v1h-1zM91 44h1v1h-1zM36 108h1v1h-1zM77 109h1v1h-1zM80 114h1v1h-1zM112 103h1v1h-1zM10 55h1v1h-1zM115 108h1v1h-1zM86 50h1v1h-1zM31 114h1v1h-1zM77 1h1v1h-1zM24 111h1v1h-1zM98 60h1v1h-1zM82 52h1v1h-1zM114 4h1v1h-1zM72 7h1v1h-1zM75 49h1v1h-1zM33 52h1v1h-1zM52 65h1v1h-1zM51 69h1v1h-1zM128 60h1v1h-1zM26 12h1v1h-1zM12 114h1v1h-1zM86 63h1v1h-1zM70 55h1v1h-1zM89 68h1v1h-1zM61 6h1v1h-1zM102 7h1v1h-1zM107 122h1v1h-1zM60 10h1v1h-1zM5 74h1v1h-1zM65 125h1v1h-1zM123 66h1v1h-1zM95 4h1v1h-1zM40 68h1v1h-1zM81 69h1v1h-1zM42 114h1v1h-1zM116 63h1v1h-1zM14 15h1v1h-1zM0 117h1v1h-1zM88 1h1v1h-1zM46 4h1v1h-1zM32 69h1v1h-1zM51 82h1v1h-1zM35 74h1v1h-1zM7 12h1v1h-1zM67 63h1v1h-1zM70 68h1v1h-1zM83 7h1v1h-1zM47 84h1v1h-1zM129 123h1v1h-1zM60 23h1v1h-1zM104 66h1v1h-1zM81 82h1v1h-1zM120 10h1v1h-1zM53 20h1v1h-1zM32 82h1v1h-1zM118 85h1v1h-1zM16 74h1v1h-1zM48 26h1v1h-1zM9 71h1v1h-1zM50 72h1v1h-1zM69 85h1v1h-1zM27 88h1v1h-1zM25 15h1v1h-1zM30 93h1v1h-1zM62 82h1v1h-1zM122 96h1v1h-1zM120 23h1v1h-1zM78 26h1v1h-1zM55 42h1v1h-1zM118 98h1v1h-1zM71 23h1v1h-1zM115 29h1v1h-1zM124 34h1v1h-1zM127 39h1v1h-1zM27 101h1v1h-1zM24 32h1v1h-1zM84 83h1v1h-1zM103 96h1v1h-1zM1 48h1v1h-1zM106 101h1v1h-1zM4 90h1v1h-1zM78 39h1v1h-1zM119 40h1v1h-1zM64 104h1v1h-1zM77 43h1v1h-1zM112 37h1v1h-1zM115 42h1v1h-1zM15 104h1v1h-1zM101 107h1v1h-1zM73 45h1v1h-1zM18 109h1v1h-1zM91 99h1v1h-1zM110 112h1v1h-1zM75 91h1v1h-1zM8 101h1v1h-1zM11 106h1v1h-1zM1 61h1v1h-1zM128 102h1v1h-1zM45 104h1v1h-1zM119 53h1v1h-1zM64 117h1v1h-1zM17 42h1v1h-1zM58 43h1v1h-1zM3 107h1v1h-1zM22 120h1v1h-1zM121 99h1v1h-1zM93 0h1v1h-1zM40 110h1v1h-1zM47 5h1v1h-1zM33 107h1v1h-1zM107 56h1v1h-1zM93 121h1v1h-1zM5 8h1v1h-1zM46 46h1v1h-1zM65 59h1v1h-1zM10 123h1v1h-1zM49 51h1v1h-1zM68 64h1v1h-1zM128 115h1v1h-1zM100 53h1v1h-1zM26 67h1v1h-1zM3 120h1v1h-1zM42 48h1v1h-1zM121 112h1v1h-1zM19 64h1v1h-1zM79 115h1v1h-1zM95 59h1v1h-1zM40 123h1v1h-1zM12 61h1v1h-1zM70 2h1v1h-1zM56 67h1v1h-1zM47 18h1v1h-1zM129 57h1v1h-1zM88 56h1v1h-1zM5 21h1v1h-1zM123 13h1v1h-1zM7 67h1v1h-1zM81 16h1v1h-1zM39 19h1v1h-1zM9 113h1v1h-1zM28 126h1v1h-1zM102 75h1v1h-1zM74 13h1v1h-1zM60 78h1v1h-1zM63 120h1v1h-1zM104 121h1v1h-1zM51 29h1v1h-1zM16 8h1v1h-1zM62 124h1v1h-1zM56 80h1v1h-1zM9 5h1v1h-1zM69 19h1v1h-1zM90 78h1v1h-1zM7 80h1v1h-1zM81 29h1v1h-1zM39 32h1v1h-1zM125 72h1v1h-1zM9 126h1v1h-1zM83 75h1v1h-1zM60 91h1v1h-1zM13 16h1v1h-1zM44 83h1v1h-1zM117 73h1v1h-1zM76 35h1v1h-1zM120 78h1v1h-1zM50 19h1v1h-1zM14 96h1v1h-1zM55 97h1v1h-1zM27 35h1v1h-1zM103 30h1v1h-1zM48 94h1v1h-1zM122 43h1v1h-1zM6 97h1v1h-1zM4 24h1v1h-1zM23 37h1v1h-1zM64 38h1v1h-1zM124 89h1v1h-1zM108 81h1v1h-1zM127 94h1v1h-1zM85 97h1v1h-1zM50 32h1v1h-1zM110 46h1v1h-1zM55 110h1v1h-1zM8 35h1v1h-1zM94 38h1v1h-1zM52 41h1v1h-1zM84 30h1v1h-1zM106 48h1v1h-1zM73 100h1v1h-1zM105 89h1v1h-1zM64 51h1v1h-1zM3 41h1v1h-1zM108 94h1v1h-1zM121 33h1v1h-1zM66 97h1v1h-1zM85 110h1v1h-1zM126 111h1v1h-1zM79 36h1v1h-1zM24 100h1v1h-1zM82 41h1v1h-1zM1 116h1v1h-1zM100 95h1v1h-1zM119 108h1v1h-1zM77 111h1v1h-1zM80 116h1v1h-1zM33 41h1v1h-1zM126 3h1v1h-1zM112 105h1v1h-1zM10 57h1v1h-1zM109 36h1v1h-1zM54 100h1v1h-1zM128 49h1v1h-1zM45 51h1v1h-1zM86 52h1v1h-1zM12 103h1v1h-1zM3 54h1v1h-1zM77 3h1v1h-1zM121 46h1v1h-1zM47 60h1v1h-1zM107 111h1v1h-1zM80 8h1v1h-1zM79 49h1v1h-1zM65 114h1v1h-1zM63 41h1v1h-1zM101 67h1v1h-1zM100 108h1v1h-1zM77 124h1v1h-1zM61 116h1v1h-1zM33 54h1v1h-1zM107 3h1v1h-1zM65 6h1v1h-1zM10 70h1v1h-1zM51 71h1v1h-1zM109 49h1v1h-1zM54 113h1v1h-1zM128 62h1v1h-1zM7 1h1v1h-1zM26 14h1v1h-1zM89 70h1v1h-1zM60 12h1v1h-1zM46 114h1v1h-1zM5 76h1v1h-1zM49 119h1v1h-1zM95 6h1v1h-1zM40 70h1v1h-1zM7 122h1v1h-1zM72 22h1v1h-1zM58 124h1v1h-1zM116 65h1v1h-1zM0 119h1v1h-1zM129 4h1v1h-1zM13 58h1v1h-1zM51 84h1v1h-1zM49 11h1v1h-1zM7 14h1v1h-1zM48 15h1v1h-1zM67 65h1v1h-1zM37 122h1v1h-1zM111 71h1v1h-1zM129 125h1v1h-1zM25 4h1v1h-1zM104 68h1v1h-1zM2 20h1v1h-1zM117 7h1v1h-1zM81 84h1v1h-1zM39 87h1v1h-1zM37 14h1v1h-1zM78 15h1v1h-1zM23 79h1v1h-1zM113 9h1v1h-1zM99 74h1v1h-1zM118 87h1v1h-1zM16 76h1v1h-1zM76 90h1v1h-1zM48 28h1v1h-1zM6 31h1v1h-1zM105 10h1v1h-1zM69 87h1v1h-1zM41 25h1v1h-1zM127 28h1v1h-1zM8 77h1v1h-1zM27 90h1v1h-1zM25 17h1v1h-1zM11 82h1v1h-1zM85 31h1v1h-1zM103 85h1v1h-1zM122 98h1v1h-1zM106 90h1v1h-1zM4 79h1v1h-1zM78 28h1v1h-1zM99 87h1v1h-1zM118 100h1v1h-1zM124 36h1v1h-1zM8 90h1v1h-1zM94 93h1v1h-1zM11 95h1v1h-1zM30 108h1v1h-1zM24 34h1v1h-1zM1 50h1v1h-1zM3 96h1v1h-1zM121 88h1v1h-1zM112 39h1v1h-1zM57 103h1v1h-1zM98 104h1v1h-1zM115 44h1v1h-1zM15 106h1v1h-1zM101 109h1v1h-1zM18 111h1v1h-1zM31 50h1v1h-1zM110 114h1v1h-1zM22 1h1v1h-1zM75 93h1v1h-1zM94 106h1v1h-1zM66 44h1v1h-1zM10 112h1v1h-1zM128 104h1v1h-1zM119 55h1v1h-1zM3 109h1v1h-1zM89 112h1v1h-1zM22 122h1v1h-1zM121 101h1v1h-1zM79 104h1v1h-1zM31 63h1v1h-1zM47 7h1v1h-1zM33 109h1v1h-1zM107 58h1v1h-1zM93 123h1v1h-1zM65 61h1v1h-1zM82 1h1v1h-1zM109 104h1v1h-1zM68 66h1v1h-1zM81 5h1v1h-1zM86 120h1v1h-1zM70 112h1v1h-1zM58 58h1v1h-1zM89 125h1v1h-1zM123 123h1v1h-1zM95 61h1v1h-1zM114 74h1v1h-1zM81 126h1v1h-1zM53 64h1v1h-1zM72 77h1v1h-1zM116 120h1v1h-1zM28 7h1v1h-1zM14 72h1v1h-1zM47 20h1v1h-1zM74 123h1v1h-1zM88 58h1v1h-1zM5 23h1v1h-1zM32 126h1v1h-1zM123 15h1v1h-1zM21 4h1v1h-1zM67 120h1v1h-1zM20 8h1v1h-1zM70 125h1v1h-1zM9 115h1v1h-1zM83 64h1v1h-1zM0 66h1v1h-1zM41 67h1v1h-1zM74 15h1v1h-1zM118 21h1v1h-1zM16 10h1v1h-1zM117 62h1v1h-1zM62 126h1v1h-1zM50 8h1v1h-1zM129 72h1v1h-1zM13 126h1v1h-1zM30 29h1v1h-1zM90 80h1v1h-1zM62 18h1v1h-1zM7 82h1v1h-1zM48 83h1v1h-1zM106 24h1v1h-1zM39 34h1v1h-1zM6 86h1v1h-1zM4 13h1v1h-1zM96 16h1v1h-1zM127 83h1v1h-1zM25 72h1v1h-1zM13 18h1v1h-1zM44 85h1v1h-1zM57 24h1v1h-1zM2 88h1v1h-1zM76 37h1v1h-1zM117 75h1v1h-1zM92 18h1v1h-1zM50 21h1v1h-1zM36 86h1v1h-1zM55 99h1v1h-1zM27 37h1v1h-1zM113 77h1v1h-1zM11 29h1v1h-1zM71 80h1v1h-1zM30 42h1v1h-1zM84 19h1v1h-1zM87 24h1v1h-1zM6 99h1v1h-1zM45 27h1v1h-1zM108 83h1v1h-1zM25 85h1v1h-1zM99 34h1v1h-1zM38 24h1v1h-1zM43 102h1v1h-1zM1 105h1v1h-1zM18 45h1v1h-1zM91 35h1v1h-1zM75 27h1v1h-1zM8 37h1v1h-1zM11 42h1v1h-1zM52 43h1v1h-1zM112 94h1v1h-1zM84 32h1v1h-1zM115 99h1v1h-1zM87 37h1v1h-1zM73 102h1v1h-1zM45 40h1v1h-1zM31 105h1v1h-1zM64 53h1v1h-1zM22 56h1v1h-1zM126 113h1v1h-1zM101 56h1v1h-1zM1 118h1v1h-1zM100 97h1v1h-1zM17 99h1v1h-1zM91 48h1v1h-1zM75 40h1v1h-1zM94 53h1v1h-1zM80 118h1v1h-1zM33 43h1v1h-1zM126 5h1v1h-1zM10 59h1v1h-1zM128 51h1v1h-1zM73 115h1v1h-1zM70 46h1v1h-1zM130 97h1v1h-1zM121 48h1v1h-1zM88 100h1v1h-1zM107 113h1v1h-1zM47 62h1v1h-1zM19 0h1v1h-1zM79 51h1v1h-1zM68 121h1v1h-1zM114 8h1v1h-1zM42 105h1v1h-1zM116 54h1v1h-1zM61 118h1v1h-1zM0 108h1v1h-1zM19 121h1v1h-1zM32 60h1v1h-1zM51 73h1v1h-1zM109 51h1v1h-1zM7 3h1v1h-1zM26 16h1v1h-1zM70 59h1v1h-1zM56 124h1v1h-1zM130 110h1v1h-1zM9 49h1v1h-1zM102 11h1v1h-1zM47 75h1v1h-1zM107 126h1v1h-1zM60 14h1v1h-1zM49 121h1v1h-1zM123 70h1v1h-1zM62 60h1v1h-1zM7 124h1v1h-1zM42 118h1v1h-1zM0 121h1v1h-1zM74 70h1v1h-1zM13 60h1v1h-1zM51 86h1v1h-1zM7 16h1v1h-1zM48 17h1v1h-1zM125 8h1v1h-1zM124 12h1v1h-1zM60 27h1v1h-1zM113 119h1v1h-1zM25 6h1v1h-1zM44 19h1v1h-1zM30 84h1v1h-1zM117 9h1v1h-1zM120 14h1v1h-1zM20 76h1v1h-1zM78 17h1v1h-1zM97 30h1v1h-1zM55 33h1v1h-1zM113 11h1v1h-1zM16 78h1v1h-1zM57 79h1v1h-1zM90 27h1v1h-1zM76 92h1v1h-1zM29 17h1v1h-1zM48 30h1v1h-1zM111 86h1v1h-1zM50 76h1v1h-1zM124 25h1v1h-1zM69 89h1v1h-1zM110 90h1v1h-1zM27 92h1v1h-1zM84 74h1v1h-1zM87 79h1v1h-1zM106 92h1v1h-1zM59 17h1v1h-1zM4 81h1v1h-1zM78 30h1v1h-1zM119 31h1v1h-1zM23 94h1v1h-1zM17 20h1v1h-1zM55 46h1v1h-1zM99 89h1v1h-1zM76 105h1v1h-1zM29 30h1v1h-1zM115 33h1v1h-1zM15 95h1v1h-1zM105 25h1v1h-1zM50 89h1v1h-1zM110 103h1v1h-1zM8 92h1v1h-1zM94 95h1v1h-1zM11 97h1v1h-1zM52 98h1v1h-1zM126 47h1v1h-1zM84 87h1v1h-1zM59 30h1v1h-1zM17 33h1v1h-1zM22 111h1v1h-1zM82 98h1v1h-1zM15 108h1v1h-1zM18 113h1v1h-1zM94 108h1v1h-1zM107 47h1v1h-1zM52 111h1v1h-1zM65 50h1v1h-1zM10 114h1v1h-1zM68 55h1v1h-1zM100 44h1v1h-1zM86 109h1v1h-1zM3 111h1v1h-1zM61 52h1v1h-1zM80 65h1v1h-1zM98 119h1v1h-1zM10 6h1v1h-1zM82 111h1v1h-1zM21 101h1v1h-1zM54 49h1v1h-1zM40 114h1v1h-1zM86 1h1v1h-1zM116 109h1v1h-1zM47 9h1v1h-1zM88 47h1v1h-1zM107 60h1v1h-1zM5 12h1v1h-1zM123 4h1v1h-1zM40 6h1v1h-1zM7 58h1v1h-1zM81 7h1v1h-1zM42 52h1v1h-1zM28 117h1v1h-1zM0 55h1v1h-1zM74 4h1v1h-1zM32 7h1v1h-1zM123 125h1v1h-1zM35 12h1v1h-1zM21 114h1v1h-1zM34 53h1v1h-1zM72 79h1v1h-1zM74 125h1v1h-1zM13 115h1v1h-1zM5 25h1v1h-1zM49 68h1v1h-1zM90 69h1v1h-1zM123 17h1v1h-1zM26 84h1v1h-1zM122 21h1v1h-1zM125 63h1v1h-1zM39 23h1v1h-1zM23 15h1v1h-1zM102 79h1v1h-1zM60 82h1v1h-1zM13 7h1v1h-1zM118 23h1v1h-1zM76 26h1v1h-1zM117 64h1v1h-1zM34 66h1v1h-1zM92 7h1v1h-1zM97 85h1v1h-1zM14 87h1v1h-1zM27 26h1v1h-1zM11 18h1v1h-1zM62 20h1v1h-1zM124 80h1v1h-1zM99 23h1v1h-1zM85 88h1v1h-1zM118 36h1v1h-1zM2 90h1v1h-1zM117 77h1v1h-1zM15 29h1v1h-1zM120 82h1v1h-1zM91 24h1v1h-1zM71 82h1v1h-1zM103 34h1v1h-1zM115 88h1v1h-1zM87 26h1v1h-1zM6 101h1v1h-1zM45 29h1v1h-1zM22 45h1v1h-1zM127 98h1v1h-1zM25 87h1v1h-1zM101 45h1v1h-1zM18 47h1v1h-1zM91 37h1v1h-1zM36 101h1v1h-1zM75 29h1v1h-1zM84 34h1v1h-1zM54 91h1v1h-1zM73 104h1v1h-1zM45 42h1v1h-1zM86 43h1v1h-1zM31 107h1v1h-1zM3 45h1v1h-1zM89 48h1v1h-1zM66 101h1v1h-1zM126 115h1v1h-1zM43 117h1v1h-1zM101 58h1v1h-1zM1 120h1v1h-1zM40 48h1v1h-1zM72 0h1v1h-1zM58 102h1v1h-1zM61 107h1v1h-1zM80 120h1v1h-1zM33 45h1v1h-1zM52 58h1v1h-1zM93 59h1v1h-1zM19 110h1v1h-1zM10 61h1v1h-1zM73 117h1v1h-1zM26 5h1v1h-1zM12 107h1v1h-1zM67 43h1v1h-1zM28 51h1v1h-1zM19 2h1v1h-1zM46 105h1v1h-1zM82 58h1v1h-1zM123 59h1v1h-1zM40 61h1v1h-1zM81 62h1v1h-1zM26 126h1v1h-1zM114 10h1v1h-1zM58 115h1v1h-1zM42 107h1v1h-1zM116 56h1v1h-1zM74 59h1v1h-1zM95 118h1v1h-1zM7 5h1v1h-1zM70 61h1v1h-1zM9 51h1v1h-1zM102 13h1v1h-1zM104 59h1v1h-1zM49 123h1v1h-1zM62 62h1v1h-1zM120 3h1v1h-1zM20 65h1v1h-1zM53 13h1v1h-1zM42 120h1v1h-1zM97 19h1v1h-1zM129 8h1v1h-1zM41 124h1v1h-1zM74 72h1v1h-1zM13 62h1v1h-1zM118 78h1v1h-1zM71 3h1v1h-1zM35 80h1v1h-1zM76 81h1v1h-1zM48 19h1v1h-1zM92 62h1v1h-1zM37 126h1v1h-1zM9 64h1v1h-1zM50 65h1v1h-1zM69 78h1v1h-1zM25 8h1v1h-1zM62 75h1v1h-1zM103 76h1v1h-1zM120 16h1v1h-1zM59 6h1v1h-1zM23 83h1v1h-1zM97 32h1v1h-1zM118 91h1v1h-1zM112 17h1v1h-1zM76 94h1v1h-1zM48 32h1v1h-1zM92 75h1v1h-1zM69 91h1v1h-1zM127 32h1v1h-1zM27 94h1v1h-1zM25 21h1v1h-1zM66 22h1v1h-1zM85 35h1v1h-1zM30 99h1v1h-1zM2 37h1v1h-1zM87 81h1v1h-1zM1 41h1v1h-1zM106 94h1v1h-1zM59 19h1v1h-1zM64 97h1v1h-1zM112 30h1v1h-1zM98 95h1v1h-1zM73 38h1v1h-1zM108 32h1v1h-1zM94 97h1v1h-1zM66 35h1v1h-1zM1 54h1v1h-1zM45 97h1v1h-1zM119 46h1v1h-1zM17 35h1v1h-1zM58 36h1v1h-1zM3 100h1v1h-1zM22 113h1v1h-1zM82 100h1v1h-1zM101 113h1v1h-1zM114 52h1v1h-1zM31 54h1v1h-1zM75 97h1v1h-1zM33 100h1v1h-1zM107 49h1v1h-1zM126 62h1v1h-1zM24 51h1v1h-1zM10 116h1v1h-1zM109 95h1v1h-1zM68 57h1v1h-1zM86 111h1v1h-1zM70 103h1v1h-1zM3 113h1v1h-1zM89 116h1v1h-1zM121 105h1v1h-1zM19 57h1v1h-1zM93 6h1v1h-1zM63 100h1v1h-1zM51 9h1v1h-1zM123 114h1v1h-1zM12 54h1v1h-1zM130 46h1v1h-1zM89 8h1v1h-1zM47 11h1v1h-1zM33 113h1v1h-1zM74 114h1v1h-1zM5 14h1v1h-1zM49 57h1v1h-1zM123 6h1v1h-1zM109 108h1v1h-1zM67 111h1v1h-1zM86 124h1v1h-1zM125 52h1v1h-1zM39 12h1v1h-1zM70 116h1v1h-1zM42 54h1v1h-1zM116 3h1v1h-1zM102 68h1v1h-1zM74 6h1v1h-1zM35 14h1v1h-1zM21 116h1v1h-1zM62 117h1v1h-1zM69 12h1v1h-1zM14 76h1v1h-1zM113 55h1v1h-1zM13 117h1v1h-1zM46 65h1v1h-1zM81 22h1v1h-1zM92 117h1v1h-1zM9 119h1v1h-1zM102 81h1v1h-1zM41 71h1v1h-1zM13 9h1v1h-1zM99 12h1v1h-1zM2 79h1v1h-1zM76 28h1v1h-1zM34 68h1v1h-1zM120 71h1v1h-1zM37 73h1v1h-1zM111 22h1v1h-1zM50 12h1v1h-1zM55 90h1v1h-1zM8 15h1v1h-1zM84 10h1v1h-1zM103 23h1v1h-1zM87 15h1v1h-1zM6 90h1v1h-1zM23 30h1v1h-1zM64 31h1v1h-1zM108 74h1v1h-1zM127 87h1v1h-1zM85 90h1v1h-1zM76 41h1v1h-1zM120 84h1v1h-1zM59 74h1v1h-1zM8 28h1v1h-1zM11 33h1v1h-1zM6 103h1v1h-1zM45 31h1v1h-1zM124 95h1v1h-1zM22 47h1v1h-1zM121 26h1v1h-1zM66 90h1v1h-1zM79 29h1v1h-1zM24 93h1v1h-1zM15 44h1v1h-1zM1 109h1v1h-1zM18 49h1v1h-1zM119 101h1v1h-1zM91 39h1v1h-1zM36 103h1v1h-1zM77 104h1v1h-1zM75 31h1v1h-1zM94 44h1v1h-1zM52 47h1v1h-1zM10 50h1v1h-1zM115 103h1v1h-1zM54 93h1v1h-1zM12 96h1v1h-1zM86 45h1v1h-1zM31 109h1v1h-1zM3 47h1v1h-1zM89 50h1v1h-1zM80 1h1v1h-1zM121 39h1v1h-1zM126 117h1v1h-1zM101 60h1v1h-1zM68 112h1v1h-1zM1 122h1v1h-1zM40 50h1v1h-1zM58 104h1v1h-1zM77 117h1v1h-1zM75 44h1v1h-1zM74 48h1v1h-1zM10 63h1v1h-1zM51 64h1v1h-1zM95 107h1v1h-1zM12 109h1v1h-1zM86 58h1v1h-1zM72 123h1v1h-1zM47 66h1v1h-1zM104 48h1v1h-1zM49 112h1v1h-1zM68 125h1v1h-1zM21 50h1v1h-1zM40 63h1v1h-1zM125 107h1v1h-1zM56 7h1v1h-1zM42 109h1v1h-1zM116 58h1v1h-1zM61 122h1v1h-1zM102 123h1v1h-1zM14 10h1v1h-1zM74 61h1v1h-1zM51 77h1v1h-1zM16 56h1v1h-1zM35 69h1v1h-1zM34 110h1v1h-1zM67 58h1v1h-1zM70 63h1v1h-1zM28 66h1v1h-1zM102 15h1v1h-1zM5 82h1v1h-1zM120 5h1v1h-1zM37 7h1v1h-1zM56 20h1v1h-1zM96 62h1v1h-1zM55 24h1v1h-1zM113 2h1v1h-1zM32 77h1v1h-1zM16 69h1v1h-1zM90 18h1v1h-1zM76 83h1v1h-1zM29 8h1v1h-1zM34 123h1v1h-1zM6 24h1v1h-1zM105 3h1v1h-1zM9 66h1v1h-1zM124 16h1v1h-1zM69 80h1v1h-1zM71 126h1v1h-1zM2 26h1v1h-1zM117 13h1v1h-1zM62 77h1v1h-1zM20 80h1v1h-1zM106 83h1v1h-1zM23 85h1v1h-1zM55 37h1v1h-1zM99 80h1v1h-1zM118 93h1v1h-1zM38 70h1v1h-1zM76 96h1v1h-1zM29 21h1v1h-1zM6 37h1v1h-1zM18 91h1v1h-1zM105 16h1v1h-1zM124 29h1v1h-1zM108 21h1v1h-1zM27 96h1v1h-1zM66 24h1v1h-1zM24 27h1v1h-1zM1 43h1v1h-1zM17 24h1v1h-1zM22 102h1v1h-1zM80 43h1v1h-1zM38 83h1v1h-1zM112 32h1v1h-1zM57 96h1v1h-1zM98 97h1v1h-1zM15 99h1v1h-1zM101 102h1v1h-1zM54 27h1v1h-1zM31 43h1v1h-1zM94 99h1v1h-1zM10 105h1v1h-1zM1 56h1v1h-1zM128 97h1v1h-1zM87 96h1v1h-1zM119 48h1v1h-1zM58 38h1v1h-1zM121 94h1v1h-1zM63 89h1v1h-1zM82 102h1v1h-1zM101 115h1v1h-1zM54 40h1v1h-1zM40 105h1v1h-1zM114 54h1v1h-1zM12 43h1v1h-1zM72 57h1v1h-1zM130 35h1v1h-1zM52 115h1v1h-1zM93 116h1v1h-1zM126 64h1v1h-1zM65 54h1v1h-1zM49 46h1v1h-1zM68 59h1v1h-1zM86 113h1v1h-1zM58 51h1v1h-1zM102 57h1v1h-1zM47 121h1v1h-1zM0 46h1v1h-1zM51 11h1v1h-1zM123 116h1v1h-1zM21 105h1v1h-1zM114 67h1v1h-1zM12 56h1v1h-1zM116 113h1v1h-1zM28 0h1v1h-1zM88 51h1v1h-1zM46 54h1v1h-1zM65 67h1v1h-1zM68 72h1v1h-1zM35 124h1v1h-1zM109 110h1v1h-1zM20 1h1v1h-1zM39 14h1v1h-1zM42 56h1v1h-1zM9 108h1v1h-1zM28 121h1v1h-1zM0 59h1v1h-1zM44 65h1v1h-1zM35 16h1v1h-1zM76 17h1v1h-1zM34 57h1v1h-1zM37 62h1v1h-1zM111 11h1v1h-1zM97 76h1v1h-1zM9 0h1v1h-1zM50 1h1v1h-1zM129 65h1v1h-1zM113 57h1v1h-1zM13 119h1v1h-1zM90 73h1v1h-1zM62 11h1v1h-1zM7 75h1v1h-1zM106 17h1v1h-1zM6 79h1v1h-1zM4 6h1v1h-1zM83 70h1v1h-1zM41 73h1v1h-1zM127 76h1v1h-1zM13 11h1v1h-1zM25 65h1v1h-1zM99 14h1v1h-1zM15 20h1v1h-1zM120 73h1v1h-1zM78 76h1v1h-1zM97 89h1v1h-1zM36 79h1v1h-1zM110 28h1v1h-1zM27 30h1v1h-1zM11 22h1v1h-1zM71 73h1v1h-1zM90 86h1v1h-1zM29 76h1v1h-1zM103 25h1v1h-1zM4 19h1v1h-1zM105 71h1v1h-1zM96 22h1v1h-1zM22 36h1v1h-1zM66 79h1v1h-1zM85 92h1v1h-1zM38 17h1v1h-1zM2 94h1v1h-1zM43 95h1v1h-1zM120 86h1v1h-1zM59 76h1v1h-1zM18 38h1v1h-1zM17 79h1v1h-1zM91 28h1v1h-1zM36 92h1v1h-1zM110 41h1v1h-1zM11 35h1v1h-1zM112 87h1v1h-1zM31 98h1v1h-1zM3 36h1v1h-1zM22 49h1v1h-1zM108 89h1v1h-1zM121 28h1v1h-1zM66 92h1v1h-1zM43 108h1v1h-1zM82 36h1v1h-1zM101 49h1v1h-1zM1 111h1v1h-1zM59 89h1v1h-1zM119 103h1v1h-1zM91 41h1v1h-1zM75 33h1v1h-1zM80 111h1v1h-1zM33 36h1v1h-1zM93 50h1v1h-1zM128 44h1v1h-1zM67 34h1v1h-1zM86 47h1v1h-1zM31 111h1v1h-1zM130 90h1v1h-1zM47 55h1v1h-1zM80 3h1v1h-1zM126 119h1v1h-1zM24 108h1v1h-1zM63 36h1v1h-1zM114 1h1v1h-1zM100 103h1v1h-1zM72 4h1v1h-1zM77 119h1v1h-1zM42 98h1v1h-1zM0 101h1v1h-1zM32 53h1v1h-1zM51 66h1v1h-1zM68 6h1v1h-1zM114 122h1v1h-1zM67 47h1v1h-1zM72 125h1v1h-1zM130 103h1v1h-1zM56 117h1v1h-1zM9 42h1v1h-1zM102 4h1v1h-1zM47 68h1v1h-1zM88 106h1v1h-1zM19 6h1v1h-1zM65 122h1v1h-1zM21 52h1v1h-1zM81 66h1v1h-1zM53 4h1v1h-1zM72 17h1v1h-1zM102 125h1v1h-1zM0 114h1v1h-1zM74 63h1v1h-1zM118 69h1v1h-1zM16 58h1v1h-1zM90 7h1v1h-1zM35 71h1v1h-1zM34 112h1v1h-1zM9 55h1v1h-1zM83 4h1v1h-1zM129 120h1v1h-1zM60 20h1v1h-1zM44 12h1v1h-1zM2 15h1v1h-1zM117 2h1v1h-1zM81 79h1v1h-1zM122 80h1v1h-1zM20 69h1v1h-1zM39 82h1v1h-1zM37 9h1v1h-1zM96 64h1v1h-1zM113 4h1v1h-1zM118 82h1v1h-1zM90 20h1v1h-1zM48 23h1v1h-1zM92 66h1v1h-1zM111 79h1v1h-1zM50 69h1v1h-1zM124 18h1v1h-1zM110 83h1v1h-1zM8 72h1v1h-1zM127 23h1v1h-1zM113 125h1v1h-1zM44 25h1v1h-1zM85 26h1v1h-1zM103 80h1v1h-1zM122 93h1v1h-1zM87 72h1v1h-1zM20 82h1v1h-1zM105 126h1v1h-1zM97 36h1v1h-1zM17 13h1v1h-1zM96 77h1v1h-1zM99 82h1v1h-1zM38 72h1v1h-1zM112 21h1v1h-1zM76 98h1v1h-1zM29 23h1v1h-1zM18 93h1v1h-1zM108 23h1v1h-1zM8 85h1v1h-1zM11 90h1v1h-1zM30 103h1v1h-1zM84 80h1v1h-1zM103 93h1v1h-1zM45 88h1v1h-1zM36 39h1v1h-1zM22 104h1v1h-1zM79 86h1v1h-1zM98 99h1v1h-1zM115 39h1v1h-1zM101 104h1v1h-1zM54 29h1v1h-1zM18 106h1v1h-1zM12 32h1v1h-1zM94 101h1v1h-1zM66 39h1v1h-1zM107 40h1v1h-1zM65 43h1v1h-1zM109 86h1v1h-1zM1 58h1v1h-1zM128 99h1v1h-1zM100 37h1v1h-1zM119 50h1v1h-1zM86 102h1v1h-1zM3 104h1v1h-1zM42 32h1v1h-1zM121 96h1v1h-1zM98 112h1v1h-1zM51 0h1v1h-1zM82 104h1v1h-1zM12 45h1v1h-1zM47 2h1v1h-1zM107 53h1v1h-1zM46 43h1v1h-1zM51 121h1v1h-1zM81 0h1v1h-1zM67 102h1v1h-1zM26 64h1v1h-1zM125 43h1v1h-1zM42 45h1v1h-1zM32 0h1v1h-1zM95 56h1v1h-1zM81 121h1v1h-1zM72 72h1v1h-1zM28 2h1v1h-1zM88 53h1v1h-1zM90 62h1v1h-1zM62 0h1v1h-1zM67 115h1v1h-1zM122 14h1v1h-1zM26 77h1v1h-1zM20 3h1v1h-1zM111 121h1v1h-1zM23 8h1v1h-1zM28 123h1v1h-1zM0 61h1v1h-1zM13 0h1v1h-1zM99 3h1v1h-1zM32 13h1v1h-1zM118 16h1v1h-1zM104 118h1v1h-1zM2 70h1v1h-1zM92 0h1v1h-1zM14 80h1v1h-1zM13 121h1v1h-1zM71 62h1v1h-1zM30 24h1v1h-1zM90 75h1v1h-1zM103 14h1v1h-1zM48 78h1v1h-1zM20 16h1v1h-1zM106 19h1v1h-1zM92 121h1v1h-1zM6 81h1v1h-1zM64 22h1v1h-1zM124 73h1v1h-1zM127 78h1v1h-1zM44 80h1v1h-1zM118 29h1v1h-1zM57 19h1v1h-1zM2 83h1v1h-1zM117 70h1v1h-1zM92 13h1v1h-1zM91 17h1v1h-1zM8 19h1v1h-1zM94 22h1v1h-1zM112 76h1v1h-1zM29 78h1v1h-1zM115 81h1v1h-1zM48 91h1v1h-1zM45 22h1v1h-1zM124 86h1v1h-1zM127 91h1v1h-1zM121 17h1v1h-1zM25 80h1v1h-1zM85 94h1v1h-1zM38 19h1v1h-1zM98 33h1v1h-1zM43 97h1v1h-1zM101 38h1v1h-1zM59 78h1v1h-1zM119 92h1v1h-1zM17 81h1v1h-1zM36 94h1v1h-1zM110 43h1v1h-1zM75 22h1v1h-1zM80 100h1v1h-1zM84 27h1v1h-1zM87 32h1v1h-1zM54 84h1v1h-1zM73 97h1v1h-1zM45 35h1v1h-1zM108 91h1v1h-1zM121 30h1v1h-1zM107 95h1v1h-1zM126 108h1v1h-1zM98 46h1v1h-1zM63 25h1v1h-1zM82 38h1v1h-1zM40 41h1v1h-1zM77 108h1v1h-1zM31 113h1v1h-1zM72 114h1v1h-1zM130 92h1v1h-1zM89 54h1v1h-1zM47 57h1v1h-1zM63 38h1v1h-1zM123 52h1v1h-1zM68 116h1v1h-1zM40 54h1v1h-1zM114 3h1v1h-1zM58 108h1v1h-1zM102 114h1v1h-1zM19 116h1v1h-1zM65 3h1v1h-1zM51 68h1v1h-1zM68 8h1v1h-1zM109 46h1v1h-1zM114 124h1v1h-1zM70 54h1v1h-1zM56 119h1v1h-1zM130 105h1v1h-1zM14 122h1v1h-1zM129 109h1v1h-1zM88 108h1v1h-1zM60 9h1v1h-1zM65 124h1v1h-1zM123 65h1v1h-1zM74 65h1v1h-1zM32 68h1v1h-1zM51 81h1v1h-1zM95 124h1v1h-1zM48 12h1v1h-1zM6 15h1v1h-1zM92 55h1v1h-1zM9 57h1v1h-1zM69 71h1v1h-1zM41 9h1v1h-1zM27 74h1v1h-1zM60 22h1v1h-1zM113 114h1v1h-1zM2 17h1v1h-1zM62 68h1v1h-1zM103 69h1v1h-1zM122 82h1v1h-1zM120 9h1v1h-1zM125 124h1v1h-1zM4 63h1v1h-1zM78 12h1v1h-1zM36 15h1v1h-1zM96 66h1v1h-1zM113 6h1v1h-1zM118 84h1v1h-1zM76 87h1v1h-1zM117 125h1v1h-1zM50 71h1v1h-1zM69 84h1v1h-1zM66 15h1v1h-1zM11 79h1v1h-1zM2 30h1v1h-1zM43 31h1v1h-1zM122 95h1v1h-1zM106 87h1v1h-1zM78 25h1v1h-1zM96 79h1v1h-1zM99 84h1v1h-1zM112 23h1v1h-1zM57 87h1v1h-1zM76 100h1v1h-1zM29 25h1v1h-1zM31 34h1v1h-1zM66 28h1v1h-1zM11 92h1v1h-1zM85 41h1v1h-1zM24 31h1v1h-1zM59 25h1v1h-1zM100 26h1v1h-1zM80 47h1v1h-1zM79 88h1v1h-1zM98 101h1v1h-1zM115 41h1v1h-1zM101 106h1v1h-1zM18 108h1v1h-1zM31 47h1v1h-1zM130 26h1v1h-1zM52 106h1v1h-1zM126 55h1v1h-1zM24 44h1v1h-1zM65 45h1v1h-1zM109 88h1v1h-1zM45 103h1v1h-1zM3 106h1v1h-1zM89 109h1v1h-1zM42 34h1v1h-1zM80 60h1v1h-1zM121 98h1v1h-1zM0 37h1v1h-1zM79 101h1v1h-1zM51 2h1v1h-1zM54 44h1v1h-1zM95 45h1v1h-1zM114 58h1v1h-1zM12 47h1v1h-1zM53 48h1v1h-1zM116 104h1v1h-1zM47 4h1v1h-1zM107 55h1v1h-1zM74 107h1v1h-1zM5 7h1v1h-1zM51 123h1v1h-1zM49 50h1v1h-1zM68 63h1v1h-1zM81 2h1v1h-1zM67 104h1v1h-1zM125 45h1v1h-1zM102 61h1v1h-1zM32 2h1v1h-1zM118 5h1v1h-1zM104 107h1v1h-1zM123 120h1v1h-1zM21 109h1v1h-1zM56 66h1v1h-1zM28 4h1v1h-1zM69 5h1v1h-1zM14 69h1v1h-1zM113 48h1v1h-1zM46 58h1v1h-1zM90 64h1v1h-1zM62 2h1v1h-1zM7 66h1v1h-1zM20 5h1v1h-1zM39 18h1v1h-1zM111 123h1v1h-1zM83 61h1v1h-1zM28 125h1v1h-1zM41 64h1v1h-1zM13 2h1v1h-1zM25 56h1v1h-1zM57 8h1v1h-1zM76 21h1v1h-1zM117 59h1v1h-1zM120 64h1v1h-1zM92 2h1v1h-1zM37 66h1v1h-1zM111 15h1v1h-1zM78 67h1v1h-1zM110 19h1v1h-1zM129 69h1v1h-1zM96 121h1v1h-1zM8 8h1v1h-1zM27 21h1v1h-1zM13 123h1v1h-1zM30 26h1v1h-1zM71 64h1v1h-1zM90 77h1v1h-1zM106 21h1v1h-1zM92 123h1v1h-1zM4 10h1v1h-1zM23 23h1v1h-1zM64 24h1v1h-1zM50 126h1v1h-1zM127 80h1v1h-1zM25 69h1v1h-1zM44 82h1v1h-1zM85 83h1v1h-1zM2 85h1v1h-1zM43 86h1v1h-1zM120 77h1v1h-1zM59 67h1v1h-1zM78 80h1v1h-1zM50 18h1v1h-1zM91 19h1v1h-1zM17 70h1v1h-1zM110 32h1v1h-1zM36 83h1v1h-1zM11 26h1v1h-1zM71 77h1v1h-1zM112 78h1v1h-1zM29 80h1v1h-1zM115 83h1v1h-1zM124 88h1v1h-1zM22 40h1v1h-1zM127 93h1v1h-1zM121 19h1v1h-1zM85 96h1v1h-1zM38 21h1v1h-1zM98 35h1v1h-1zM15 37h1v1h-1zM1 102h1v1h-1zM18 42h1v1h-1zM59 80h1v1h-1zM119 94h1v1h-1zM17 83h1v1h-1zM94 37h1v1h-1zM80 102h1v1h-1zM33 27h1v1h-1zM112 91h1v1h-1zM10 43h1v1h-1zM115 96h1v1h-1zM109 22h1v1h-1zM128 35h1v1h-1zM73 99h1v1h-1zM86 38h1v1h-1zM31 102h1v1h-1zM89 43h1v1h-1zM24 99h1v1h-1zM63 27h1v1h-1zM1 115h1v1h-1zM40 43h1v1h-1zM100 94h1v1h-1zM42 89h1v1h-1zM116 38h1v1h-1zM61 102h1v1h-1zM80 115h1v1h-1zM33 40h1v1h-1zM19 105h1v1h-1zM10 56h1v1h-1zM54 99h1v1h-1zM128 48h1v1h-1zM95 100h1v1h-1zM31 115h1v1h-1zM130 94h1v1h-1zM89 56h1v1h-1zM28 46h1v1h-1zM88 97h1v1h-1zM47 59h1v1h-1zM5 62h1v1h-1zM123 54h1v1h-1zM114 5h1v1h-1zM58 110h1v1h-1zM42 102h1v1h-1zM102 116h1v1h-1zM14 3h1v1h-1zM0 105h1v1h-1zM19 118h1v1h-1zM60 119h1v1h-1zM93 67h1v1h-1zM35 62h1v1h-1zM70 56h1v1h-1zM47 72h1v1h-1zM60 11h1v1h-1zM49 118h1v1h-1zM90 119h1v1h-1zM20 60h1v1h-1zM125 113h1v1h-1zM37 0h1v1h-1zM83 116h1v1h-1zM129 3h1v1h-1zM13 57h1v1h-1zM118 73h1v1h-1zM16 62h1v1h-1zM35 75h1v1h-1zM76 76h1v1h-1zM34 116h1v1h-1zM120 119h1v1h-1zM92 57h1v1h-1zM6 17h1v1h-1zM111 70h1v1h-1zM50 60h1v1h-1zM124 9h1v1h-1zM25 3h1v1h-1zM71 119h1v1h-1zM117 6h1v1h-1zM122 84h1v1h-1zM120 11h1v1h-1zM20 73h1v1h-1zM39 86h1v1h-1zM59 1h1v1h-1zM36 17h1v1h-1zM118 86h1v1h-1zM112 12h1v1h-1zM57 76h1v1h-1zM76 89h1v1h-1zM15 79h1v1h-1zM48 27h1v1h-1zM8 76h1v1h-1zM27 89h1v1h-1zM25 16h1v1h-1zM85 30h1v1h-1zM30 94h1v1h-1zM43 33h1v1h-1zM1 36h1v1h-1zM4 78h1v1h-1zM121 74h1v1h-1zM112 25h1v1h-1zM98 90h1v1h-1zM115 30h1v1h-1zM15 92h1v1h-1zM110 100h1v1h-1zM126 44h1v1h-1zM24 33h1v1h-1zM43 46h1v1h-1zM87 89h1v1h-1zM100 28h1v1h-1zM3 95h1v1h-1zM77 44h1v1h-1zM101 108h1v1h-1zM54 33h1v1h-1zM73 46h1v1h-1zM12 36h1v1h-1zM75 92h1v1h-1zM88 31h1v1h-1zM126 57h1v1h-1zM65 47h1v1h-1zM49 39h1v1h-1zM68 52h1v1h-1zM128 103h1v1h-1zM100 41h1v1h-1zM70 98h1v1h-1zM3 108h1v1h-1zM58 44h1v1h-1zM89 111h1v1h-1zM102 50h1v1h-1zM0 39h1v1h-1zM93 1h1v1h-1zM79 103h1v1h-1zM63 95h1v1h-1zM82 108h1v1h-1zM21 98h1v1h-1zM95 47h1v1h-1zM12 49h1v1h-1zM53 50h1v1h-1zM72 63h1v1h-1zM116 106h1v1h-1zM14 58h1v1h-1zM74 109h1v1h-1zM32 112h1v1h-1zM49 52h1v1h-1zM123 1h1v1h-1zM7 55h1v1h-1zM26 68h1v1h-1zM86 119h1v1h-1zM125 47h1v1h-1zM39 7h1v1h-1zM89 124h1v1h-1zM102 63h1v1h-1zM41 53h1v1h-1zM74 1h1v1h-1zM60 66h1v1h-1zM44 58h1v1h-1zM123 122h1v1h-1zM53 63h1v1h-1zM37 55h1v1h-1zM111 4h1v1h-1zM56 68h1v1h-1zM69 7h1v1h-1zM113 50h1v1h-1zM32 125h1v1h-1zM7 68h1v1h-1zM48 69h1v1h-1zM125 60h1v1h-1zM39 20h1v1h-1zM41 66h1v1h-1zM60 79h1v1h-1zM25 58h1v1h-1zM16 9h1v1h-1zM2 74h1v1h-1zM117 61h1v1h-1zM92 4h1v1h-1zM4 120h1v1h-1zM96 123h1v1h-1zM55 85h1v1h-1zM13 125h1v1h-1zM71 66h1v1h-1zM90 79h1v1h-1zM29 69h1v1h-1zM122 31h1v1h-1zM6 85h1v1h-1zM22 29h1v1h-1zM127 82h1v1h-1zM66 72h1v1h-1zM57 23h1v1h-1zM2 87h1v1h-1zM84 126h1v1h-1zM98 24h1v1h-1zM18 31h1v1h-1zM119 83h1v1h-1zM110 34h1v1h-1zM115 85h1v1h-1zM87 23h1v1h-1zM128 24h1v1h-1zM31 91h1v1h-1zM108 82h1v1h-1zM66 85h1v1h-1zM79 24h1v1h-1zM43 101h1v1h-1zM82 29h1v1h-1zM1 104h1v1h-1zM18 44h1v1h-1zM59 82h1v1h-1zM77 99h1v1h-1zM75 26h1v1h-1zM94 39h1v1h-1zM52 42h1v1h-1zM112 93h1v1h-1zM73 101h1v1h-1zM114 102h1v1h-1zM86 40h1v1h-1zM31 104h1v1h-1zM89 45h1v1h-1zM121 34h1v1h-1zM47 48h1v1h-1zM107 99h1v1h-1zM88 86h1v1h-1zM24 101h1v1h-1zM63 29h1v1h-1zM100 96h1v1h-1zM77 112h1v1h-1zM10 58h1v1h-1zM51 59h1v1h-1zM95 102h1v1h-1zM114 115h1v1h-1zM12 104h1v1h-1zM89 58h1v1h-1zM130 96h1v1h-1zM28 48h1v1h-1zM46 102h1v1h-1zM5 64h1v1h-1zM104 43h1v1h-1zM123 56h1v1h-1zM26 123h1v1h-1zM39 62h1v1h-1zM116 53h1v1h-1zM102 118h1v1h-1zM74 56h1v1h-1zM19 120h1v1h-1zM60 121h1v1h-1zM13 46h1v1h-1zM51 72h1v1h-1zM35 64h1v1h-1zM95 115h1v1h-1zM53 118h1v1h-1zM92 46h1v1h-1zM69 62h1v1h-1zM129 113h1v1h-1zM44 5h1v1h-1zM104 56h1v1h-1zM81 72h1v1h-1zM122 73h1v1h-1zM20 62h1v1h-1zM39 75h1v1h-1zM125 115h1v1h-1zM78 3h1v1h-1zM14 18h1v1h-1zM25 113h1v1h-1zM29 3h1v1h-1zM34 118h1v1h-1zM120 121h1v1h-1zM78 124h1v1h-1zM9 61h1v1h-1zM124 11h1v1h-1zM129 126h1v1h-1zM108 3h1v1h-1zM8 65h1v1h-1zM127 16h1v1h-1zM25 5h1v1h-1zM85 19h1v1h-1zM2 21h1v1h-1zM117 8h1v1h-1zM43 22h1v1h-1zM29 124h1v1h-1zM106 78h1v1h-1zM4 67h1v1h-1zM17 6h1v1h-1zM96 70h1v1h-1zM25 126h1v1h-1zM112 14h1v1h-1zM73 22h1v1h-1zM59 124h1v1h-1zM124 24h1v1h-1zM91 76h1v1h-1zM108 16h1v1h-1zM27 91h1v1h-1zM66 19h1v1h-1zM11 83h1v1h-1zM30 96h1v1h-1zM24 22h1v1h-1zM43 35h1v1h-1zM87 78h1v1h-1zM119 30h1v1h-1zM36 32h1v1h-1zM38 78h1v1h-1zM112 27h1v1h-1zM57 91h1v1h-1zM115 32h1v1h-1zM15 94h1v1h-1zM31 38h1v1h-1zM75 81h1v1h-1zM94 94h1v1h-1zM66 32h1v1h-1zM52 97h1v1h-1zM126 46h1v1h-1zM10 100h1v1h-1zM87 91h1v1h-1zM100 30h1v1h-1zM45 94h1v1h-1zM86 95h1v1h-1zM58 33h1v1h-1zM121 89h1v1h-1zM80 51h1v1h-1zM79 92h1v1h-1zM98 105h1v1h-1zM63 84h1v1h-1zM82 97h1v1h-1zM95 36h1v1h-1zM40 100h1v1h-1zM114 49h1v1h-1zM31 51h1v1h-1zM75 94h1v1h-1zM116 95h1v1h-1zM52 110h1v1h-1zM93 111h1v1h-1zM65 49h1v1h-1zM51 114h1v1h-1zM109 92h1v1h-1zM128 105h1v1h-1zM67 95h1v1h-1zM26 57h1v1h-1zM86 108h1v1h-1zM61 51h1v1h-1zM102 52h1v1h-1zM47 116h1v1h-1zM19 54h1v1h-1zM5 119h1v1h-1zM63 97h1v1h-1zM51 6h1v1h-1zM21 100h1v1h-1zM95 49h1v1h-1zM81 114h1v1h-1zM34 39h1v1h-1zM53 52h1v1h-1zM37 44h1v1h-1zM116 108h1v1h-1zM88 46h1v1h-1zM93 124h1v1h-1zM35 119h1v1h-1zM26 70h1v1h-1zM67 108h1v1h-1zM111 114h1v1h-1zM9 103h1v1h-1zM28 116h1v1h-1zM0 54h1v1h-1zM41 55h1v1h-1zM60 68h1v1h-1zM32 6h1v1h-1zM21 113h1v1h-1zM76 12h1v1h-1zM117 50h1v1h-1zM53 65h1v1h-1zM23 122h1v1h-1zM56 70h1v1h-1zM14 73h1v1h-1zM55 74h1v1h-1zM74 124h1v1h-1zM129 60h1v1h-1zM113 52h1v1h-1zM16 119h1v1h-1zM62 6h1v1h-1zM92 114h1v1h-1zM9 116h1v1h-1zM50 117h1v1h-1zM96 4h1v1h-1zM41 68h1v1h-1zM25 60h1v1h-1zM99 9h1v1h-1zM85 74h1v1h-1zM104 124h1v1h-1zM118 22h1v1h-1zM57 12h1v1h-1zM15 15h1v1h-1zM59 58h1v1h-1zM92 6h1v1h-1zM50 9h1v1h-1zM36 74h1v1h-1zM96 125h1v1h-1zM27 25h1v1h-1zM11 17h1v1h-1zM30 30h1v1h-1zM29 71h1v1h-1zM105 66h1v1h-1zM22 31h1v1h-1zM25 73h1v1h-1zM121 10h1v1h-1zM24 77h1v1h-1zM98 26h1v1h-1zM43 90h1v1h-1zM101 31h1v1h-1zM78 84h1v1h-1zM110 36h1v1h-1zM94 28h1v1h-1zM11 30h1v1h-1zM52 31h1v1h-1zM84 20h1v1h-1zM10 34h1v1h-1zM54 77h1v1h-1zM73 90h1v1h-1zM45 28h1v1h-1zM31 93h1v1h-1zM108 84h1v1h-1zM22 44h1v1h-1zM126 101h1v1h-1zM24 90h1v1h-1zM98 39h1v1h-1zM119 98h1v1h-1zM17 87h1v1h-1zM58 88h1v1h-1zM75 28h1v1h-1zM33 31h1v1h-1zM109 26h1v1h-1zM12 93h1v1h-1zM70 34h1v1h-1zM107 101h1v1h-1zM5 53h1v1h-1zM79 39h1v1h-1zM123 45h1v1h-1zM68 109h1v1h-1zM100 98h1v1h-1zM61 106h1v1h-1zM102 107h1v1h-1zM33 44h1v1h-1zM32 48h1v1h-1zM109 39h1v1h-1zM114 117h1v1h-1zM67 42h1v1h-1zM53 107h1v1h-1zM130 98h1v1h-1zM28 50h1v1h-1zM5 66h1v1h-1zM49 109h1v1h-1zM68 122h1v1h-1zM21 47h1v1h-1zM62 48h1v1h-1zM81 61h1v1h-1zM39 64h1v1h-1zM56 4h1v1h-1zM0 109h1v1h-1zM74 58h1v1h-1zM60 123h1v1h-1zM13 48h1v1h-1zM51 74h1v1h-1zM35 66h1v1h-1zM95 117h1v1h-1zM7 4h1v1h-1zM56 125h1v1h-1zM69 64h1v1h-1zM41 2h1v1h-1zM104 58h1v1h-1zM71 110h1v1h-1zM90 123h1v1h-1zM62 61h1v1h-1zM7 125h1v1h-1zM125 117h1v1h-1zM39 77h1v1h-1zM23 69h1v1h-1zM97 18h1v1h-1zM36 8h1v1h-1zM41 123h1v1h-1zM13 61h1v1h-1zM118 77h1v1h-1zM76 80h1v1h-1zM29 5h1v1h-1zM48 18h1v1h-1zM34 120h1v1h-1zM78 126h1v1h-1zM50 64h1v1h-1zM69 77h1v1h-1zM110 78h1v1h-1zM108 5h1v1h-1zM66 8h1v1h-1zM85 21h1v1h-1zM2 23h1v1h-1zM84 62h1v1h-1zM29 126h1v1h-1zM120 15h1v1h-1zM20 77h1v1h-1zM119 19h1v1h-1zM105 121h1v1h-1zM64 83h1v1h-1zM23 82h1v1h-1zM36 21h1v1h-1zM96 72h1v1h-1zM108 126h1v1h-1zM38 67h1v1h-1zM57 80h1v1h-1zM76 93h1v1h-1zM15 83h1v1h-1zM59 126h1v1h-1zM18 88h1v1h-1zM50 77h1v1h-1zM91 78h1v1h-1zM8 80h1v1h-1zM94 83h1v1h-1zM66 21h1v1h-1zM11 85h1v1h-1zM52 86h1v1h-1zM24 24h1v1h-1zM84 75h1v1h-1zM87 80h1v1h-1zM59 18h1v1h-1zM100 19h1v1h-1zM17 21h1v1h-1zM3 86h1v1h-1zM77 35h1v1h-1zM22 99h1v1h-1zM61 27h1v1h-1zM121 78h1v1h-1zM80 40h1v1h-1zM112 29h1v1h-1zM79 81h1v1h-1zM115 34h1v1h-1zM91 91h1v1h-1zM75 83h1v1h-1zM94 96h1v1h-1zM88 22h1v1h-1zM126 48h1v1h-1zM24 37h1v1h-1zM68 43h1v1h-1zM45 96h1v1h-1zM86 97h1v1h-1zM58 35h1v1h-1zM89 102h1v1h-1zM0 30h1v1h-1zM54 37h1v1h-1zM95 38h1v1h-1zM40 102h1v1h-1zM12 40h1v1h-1zM130 32h1v1h-1zM75 96h1v1h-1zM88 35h1v1h-1zM74 100h1v1h-1zM107 48h1v1h-1zM5 0h1v1h-1zM49 43h1v1h-1zM70 102h1v1h-1zM89 115h1v1h-1zM102 54h1v1h-1zM47 118h1v1h-1zM19 56h1v1h-1zM60 57h1v1h-1zM40 115h1v1h-1zM81 116h1v1h-1zM39 119h1v1h-1zM116 110h1v1h-1zM129 49h1v1h-1zM5 13h1v1h-1zM16 108h1v1h-1zM90 57h1v1h-1zM35 121h1v1h-1zM67 110h1v1h-1zM125 51h1v1h-1zM70 115h1v1h-1zM23 3h1v1h-1zM9 105h1v1h-1zM83 54h1v1h-1zM102 67h1v1h-1zM60 70h1v1h-1zM25 49h1v1h-1zM104 113h1v1h-1zM117 52h1v1h-1zM76 14h1v1h-1zM37 59h1v1h-1zM96 114h1v1h-1zM8 1h1v1h-1zM113 54h1v1h-1zM13 116h1v1h-1zM99 119h1v1h-1zM90 70h1v1h-1zM103 9h1v1h-1zM48 73h1v1h-1zM6 76h1v1h-1zM124 68h1v1h-1zM8 122h1v1h-1zM127 73h1v1h-1zM41 70h1v1h-1zM25 62h1v1h-1zM44 75h1v1h-1zM57 14h1v1h-1zM2 78h1v1h-1zM117 65h1v1h-1zM76 27h1v1h-1zM120 70h1v1h-1zM59 60h1v1h-1zM4 124h1v1h-1zM78 73h1v1h-1zM50 11h1v1h-1zM91 12h1v1h-1zM110 25h1v1h-1zM55 89h1v1h-1zM27 27h1v1h-1zM11 19h1v1h-1zM30 32h1v1h-1zM38 122h1v1h-1zM84 9h1v1h-1zM103 22h1v1h-1zM87 14h1v1h-1zM106 27h1v1h-1zM6 89h1v1h-1zM73 79h1v1h-1zM4 16h1v1h-1zM45 17h1v1h-1zM105 68h1v1h-1zM124 81h1v1h-1zM108 73h1v1h-1zM127 86h1v1h-1zM24 79h1v1h-1zM15 30h1v1h-1zM101 33h1v1h-1zM18 35h1v1h-1zM100 74h1v1h-1zM119 87h1v1h-1zM77 90h1v1h-1zM94 30h1v1h-1zM112 84h1v1h-1zM109 15h1v1h-1zM86 31h1v1h-1zM3 33h1v1h-1zM130 74h1v1h-1zM66 89h1v1h-1zM126 103h1v1h-1zM24 92h1v1h-1zM98 41h1v1h-1zM82 33h1v1h-1zM101 46h1v1h-1zM40 36h1v1h-1zM119 100h1v1h-1zM77 103h1v1h-1zM42 82h1v1h-1zM116 31h1v1h-1zM61 95h1v1h-1zM52 46h1v1h-1zM93 47h1v1h-1zM95 93h1v1h-1zM114 106h1v1h-1zM12 95h1v1h-1zM86 44h1v1h-1zM89 49h1v1h-1zM28 39h1v1h-1zM88 90h1v1h-1zM5 55h1v1h-1zM65 106h1v1h-1zM68 111h1v1h-1zM40 49h1v1h-1zM125 93h1v1h-1zM72 1h1v1h-1zM58 103h1v1h-1zM102 109h1v1h-1zM74 47h1v1h-1zM32 50h1v1h-1zM51 63h1v1h-1zM53 109h1v1h-1zM56 114h1v1h-1zM9 39h1v1h-1zM88 103h1v1h-1zM47 65h1v1h-1zM46 106h1v1h-1zM21 49h1v1h-1zM7 114h1v1h-1zM81 63h1v1h-1zM53 1h1v1h-1zM23 58h1v1h-1zM97 7h1v1h-1zM14 9h1v1h-1zM0 111h1v1h-1zM41 112h1v1h-1zM60 125h1v1h-1zM13 50h1v1h-1zM16 55h1v1h-1zM35 68h1v1h-1zM117 107h1v1h-1zM34 109h1v1h-1zM9 52h1v1h-1zM124 2h1v1h-1zM27 69h1v1h-1zM90 125h1v1h-1zM122 77h1v1h-1zM106 69h1v1h-1zM4 58h1v1h-1zM23 71h1v1h-1zM97 20h1v1h-1zM83 122h1v1h-1zM41 125h1v1h-1zM25 117h1v1h-1zM76 82h1v1h-1zM117 120h1v1h-1zM15 72h1v1h-1zM120 125h1v1h-1zM92 63h1v1h-1zM6 23h1v1h-1zM50 66h1v1h-1zM108 7h1v1h-1zM8 69h1v1h-1zM127 20h1v1h-1zM27 82h1v1h-1zM113 122h1v1h-1zM25 9h1v1h-1zM85 23h1v1h-1zM24 13h1v1h-1zM122 90h1v1h-1zM87 69h1v1h-1zM59 7h1v1h-1zM78 20h1v1h-1zM64 85h1v1h-1zM36 23h1v1h-1zM96 74h1v1h-1zM99 79h1v1h-1zM57 82h1v1h-1zM98 83h1v1h-1zM101 88h1v1h-1zM54 13h1v1h-1zM18 90h1v1h-1zM105 15h1v1h-1zM108 20h1v1h-1zM8 82h1v1h-1zM75 72h1v1h-1zM66 23h1v1h-1zM126 37h1v1h-1zM43 39h1v1h-1zM10 91h1v1h-1zM87 82h1v1h-1zM119 34h1v1h-1zM17 23h1v1h-1zM3 88h1v1h-1zM121 80h1v1h-1zM19 32h1v1h-1zM79 83h1v1h-1zM82 88h1v1h-1zM101 101h1v1h-1zM40 91h1v1h-1zM114 40h1v1h-1zM75 85h1v1h-1zM88 24h1v1h-1zM52 101h1v1h-1zM93 102h1v1h-1zM46 27h1v1h-1zM65 40h1v1h-1zM10 104h1v1h-1zM109 83h1v1h-1zM68 45h1v1h-1zM128 96h1v1h-1zM67 86h1v1h-1zM26 48h1v1h-1zM70 91h1v1h-1zM3 101h1v1h-1zM42 29h1v1h-1zM19 45h1v1h-1zM79 96h1v1h-1zM63 88h1v1h-1zM123 102h1v1h-1zM21 91h1v1h-1zM95 40h1v1h-1zM12 42h1v1h-1zM33 101h1v1h-1zM46 40h1v1h-1zM7 48h1v1h-1zM86 112h1v1h-1zM39 0h1v1h-1zM70 104h1v1h-1zM89 117h1v1h-1zM28 107h1v1h-1zM47 120h1v1h-1zM41 46h1v1h-1zM5 123h1v1h-1zM118 0h1v1h-1zM51 10h1v1h-1zM104 102h1v1h-1zM21 104h1v1h-1zM62 105h1v1h-1zM81 118h1v1h-1zM37 48h1v1h-1zM56 61h1v1h-1zM97 62h1v1h-1zM116 112h1v1h-1zM129 51h1v1h-1zM113 43h1v1h-1zM13 105h1v1h-1zM118 121h1v1h-1zM90 59h1v1h-1zM35 123h1v1h-1zM7 61h1v1h-1zM48 62h1v1h-1zM122 11h1v1h-1zM39 13h1v1h-1zM111 118h1v1h-1zM83 56h1v1h-1zM41 59h1v1h-1zM60 72h1v1h-1zM25 51h1v1h-1zM44 64h1v1h-1zM20 121h1v1h-1zM97 75h1v1h-1zM69 13h1v1h-1zM110 14h1v1h-1zM55 78h1v1h-1zM96 116h1v1h-1zM14 77h1v1h-1zM8 3h1v1h-1zM30 21h1v1h-1zM16 123h1v1h-1zM57 124h1v1h-1zM90 72h1v1h-1zM20 13h1v1h-1zM23 18h1v1h-1zM105 57h1v1h-1zM22 22h1v1h-1zM8 124h1v1h-1zM96 8h1v1h-1zM127 75h1v1h-1zM66 65h1v1h-1zM85 78h1v1h-1zM15 19h1v1h-1zM4 126h1v1h-1zM91 14h1v1h-1zM36 78h1v1h-1zM110 27h1v1h-1zM55 91h1v1h-1zM11 21h1v1h-1zM112 73h1v1h-1zM84 11h1v1h-1zM87 16h1v1h-1zM73 81h1v1h-1zM6 91h1v1h-1zM105 70h1v1h-1zM22 35h1v1h-1zM85 91h1v1h-1zM38 16h1v1h-1zM43 94h1v1h-1zM15 32h1v1h-1zM1 97h1v1h-1zM18 37h1v1h-1zM119 89h1v1h-1zM17 78h1v1h-1zM77 92h1v1h-1zM80 97h1v1h-1zM10 38h1v1h-1zM128 30h1v1h-1zM73 94h1v1h-1zM31 97h1v1h-1zM130 76h1v1h-1zM107 92h1v1h-1zM79 30h1v1h-1zM24 94h1v1h-1zM65 95h1v1h-1zM68 100h1v1h-1zM40 38h1v1h-1zM58 92h1v1h-1zM77 105h1v1h-1zM61 97h1v1h-1zM74 36h1v1h-1zM10 51h1v1h-1zM51 52h1v1h-1zM109 30h1v1h-1zM54 94h1v1h-1zM128 43h1v1h-1zM114 108h1v1h-1zM31 110h1v1h-1zM130 89h1v1h-1zM5 57h1v1h-1zM63 35h1v1h-1zM40 51h1v1h-1zM116 46h1v1h-1zM0 100h1v1h-1zM74 49h1v1h-1zM19 113h1v1h-1zM13 39h1v1h-1zM51 65h1v1h-1zM67 46h1v1h-1zM34 98h1v1h-1zM72 124h1v1h-1zM70 51h1v1h-1zM56 116h1v1h-1zM28 54h1v1h-1zM69 55h1v1h-1zM14 119h1v1h-1zM102 3h1v1h-1zM49 113h1v1h-1zM123 62h1v1h-1zM7 116h1v1h-1zM125 108h1v1h-1zM39 68h1v1h-1zM23 60h1v1h-1zM14 11h1v1h-1zM13 52h1v1h-1zM99 55h1v1h-1zM44 119h1v1h-1zM32 65h1v1h-1zM16 57h1v1h-1zM35 70h1v1h-1zM53 124h1v1h-1zM111 65h1v1h-1zM50 55h1v1h-1zM69 68h1v1h-1zM8 58h1v1h-1zM127 9h1v1h-1zM113 111h1v1h-1zM27 71h1v1h-1zM11 63h1v1h-1zM85 12h1v1h-1zM2 14h1v1h-1zM103 66h1v1h-1zM120 6h1v1h-1zM78 9h1v1h-1zM25 119h1v1h-1zM99 68h1v1h-1zM118 81h1v1h-1zM15 74h1v1h-1zM18 79h1v1h-1zM105 4h1v1h-1zM91 69h1v1h-1zM110 82h1v1h-1zM8 71h1v1h-1zM127 22h1v1h-1zM11 76h1v1h-1zM30 89h1v1h-1zM126 26h1v1h-1zM87 71h1v1h-1zM45 74h1v1h-1zM119 23h1v1h-1zM17 12h1v1h-1zM3 77h1v1h-1zM112 20h1v1h-1zM98 85h1v1h-1zM54 15h1v1h-1zM73 28h1v1h-1zM18 92h1v1h-1zM31 31h1v1h-1zM91 82h1v1h-1zM110 95h1v1h-1zM94 87h1v1h-1zM33 77h1v1h-1zM66 25h1v1h-1zM107 26h1v1h-1zM1 44h1v1h-1zM87 84h1v1h-1zM45 87h1v1h-1zM86 88h1v1h-1zM119 36h1v1h-1zM22 103h1v1h-1zM61 31h1v1h-1zM80 44h1v1h-1zM19 34h1v1h-1zM79 85h1v1h-1zM82 90h1v1h-1zM116 88h1v1h-1zM88 26h1v1h-1zM33 90h1v1h-1zM107 39h1v1h-1zM52 103h1v1h-1zM93 104h1v1h-1zM46 29h1v1h-1zM51 107h1v1h-1zM49 34h1v1h-1zM68 47h1v1h-1zM67 88h1v1h-1zM26 50h1v1h-1zM58 39h1v1h-1zM70 93h1v1h-1zM89 106h1v1h-1zM42 31h1v1h-1zM19 47h1v1h-1zM5 112h1v1h-1zM63 90h1v1h-1zM123 104h1v1h-1zM21 93h1v1h-1zM114 55h1v1h-1zM81 107h1v1h-1zM34 32h1v1h-1zM53 45h1v1h-1zM37 37h1v1h-1zM116 101h1v1h-1zM14 53h1v1h-1zM129 40h1v1h-1zM74 104h1v1h-1zM5 4h1v1h-1zM32 107h1v1h-1zM49 47h1v1h-1zM90 48h1v1h-1zM67 101h1v1h-1zM125 42h1v1h-1zM39 2h1v1h-1zM9 96h1v1h-1zM83 45h1v1h-1zM102 58h1v1h-1zM47 122h1v1h-1zM60 61h1v1h-1zM44 53h1v1h-1zM104 104h1v1h-1zM123 117h1v1h-1zM81 120h1v1h-1zM34 45h1v1h-1zM97 64h1v1h-1zM69 2h1v1h-1zM14 66h1v1h-1zM27 5h1v1h-1zM30 10h1v1h-1zM16 112h1v1h-1zM90 61h1v1h-1zM35 125h1v1h-1zM76 126h1v1h-1zM122 13h1v1h-1zM20 2h1v1h-1zM6 67h1v1h-1zM9 109h1v1h-1zM83 58h1v1h-1zM50 110h1v1h-1zM69 123h1v1h-1zM27 126h1v1h-1zM25 53h1v1h-1zM99 2h1v1h-1zM104 117h1v1h-1zM57 5h1v1h-1zM117 56h1v1h-1zM15 8h1v1h-1zM106 126h1v1h-1zM18 13h1v1h-1zM50 2h1v1h-1zM36 67h1v1h-1zM96 118h1v1h-1zM8 5h1v1h-1zM13 120h1v1h-1zM112 62h1v1h-1zM57 126h1v1h-1zM84 0h1v1h-1zM29 64h1v1h-1zM48 77h1v1h-1zM122 26h1v1h-1zM106 18h1v1h-1zM45 8h1v1h-1zM8 126h1v1h-1zM25 66h1v1h-1zM66 67h1v1h-1zM38 5h1v1h-1zM98 19h1v1h-1zM84 121h1v1h-1zM43 83h1v1h-1zM1 86h1v1h-1zM18 26h1v1h-1zM17 67h1v1h-1zM55 93h1v1h-1zM8 18h1v1h-1zM94 21h1v1h-1zM52 24h1v1h-1zM112 75h1v1h-1zM84 13h1v1h-1zM128 19h1v1h-1zM64 34h1v1h-1zM3 24h1v1h-1zM121 16h1v1h-1zM66 80h1v1h-1zM126 94h1v1h-1zM79 19h1v1h-1zM98 32h1v1h-1zM82 24h1v1h-1zM101 37h1v1h-1zM40 27h1v1h-1zM119 91h1v1h-1zM17 80h1v1h-1zM61 86h1v1h-1zM10 40h1v1h-1zM109 19h1v1h-1zM73 96h1v1h-1zM70 27h1v1h-1zM3 37h1v1h-1zM89 40h1v1h-1zM130 78h1v1h-1zM47 43h1v1h-1zM126 107h1v1h-1zM65 97h1v1h-1zM68 102h1v1h-1zM21 27h1v1h-1zM40 40h1v1h-1zM26 105h1v1h-1zM100 91h1v1h-1zM77 107h1v1h-1zM61 99h1v1h-1zM80 112h1v1h-1zM19 102h1v1h-1zM114 110h1v1h-1zM67 35h1v1h-1zM12 99h1v1h-1zM53 100h1v1h-1zM56 105h1v1h-1zM130 91h1v1h-1zM9 30h1v1h-1zM5 59h1v1h-1zM104 38h1v1h-1zM68 115h1v1h-1zM62 41h1v1h-1zM42 99h1v1h-1zM83 100h1v1h-1zM19 115h1v1h-1zM60 116h1v1h-1zM32 54h1v1h-1zM51 67h1v1h-1zM16 46h1v1h-1zM35 59h1v1h-1zM95 110h1v1h-1zM92 41h1v1h-1zM37 105h1v1h-1zM111 54h1v1h-1zM9 43h1v1h-1zM69 57h1v1h-1zM14 121h1v1h-1zM129 108h1v1h-1zM60 8h1v1h-1zM27 60h1v1h-1zM30 65h1v1h-1zM90 116h1v1h-1zM48 119h1v1h-1zM122 68h1v1h-1zM23 62h1v1h-1zM83 113h1v1h-1zM36 1h1v1h-1zM118 70h1v1h-1zM90 8h1v1h-1zM76 73h1v1h-1zM117 111h1v1h-1zM78 119h1v1h-1zM124 6h1v1h-1zM69 70h1v1h-1zM27 73h1v1h-1zM11 65h1v1h-1zM2 16h1v1h-1zM84 55h1v1h-1zM122 81h1v1h-1zM120 8h1v1h-1zM87 60h1v1h-1zM23 75h1v1h-1zM17 1h1v1h-1zM99 70h1v1h-1zM112 9h1v1h-1zM57 73h1v1h-1zM29 11h1v1h-1zM59 119h1v1h-1zM18 81h1v1h-1zM105 6h1v1h-1zM50 70h1v1h-1zM94 76h1v1h-1zM11 78h1v1h-1zM24 17h1v1h-1zM43 30h1v1h-1zM84 68h1v1h-1zM1 33h1v1h-1zM45 76h1v1h-1zM64 89h1v1h-1zM17 14h1v1h-1zM58 15h1v1h-1zM3 79h1v1h-1zM79 74h1v1h-1zM112 22h1v1h-1zM18 94h1v1h-1zM130 12h1v1h-1zM88 15h1v1h-1zM52 92h1v1h-1zM65 31h1v1h-1zM1 46h1v1h-1zM100 25h1v1h-1zM58 28h1v1h-1zM89 95h1v1h-1zM47 98h1v1h-1zM121 84h1v1h-1zM19 36h1v1h-1zM21 82h1v1h-1zM95 31h1v1h-1zM40 95h1v1h-1zM12 33h1v1h-1zM130 25h1v1h-1zM116 90h1v1h-1zM88 28h1v1h-1zM33 92h1v1h-1zM74 93h1v1h-1zM107 41h1v1h-1zM65 44h1v1h-1zM109 87h1v1h-1zM128 100h1v1h-1zM7 39h1v1h-1zM67 90h1v1h-1zM86 103h1v1h-1zM125 31h1v1h-1zM70 95h1v1h-1zM89 108h1v1h-1zM83 34h1v1h-1zM28 98h1v1h-1zM19 49h1v1h-1zM60 50h1v1h-1zM104 93h1v1h-1zM40 108h1v1h-1zM72 60h1v1h-1zM14 55h1v1h-1zM74 106h1v1h-1zM93 119h1v1h-1zM113 34h1v1h-1zM5 6h1v1h-1zM51 122h1v1h-1zM49 49h1v1h-1zM35 114h1v1h-1zM7 52h1v1h-1zM39 4h1v1h-1zM70 108h1v1h-1zM9 98h1v1h-1zM28 111h1v1h-1zM102 60h1v1h-1zM60 63h1v1h-1zM2 58h1v1h-1zM62 109h1v1h-1zM20 112h1v1h-1zM37 52h1v1h-1zM97 66h1v1h-1zM69 4h1v1h-1zM14 68h1v1h-1zM113 47h1v1h-1zM27 7h1v1h-1zM16 114h1v1h-1zM62 1h1v1h-1zM29 53h1v1h-1zM111 122h1v1h-1zM23 9h1v1h-1zM69 125h1v1h-1zM108 53h1v1h-1zM127 66h1v1h-1zM25 55h1v1h-1zM57 7h1v1h-1zM59 53h1v1h-1zM92 1h1v1h-1zM97 79h1v1h-1zM36 69h1v1h-1zM110 18h1v1h-1zM27 20h1v1h-1zM38 115h1v1h-1zM29 66h1v1h-1zM103 15h1v1h-1zM48 79h1v1h-1zM6 82h1v1h-1zM4 9h1v1h-1zM45 10h1v1h-1zM64 23h1v1h-1zM105 61h1v1h-1zM124 74h1v1h-1zM59 66h1v1h-1zM91 18h1v1h-1zM36 82h1v1h-1zM75 10h1v1h-1zM80 88h1v1h-1zM121 126h1v1h-1zM112 77h1v1h-1zM87 20h1v1h-1zM73 85h1v1h-1zM45 23h1v1h-1zM31 88h1v1h-1zM107 83h1v1h-1zM79 21h1v1h-1zM24 85h1v1h-1zM98 34h1v1h-1zM40 29h1v1h-1zM17 82h1v1h-1zM77 96h1v1h-1zM75 23h1v1h-1zM116 24h1v1h-1zM33 26h1v1h-1zM52 39h1v1h-1zM10 42h1v1h-1zM109 21h1v1h-1zM86 37h1v1h-1zM31 101h1v1h-1zM89 42h1v1h-1zM47 45h1v1h-1zM107 96h1v1h-1zM46 86h1v1h-1zM79 34h1v1h-1zM65 99h1v1h-1zM63 26h1v1h-1zM49 91h1v1h-1zM40 42h1v1h-1zM81 43h1v1h-1zM74 40h1v1h-1zM19 104h1v1h-1zM93 53h1v1h-1zM35 48h1v1h-1zM109 34h1v1h-1zM70 42h1v1h-1zM56 107h1v1h-1zM88 96h1v1h-1zM46 99h1v1h-1zM104 40h1v1h-1zM123 53h1v1h-1zM68 117h1v1h-1zM81 56h1v1h-1zM26 120h1v1h-1zM125 99h1v1h-1zM23 51h1v1h-1zM42 101h1v1h-1zM102 115h1v1h-1zM14 2h1v1h-1zM118 59h1v1h-1zM95 112h1v1h-1zM97 121h1v1h-1zM50 46h1v1h-1zM14 123h1v1h-1zM129 110h1v1h-1zM44 2h1v1h-1zM85 3h1v1h-1zM71 105h1v1h-1zM30 67h1v1h-1zM62 56h1v1h-1zM106 62h1v1h-1zM6 124h1v1h-1zM4 51h1v1h-1zM41 118h1v1h-1zM127 121h1v1h-1zM13 56h1v1h-1zM44 123h1v1h-1zM16 61h1v1h-1zM57 62h1v1h-1zM15 65h1v1h-1zM34 115h1v1h-1zM6 16h1v1h-1zM37 120h1v1h-1zM78 121h1v1h-1zM50 59h1v1h-1zM69 72h1v1h-1zM108 0h1v1h-1zM127 13h1v1h-1zM66 3h1v1h-1zM11 67h1v1h-1zM85 16h1v1h-1zM30 80h1v1h-1zM2 18h1v1h-1zM43 19h1v1h-1zM87 62h1v1h-1zM59 0h1v1h-1zM78 13h1v1h-1zM105 116h1v1h-1zM22 81h1v1h-1zM108 121h1v1h-1zM99 72h1v1h-1zM38 62h1v1h-1zM57 75h1v1h-1zM115 16h1v1h-1zM54 6h1v1h-1zM73 19h1v1h-1zM31 22h1v1h-1zM17 124h1v1h-1zM110 86h1v1h-1zM108 13h1v1h-1zM66 16h1v1h-1zM11 80h1v1h-1zM128 76h1v1h-1zM45 78h1v1h-1zM119 27h1v1h-1zM17 16h1v1h-1zM22 94h1v1h-1zM121 73h1v1h-1zM79 76h1v1h-1zM98 89h1v1h-1zM82 81h1v1h-1zM40 84h1v1h-1zM12 22h1v1h-1zM31 35h1v1h-1zM75 78h1v1h-1zM88 17h1v1h-1zM33 81h1v1h-1zM107 30h1v1h-1zM126 43h1v1h-1zM93 95h1v1h-1zM128 89h1v1h-1zM26 41h1v1h-1zM100 27h1v1h-1zM42 22h1v1h-1zM47 100h1v1h-1zM80 48h1v1h-1zM121 86h1v1h-1zM0 25h1v1h-1zM82 94h1v1h-1zM123 95h1v1h-1zM56 41h1v1h-1zM116 92h1v1h-1zM33 94h1v1h-1zM93 108h1v1h-1zM46 33h1v1h-1zM32 98h1v1h-1zM51 111h1v1h-1zM68 51h1v1h-1zM67 92h1v1h-1zM26 54h1v1h-1zM42 35h1v1h-1zM28 100h1v1h-1zM104 95h1v1h-1zM51 3h1v1h-1zM53 49h1v1h-1zM39 114h1v1h-1zM37 41h1v1h-1zM56 54h1v1h-1zM116 105h1v1h-1zM74 108h1v1h-1zM113 36h1v1h-1zM32 111h1v1h-1zM118 114h1v1h-1zM51 124h1v1h-1zM90 52h1v1h-1zM7 54h1v1h-1zM48 55h1v1h-1zM81 3h1v1h-1zM92 98h1v1h-1zM83 49h1v1h-1zM28 113h1v1h-1zM41 52h1v1h-1zM25 44h1v1h-1zM117 47h1v1h-1zM34 49h1v1h-1zM23 119h1v1h-1zM97 68h1v1h-1zM96 109h1v1h-1zM55 71h1v1h-1zM103 4h1v1h-1zM48 68h1v1h-1zM111 124h1v1h-1zM105 50h1v1h-1zM64 12h1v1h-1zM22 15h1v1h-1zM127 68h1v1h-1zM44 70h1v1h-1zM85 71h1v1h-1zM57 9h1v1h-1zM117 60h1v1h-1zM103 125h1v1h-1zM87 117h1v1h-1zM18 17h1v1h-1zM59 55h1v1h-1zM50 6h1v1h-1zM91 7h1v1h-1zM36 71h1v1h-1zM96 122h1v1h-1zM55 84h1v1h-1zM84 4h1v1h-1zM103 17h1v1h-1zM87 9h1v1h-1zM106 22h1v1h-1zM6 84h1v1h-1zM73 74h1v1h-1zM105 63h1v1h-1zM108 68h1v1h-1zM66 71h1v1h-1zM24 74h1v1h-1zM82 15h1v1h-1zM101 28h1v1h-1zM59 68h1v1h-1zM18 30h1v1h-1zM119 82h1v1h-1zM17 71h1v1h-1zM33 15h1v1h-1zM52 28h1v1h-1zM54 74h1v1h-1zM128 23h1v1h-1zM73 87h1v1h-1zM86 26h1v1h-1zM31 90h1v1h-1zM130 69h1v1h-1zM66 84h1v1h-1zM107 85h1v1h-1zM126 98h1v1h-1zM79 23h1v1h-1zM101 41h1v1h-1zM68 93h1v1h-1zM116 26h1v1h-1zM61 90h1v1h-1zM19 93h1v1h-1zM10 44h1v1h-1zM54 87h1v1h-1zM86 39h1v1h-1zM130 82h1v1h-1zM28 34h1v1h-1zM47 47h1v1h-1zM107 98h1v1h-1zM46 88h1v1h-1zM65 101h1v1h-1zM49 93h1v1h-1zM123 42h1v1h-1zM7 96h1v1h-1zM81 45h1v1h-1zM42 90h1v1h-1zM102 104h1v1h-1zM0 93h1v1h-1zM74 42h1v1h-1zM60 107h1v1h-1zM13 32h1v1h-1zM16 37h1v1h-1zM67 39h1v1h-1zM26 1h1v1h-1zM72 117h1v1h-1zM111 45h1v1h-1zM69 48h1v1h-1zM14 112h1v1h-1zM129 99h1v1h-1zM46 101h1v1h-1zM49 106h1v1h-1zM90 107h1v1h-1zM7 109h1v1h-1zM26 122h1v1h-1zM20 48h1v1h-1zM125 101h1v1h-1zM23 53h1v1h-1zM83 104h1v1h-1zM96 43h1v1h-1zM55 5h1v1h-1zM2 115h1v1h-1zM117 102h1v1h-1zM76 64h1v1h-1zM48 2h1v1h-1zM97 123h1v1h-1zM9 47h1v1h-1zM69 61h1v1h-1zM14 125h1v1h-1zM55 126h1v1h-1zM129 112h1v1h-1zM113 104h1v1h-1zM30 69h1v1h-1zM90 120h1v1h-1zM2 7h1v1h-1zM103 59h1v1h-1zM20 61h1v1h-1zM83 117h1v1h-1zM124 118h1v1h-1zM96 56h1v1h-1zM55 18h1v1h-1zM112 0h1v1h-1zM117 115h1v1h-1zM76 77h1v1h-1zM29 2h1v1h-1zM6 18h1v1h-1zM92 58h1v1h-1zM78 123h1v1h-1zM59 110h1v1h-1zM18 72h1v1h-1zM124 10h1v1h-1zM91 62h1v1h-1zM94 67h1v1h-1zM85 18h1v1h-1zM30 82h1v1h-1zM43 21h1v1h-1zM115 126h1v1h-1zM100 3h1v1h-1zM4 66h1v1h-1zM45 67h1v1h-1zM77 19h1v1h-1zM108 123h1v1h-1zM22 83h1v1h-1zM121 62h1v1h-1zM66 126h1v1h-1zM25 125h1v1h-1zM38 64h1v1h-1zM112 13h1v1h-1zM57 77h1v1h-1zM15 80h1v1h-1zM31 24h1v1h-1zM91 75h1v1h-1zM75 67h1v1h-1zM107 19h1v1h-1zM24 21h1v1h-1zM1 37h1v1h-1zM87 77h1v1h-1zM100 16h1v1h-1zM86 81h1v1h-1zM58 19h1v1h-1zM22 96h1v1h-1zM80 37h1v1h-1zM19 27h1v1h-1zM82 83h1v1h-1zM101 96h1v1h-1zM54 21h1v1h-1zM40 86h1v1h-1zM88 19h1v1h-1zM52 96h1v1h-1zM49 27h1v1h-1zM68 40h1v1h-1zM128 91h1v1h-1zM67 81h1v1h-1zM47 102h1v1h-1zM79 91h1v1h-1zM82 96h1v1h-1zM21 86h1v1h-1zM114 48h1v1h-1zM12 37h1v1h-1zM72 51h1v1h-1zM56 43h1v1h-1zM14 46h1v1h-1zM88 32h1v1h-1zM74 97h1v1h-1zM93 110h1v1h-1zM46 35h1v1h-1zM51 113h1v1h-1zM49 40h1v1h-1zM9 89h1v1h-1zM47 115h1v1h-1zM44 46h1v1h-1zM21 99h1v1h-1zM62 100h1v1h-1zM97 57h1v1h-1zM113 38h1v1h-1zM32 113h1v1h-1zM51 126h1v1h-1zM30 3h1v1h-1zM7 56h1v1h-1zM111 113h1v1h-1zM69 116h1v1h-1zM41 54h1v1h-1zM30 124h1v1h-1zM76 11h1v1h-1zM62 113h1v1h-1zM103 114h1v1h-1zM120 54h1v1h-1zM4 108h1v1h-1zM37 56h1v1h-1zM69 8h1v1h-1zM110 9h1v1h-1zM96 111h1v1h-1zM27 11h1v1h-1zM99 116h1v1h-1zM11 3h1v1h-1zM30 16h1v1h-1zM90 67h1v1h-1zM57 119h1v1h-1zM29 57h1v1h-1zM92 113h1v1h-1zM45 1h1v1h-1zM108 57h1v1h-1zM127 70h1v1h-1zM99 8h1v1h-1zM43 76h1v1h-1zM15 14h1v1h-1zM87 119h1v1h-1zM59 57h1v1h-1zM18 19h1v1h-1zM17 60h1v1h-1zM91 9h1v1h-1zM96 124h1v1h-1zM8 11h1v1h-1zM11 16h1v1h-1zM112 68h1v1h-1zM84 6h1v1h-1zM10 20h1v1h-1zM73 76h1v1h-1zM31 79h1v1h-1zM22 30h1v1h-1zM121 9h1v1h-1zM126 87h1v1h-1zM38 11h1v1h-1zM43 89h1v1h-1zM101 30h1v1h-1zM1 92h1v1h-1zM59 70h1v1h-1zM91 22h1v1h-1zM80 92h1v1h-1zM33 17h1v1h-1zM10 33h1v1h-1zM115 86h1v1h-1zM73 89h1v1h-1zM67 15h1v1h-1zM12 79h1v1h-1zM86 28h1v1h-1zM89 33h1v1h-1zM88 74h1v1h-1zM107 87h1v1h-1zM24 89h1v1h-1zM65 90h1v1h-1zM68 95h1v1h-1zM21 20h1v1h-1zM40 33h1v1h-1zM26 98h1v1h-1zM100 84h1v1h-1zM58 87h1v1h-1zM42 79h1v1h-1zM61 92h1v1h-1zM80 105h1v1h-1zM0 82h1v1h-1zM74 31h1v1h-1zM12 92h1v1h-1zM86 41h1v1h-1zM72 106h1v1h-1zM89 46h1v1h-1zM47 49h1v1h-1zM88 87h1v1h-1zM46 90h1v1h-1zM104 31h1v1h-1zM49 95h1v1h-1zM68 108h1v1h-1zM42 92h1v1h-1zM102 106h1v1h-1zM0 95h1v1h-1zM19 108h1v1h-1zM60 109h1v1h-1zM51 60h1v1h-1zM35 52h1v1h-1zM95 103h1v1h-1zM34 93h1v1h-1zM53 106h1v1h-1zM72 119h1v1h-1zM69 50h1v1h-1zM14 114h1v1h-1zM129 101h1v1h-1zM113 93h1v1h-1zM62 47h1v1h-1zM81 60h1v1h-1zM83 106h1v1h-1zM102 119h1v1h-1zM96 45h1v1h-1zM41 109h1v1h-1zM60 122h1v1h-1zM99 50h1v1h-1zM44 114h1v1h-1zM57 53h1v1h-1zM2 117h1v1h-1zM117 104h1v1h-1zM92 47h1v1h-1zM37 111h1v1h-1zM111 60h1v1h-1zM50 50h1v1h-1zM129 114h1v1h-1zM127 4h1v1h-1zM27 66h1v1h-1zM113 106h1v1h-1zM11 58h1v1h-1zM90 122h1v1h-1zM29 112h1v1h-1zM20 63h1v1h-1zM4 55h1v1h-1zM78 4h1v1h-1zM124 120h1v1h-1zM36 7h1v1h-1zM55 20h1v1h-1zM99 63h1v1h-1zM18 74h1v1h-1zM78 125h1v1h-1zM50 63h1v1h-1zM110 77h1v1h-1zM11 71h1v1h-1zM126 21h1v1h-1zM112 123h1v1h-1zM24 10h1v1h-1zM29 125h1v1h-1zM1 26h1v1h-1zM59 4h1v1h-1zM100 5h1v1h-1zM119 18h1v1h-1zM64 82h1v1h-1zM121 64h1v1h-1zM15 82h1v1h-1zM101 85h1v1h-1zM54 10h1v1h-1zM73 23h1v1h-1zM12 13h1v1h-1zM31 26h1v1h-1zM130 5h1v1h-1zM107 21h1v1h-1zM109 67h1v1h-1zM68 29h1v1h-1zM128 80h1v1h-1zM3 85h1v1h-1zM130 126h1v1h-1zM22 98h1v1h-1zM80 39h1v1h-1zM79 80h1v1h-1zM130 18h1v1h-1zM33 85h1v1h-1zM74 86h1v1h-1zM46 24h1v1h-1zM65 37h1v1h-1zM10 101h1v1h-1zM51 102h1v1h-1zM49 29h1v1h-1zM109 80h1v1h-1zM68 42h1v1h-1zM7 32h1v1h-1zM26 45h1v1h-1zM42 26h1v1h-1zM61 39h1v1h-1zM123 99h1v1h-1zM21 88h1v1h-1zM95 37h1v1h-1zM81 102h1v1h-1zM34 27h1v1h-1zM53 40h1v1h-1zM72 53h1v1h-1zM14 48h1v1h-1zM129 35h1v1h-1zM74 99h1v1h-1zM46 37h1v1h-1zM32 102h1v1h-1zM90 43h1v1h-1zM67 96h1v1h-1zM125 37h1v1h-1zM70 101h1v1h-1zM9 91h1v1h-1zM28 104h1v1h-1zM102 53h1v1h-1zM0 42h1v1h-1zM60 56h1v1h-1zM44 48h1v1h-1zM123 112h1v1h-1zM2 51h1v1h-1zM62 102h1v1h-1zM81 115h1v1h-1zM34 40h1v1h-1zM23 110h1v1h-1zM113 40h1v1h-1zM16 107h1v1h-1zM90 56h1v1h-1zM35 120h1v1h-1zM48 59h1v1h-1zM6 62h1v1h-1zM23 2h1v1h-1zM124 54h1v1h-1zM69 118h1v1h-1zM41 56h1v1h-1zM127 59h1v1h-1zM27 121h1v1h-1zM2 64h1v1h-1zM117 51h1v1h-1zM103 116h1v1h-1zM15 3h1v1h-1zM120 56h1v1h-1zM20 118h1v1h-1zM4 110h1v1h-1zM8 0h1v1h-1zM27 13h1v1h-1zM11 5h1v1h-1zM30 18h1v1h-1zM71 56h1v1h-1zM57 121h1v1h-1zM115 62h1v1h-1zM15 124h1v1h-1zM4 2h1v1h-1zM45 3h1v1h-1zM64 16h1v1h-1zM108 59h1v1h-1zM8 121h1v1h-1zM38 0h1v1h-1zM98 14h1v1h-1zM84 116h1v1h-1zM101 19h1v1h-1zM59 59h1v1h-1zM78 72h1v1h-1zM119 73h1v1h-1zM77 76h1v1h-1zM94 16h1v1h-1zM52 19h1v1h-1zM38 121h1v1h-1zM84 8h1v1h-1zM115 75h1v1h-1zM54 65h1v1h-1zM128 14h1v1h-1zM73 78h1v1h-1zM3 19h1v1h-1zM89 22h1v1h-1zM107 76h1v1h-1zM126 89h1v1h-1zM43 91h1v1h-1zM101 32h1v1h-1zM1 94h1v1h-1zM100 73h1v1h-1zM119 86h1v1h-1zM17 75h1v1h-1zM58 76h1v1h-1zM75 16h1v1h-1zM33 19h1v1h-1zM19 84h1v1h-1zM93 33h1v1h-1zM54 78h1v1h-1zM114 92h1v1h-1zM130 73h1v1h-1zM107 89h1v1h-1zM46 79h1v1h-1zM68 97h1v1h-1zM40 35h1v1h-1zM100 86h1v1h-1zM42 81h1v1h-1zM74 33h1v1h-1zM93 46h1v1h-1zM32 36h1v1h-1zM51 49h1v1h-1zM109 27h1v1h-1zM67 30h1v1h-1zM12 94h1v1h-1zM53 95h1v1h-1zM111 36h1v1h-1zM56 100h1v1h-1zM130 86h1v1h-1zM14 103h1v1h-1zM46 92h1v1h-1zM65 105h1v1h-1zM123 46h1v1h-1zM21 35h1v1h-1zM62 36h1v1h-1zM7 100h1v1h-1zM42 94h1v1h-1zM83 95h1v1h-1zM102 108h1v1h-1zM13 36h1v1h-1zM44 103h1v1h-1zM16 41h1v1h-1zM53 108h1v1h-1zM92 36h1v1h-1zM56 113h1v1h-1zM97 114h1v1h-1zM9 38h1v1h-1zM14 116h1v1h-1zM129 103h1v1h-1zM113 95h1v1h-1zM27 55h1v1h-1zM30 60h1v1h-1zM71 98h1v1h-1zM104 46h1v1h-1zM62 49h1v1h-1zM103 50h1v1h-1zM7 113h1v1h-1zM20 52h1v1h-1zM13 49h1v1h-1zM99 52h1v1h-1zM44 116h1v1h-1zM57 55h1v1h-1zM76 68h1v1h-1zM120 111h1v1h-1zM6 9h1v1h-1zM37 113h1v1h-1zM78 114h1v1h-1zM50 52h1v1h-1zM69 65h1v1h-1zM110 66h1v1h-1zM8 55h1v1h-1zM127 6h1v1h-1zM11 60h1v1h-1zM30 73h1v1h-1zM90 124h1v1h-1zM84 50h1v1h-1zM122 76h1v1h-1zM105 109h1v1h-1zM64 71h1v1h-1zM25 116h1v1h-1zM99 65h1v1h-1zM66 117h1v1h-1zM29 6h1v1h-1zM15 71h1v1h-1zM105 1h1v1h-1zM17 117h1v1h-1zM110 79h1v1h-1zM108 6h1v1h-1zM94 71h1v1h-1zM66 9h1v1h-1zM11 73h1v1h-1zM85 22h1v1h-1zM52 74h1v1h-1zM112 125h1v1h-1zM1 28h1v1h-1zM128 69h1v1h-1zM119 20h1v1h-1zM17 9h1v1h-1zM77 23h1v1h-1zM121 66h1v1h-1zM80 28h1v1h-1zM38 68h1v1h-1zM79 69h1v1h-1zM115 22h1v1h-1zM82 74h1v1h-1zM101 87h1v1h-1zM54 12h1v1h-1zM73 25h1v1h-1zM91 79h1v1h-1zM130 7h1v1h-1zM107 23h1v1h-1zM65 26h1v1h-1zM10 90h1v1h-1zM109 69h1v1h-1zM58 23h1v1h-1zM89 90h1v1h-1zM42 15h1v1h-1zM47 93h1v1h-1zM19 31h1v1h-1zM54 25h1v1h-1zM56 34h1v1h-1zM116 85h1v1h-1zM88 23h1v1h-1zM33 87h1v1h-1zM74 88h1v1h-1zM65 39h1v1h-1zM10 103h1v1h-1zM51 104h1v1h-1zM49 31h1v1h-1zM109 82h1v1h-1zM68 44h1v1h-1zM7 34h1v1h-1zM67 85h1v1h-1zM26 47h1v1h-1zM70 90h1v1h-1zM28 93h1v1h-1zM0 31h1v1h-1zM19 44h1v1h-1zM5 109h1v1h-1zM63 87h1v1h-1zM34 29h1v1h-1zM53 42h1v1h-1zM56 47h1v1h-1zM116 98h1v1h-1zM14 50h1v1h-1zM129 37h1v1h-1zM74 101h1v1h-1zM13 91h1v1h-1zM46 39h1v1h-1zM32 104h1v1h-1zM7 47h1v1h-1zM48 48h1v1h-1zM125 39h1v1h-1zM102 55h1v1h-1zM5 122h1v1h-1zM117 40h1v1h-1zM122 118h1v1h-1zM20 107h1v1h-1zM23 112h1v1h-1zM97 61h1v1h-1zM55 64h1v1h-1zM27 2h1v1h-1zM16 109h1v1h-1zM48 61h1v1h-1zM106 2h1v1h-1zM6 64h1v1h-1zM111 117h1v1h-1zM105 43h1v1h-1zM64 5h1v1h-1zM124 56h1v1h-1zM127 61h1v1h-1zM25 50h1v1h-1zM44 63h1v1h-1zM2 66h1v1h-1zM76 15h1v1h-1zM4 112h1v1h-1zM64 126h1v1h-1zM97 74h1v1h-1zM17 51h1v1h-1zM96 115h1v1h-1zM38 110h1v1h-1zM112 59h1v1h-1zM57 123h1v1h-1zM87 2h1v1h-1zM106 15h1v1h-1zM6 77h1v1h-1zM73 67h1v1h-1zM64 18h1v1h-1zM105 56h1v1h-1zM3 8h1v1h-1zM108 61h1v1h-1zM8 123h1v1h-1zM22 21h1v1h-1zM66 64h1v1h-1zM85 77h1v1h-1zM126 78h1v1h-1zM38 2h1v1h-1zM24 67h1v1h-1zM98 16h1v1h-1zM43 80h1v1h-1zM84 118h1v1h-1zM15 18h1v1h-1zM4 125h1v1h-1zM45 126h1v1h-1zM17 64h1v1h-1zM94 18h1v1h-1zM121 121h1v1h-1zM33 8h1v1h-1zM52 21h1v1h-1zM115 77h1v1h-1zM109 3h1v1h-1zM54 67h1v1h-1zM89 24h1v1h-1zM66 77h1v1h-1zM107 78h1v1h-1zM68 86h1v1h-1zM21 11h1v1h-1zM119 88h1v1h-1zM116 19h1v1h-1zM74 22h1v1h-1zM51 38h1v1h-1zM109 16h1v1h-1zM54 80h1v1h-1zM95 81h1v1h-1zM128 29h1v1h-1zM72 97h1v1h-1zM89 37h1v1h-1zM88 78h1v1h-1zM65 94h1v1h-1zM104 22h1v1h-1zM123 35h1v1h-1zM40 37h1v1h-1zM81 38h1v1h-1zM26 102h1v1h-1zM102 97h1v1h-1zM0 86h1v1h-1zM74 35h1v1h-1zM93 48h1v1h-1zM60 100h1v1h-1zM13 25h1v1h-1zM51 51h1v1h-1zM35 43h1v1h-1zM95 94h1v1h-1zM67 32h1v1h-1zM53 97h1v1h-1zM37 89h1v1h-1zM56 102h1v1h-1zM88 91h1v1h-1zM129 92h1v1h-1zM5 56h1v1h-1zM49 99h1v1h-1zM90 100h1v1h-1zM7 102h1v1h-1zM81 51h1v1h-1zM26 115h1v1h-1zM20 41h1v1h-1zM125 94h1v1h-1zM23 46h1v1h-1zM96 36h1v1h-1zM41 100h1v1h-1zM60 113h1v1h-1zM44 105h1v1h-1zM32 51h1v1h-1zM118 54h1v1h-1zM16 43h1v1h-1zM76 57h1v1h-1zM34 97h1v1h-1zM120 100h1v1h-1zM92 38h1v1h-1zM97 116h1v1h-1zM50 41h1v1h-1zM14 118h1v1h-1zM55 119h1v1h-1zM30 62h1v1h-1zM2 0h1v1h-1zM103 52h1v1h-1zM48 116h1v1h-1zM122 65h1v1h-1zM6 119h1v1h-1zM4 46h1v1h-1zM23 59h1v1h-1zM97 8h1v1h-1zM127 116h1v1h-1zM99 54h1v1h-1zM15 60h1v1h-1zM18 65h1v1h-1zM92 51h1v1h-1zM124 3h1v1h-1zM127 8h1v1h-1zM27 70h1v1h-1zM112 114h1v1h-1zM84 52h1v1h-1zM29 116h1v1h-1zM103 65h1v1h-1zM1 17h1v1h-1zM124 124h1v1h-1zM36 11h1v1h-1zM22 76h1v1h-1zM80 17h1v1h-1zM57 70h1v1h-1zM24 122h1v1h-1zM98 71h1v1h-1zM17 119h1v1h-1zM11 75h1v1h-1zM10 79h1v1h-1zM43 27h1v1h-1zM84 65h1v1h-1zM1 30h1v1h-1zM100 9h1v1h-1zM105 124h1v1h-1zM64 86h1v1h-1zM17 11h1v1h-1zM58 12h1v1h-1zM121 68h1v1h-1zM73 27h1v1h-1zM40 79h1v1h-1zM130 9h1v1h-1zM88 12h1v1h-1zM93 90h1v1h-1zM46 15h1v1h-1zM65 28h1v1h-1zM10 92h1v1h-1zM68 33h1v1h-1zM128 84h1v1h-1zM26 36h1v1h-1zM86 87h1v1h-1zM58 25h1v1h-1zM70 79h1v1h-1zM47 95h1v1h-1zM79 84h1v1h-1zM82 89h1v1h-1zM123 90h1v1h-1zM40 92h1v1h-1zM114 41h1v1h-1zM72 44h1v1h-1zM116 87h1v1h-1zM88 25h1v1h-1zM33 89h1v1h-1zM74 90h1v1h-1zM129 26h1v1h-1zM93 103h1v1h-1zM32 93h1v1h-1zM51 106h1v1h-1zM109 84h1v1h-1zM68 46h1v1h-1zM70 92h1v1h-1zM89 105h1v1h-1zM60 47h1v1h-1zM5 111h1v1h-1zM44 39h1v1h-1zM62 93h1v1h-1zM34 31h1v1h-1zM37 36h1v1h-1zM14 52h1v1h-1zM32 106h1v1h-1zM118 109h1v1h-1zM16 98h1v1h-1zM90 47h1v1h-1zM7 49h1v1h-1zM92 93h1v1h-1zM111 106h1v1h-1zM9 95h1v1h-1zM83 44h1v1h-1zM69 109h1v1h-1zM41 47h1v1h-1zM60 60h1v1h-1zM44 52h1v1h-1zM104 103h1v1h-1zM30 117h1v1h-1zM117 42h1v1h-1zM76 4h1v1h-1zM81 119h1v1h-1zM120 47h1v1h-1zM78 50h1v1h-1zM110 2h1v1h-1zM96 104h1v1h-1zM99 109h1v1h-1zM118 122h1v1h-1zM29 50h1v1h-1zM48 63h1v1h-1zM106 4h1v1h-1zM111 119h1v1h-1zM105 45h1v1h-1zM50 109h1v1h-1zM69 122h1v1h-1zM27 125h1v1h-1zM25 52h1v1h-1zM85 66h1v1h-1zM57 4h1v1h-1zM98 5h1v1h-1zM2 68h1v1h-1zM43 69h1v1h-1zM15 7h1v1h-1zM1 72h1v1h-1zM59 50h1v1h-1zM4 114h1v1h-1zM18 12h1v1h-1zM119 64h1v1h-1zM8 4h1v1h-1zM29 63h1v1h-1zM87 4h1v1h-1zM128 5h1v1h-1zM105 58h1v1h-1zM64 20h1v1h-1zM91 123h1v1h-1zM66 66h1v1h-1zM85 79h1v1h-1zM126 80h1v1h-1zM43 82h1v1h-1zM84 120h1v1h-1zM87 125h1v1h-1zM1 85h1v1h-1zM100 64h1v1h-1zM17 66h1v1h-1zM91 15h1v1h-1zM80 85h1v1h-1zM52 23h1v1h-1zM10 26h1v1h-1zM54 69h1v1h-1zM73 82h1v1h-1zM31 85h1v1h-1zM47 29h1v1h-1zM126 93h1v1h-1zM79 18h1v1h-1zM24 82h1v1h-1zM65 83h1v1h-1zM63 10h1v1h-1zM82 23h1v1h-1zM123 24h1v1h-1zM40 26h1v1h-1zM42 72h1v1h-1zM80 98h1v1h-1zM0 75h1v1h-1zM93 37h1v1h-1zM10 39h1v1h-1zM54 82h1v1h-1zM95 83h1v1h-1zM86 34h1v1h-1zM72 99h1v1h-1zM130 77h1v1h-1zM56 91h1v1h-1zM28 29h1v1h-1zM88 80h1v1h-1zM47 42h1v1h-1zM107 93h1v1h-1zM46 83h1v1h-1zM104 24h1v1h-1zM49 88h1v1h-1zM123 37h1v1h-1zM62 27h1v1h-1zM7 91h1v1h-1zM81 40h1v1h-1zM26 104h1v1h-1zM39 43h1v1h-1zM83 86h1v1h-1zM102 99h1v1h-1zM0 88h1v1h-1zM74 37h1v1h-1zM19 101h1v1h-1zM32 40h1v1h-1zM51 53h1v1h-1zM34 86h1v1h-1zM53 99h1v1h-1zM111 40h1v1h-1zM9 29h1v1h-1zM28 42h1v1h-1zM62 40h1v1h-1zM7 104h1v1h-1zM23 48h1v1h-1zM83 99h1v1h-1zM102 112h1v1h-1zM55 0h1v1h-1zM96 38h1v1h-1zM41 102h1v1h-1zM25 94h1v1h-1zM13 40h1v1h-1zM118 56h1v1h-1zM35 58h1v1h-1zM69 56h1v1h-1zM55 121h1v1h-1zM8 46h1v1h-1zM113 99h1v1h-1zM11 51h1v1h-1zM2 2h1v1h-1zM84 41h1v1h-1zM29 105h1v1h-1zM106 59h1v1h-1zM64 62h1v1h-1zM105 100h1v1h-1zM55 13h1v1h-1zM41 115h1v1h-1zM2 123h1v1h-1zM117 110h1v1h-1zM76 72h1v1h-1zM15 62h1v1h-1zM73 3h1v1h-1zM6 13h1v1h-1zM17 108h1v1h-1zM91 57h1v1h-1zM124 5h1v1h-1zM36 121h1v1h-1zM110 70h1v1h-1zM66 0h1v1h-1zM85 13h1v1h-1zM24 3h1v1h-1zM29 118h1v1h-1zM115 121h1v1h-1zM1 19h1v1h-1zM45 62h1v1h-1zM64 75h1v1h-1zM38 59h1v1h-1zM57 72h1v1h-1zM59 118h1v1h-1zM17 121h1v1h-1zM75 62h1v1h-1zM66 13h1v1h-1zM107 14h1v1h-1zM126 27h1v1h-1zM24 16h1v1h-1zM10 81h1v1h-1zM109 60h1v1h-1zM1 32h1v1h-1zM128 73h1v1h-1zM45 75h1v1h-1zM89 81h1v1h-1zM42 6h1v1h-1zM61 19h1v1h-1zM80 32h1v1h-1zM121 70h1v1h-1zM98 86h1v1h-1zM63 65h1v1h-1zM82 78h1v1h-1zM54 16h1v1h-1zM12 19h1v1h-1zM31 32h1v1h-1zM116 76h1v1h-1zM107 27h1v1h-1zM52 91h1v1h-1zM65 30h1v1h-1zM10 94h1v1h-1zM51 95h1v1h-1zM49 22h1v1h-1zM68 35h1v1h-1zM7 25h1v1h-1zM86 89h1v1h-1zM58 27h1v1h-1zM89 94h1v1h-1zM61 32h1v1h-1zM28 84h1v1h-1zM102 33h1v1h-1zM19 35h1v1h-1zM5 100h1v1h-1zM63 78h1v1h-1zM82 91h1v1h-1zM123 92h1v1h-1zM21 81h1v1h-1zM95 30h1v1h-1zM40 94h1v1h-1zM34 20h1v1h-1zM116 89h1v1h-1zM88 27h1v1h-1zM14 41h1v1h-1zM93 105h1v1h-1zM46 30h1v1h-1zM49 35h1v1h-1zM35 100h1v1h-1zM26 51h1v1h-1zM125 30h1v1h-1zM70 94h1v1h-1zM83 33h1v1h-1zM28 97h1v1h-1zM117 31h1v1h-1zM81 108h1v1h-1zM120 36h1v1h-1zM53 46h1v1h-1zM37 38h1v1h-1zM23 103h1v1h-1zM56 51h1v1h-1zM14 54h1v1h-1zM129 41h1v1h-1zM113 33h1v1h-1zM32 108h1v1h-1zM111 108h1v1h-1zM83 46h1v1h-1zM69 111h1v1h-1zM25 41h1v1h-1zM118 3h1v1h-1zM85 55h1v1h-1zM2 57h1v1h-1zM76 6h1v1h-1zM20 111h1v1h-1zM18 1h1v1h-1zM97 65h1v1h-1zM55 68h1v1h-1zM27 6h1v1h-1zM99 111h1v1h-1zM112 50h1v1h-1zM57 114h1v1h-1zM16 113h1v1h-1zM106 6h1v1h-1zM6 68h1v1h-1zM92 108h1v1h-1zM105 47h1v1h-1zM64 9h1v1h-1zM124 60h1v1h-1zM69 124h1v1h-1zM50 111h1v1h-1zM108 52h1v1h-1zM85 68h1v1h-1zM24 58h1v1h-1zM43 71h1v1h-1zM84 109h1v1h-1zM15 9h1v1h-1zM1 74h1v1h-1zM87 114h1v1h-1zM18 14h1v1h-1zM119 66h1v1h-1zM91 4h1v1h-1zM110 17h1v1h-1zM96 119h1v1h-1zM94 9h1v1h-1zM99 124h1v1h-1zM52 12h1v1h-1zM38 114h1v1h-1zM10 15h1v1h-1zM84 1h1v1h-1zM115 68h1v1h-1zM87 6h1v1h-1zM73 71h1v1h-1zM105 60h1v1h-1zM91 125h1v1h-1zM108 65h1v1h-1zM79 7h1v1h-1zM24 71h1v1h-1zM98 20h1v1h-1zM84 122h1v1h-1zM82 12h1v1h-1zM100 66h1v1h-1zM58 69h1v1h-1zM75 9h1v1h-1zM33 12h1v1h-1zM19 77h1v1h-1zM128 20h1v1h-1zM73 84h1v1h-1zM114 85h1v1h-1zM67 10h1v1h-1zM86 23h1v1h-1zM31 87h1v1h-1zM72 88h1v1h-1zM130 66h1v1h-1zM89 28h1v1h-1zM126 95h1v1h-1zM79 20h1v1h-1zM63 12h1v1h-1zM21 15h1v1h-1zM40 28h1v1h-1zM100 79h1v1h-1zM116 23h1v1h-1zM74 26h1v1h-1zM93 39h1v1h-1zM32 29h1v1h-1zM35 34h1v1h-1zM95 85h1v1h-1zM53 88h1v1h-1zM56 93h1v1h-1zM9 18h1v1h-1zM5 47h1v1h-1zM65 98h1v1h-1zM123 39h1v1h-1zM62 29h1v1h-1zM7 93h1v1h-1zM26 106h1v1h-1zM74 39h1v1h-1zM60 104h1v1h-1zM95 98h1v1h-1zM34 88h1v1h-1zM53 101h1v1h-1zM37 93h1v1h-1zM14 109h1v1h-1zM129 96h1v1h-1zM113 88h1v1h-1zM30 53h1v1h-1zM90 104h1v1h-1zM62 42h1v1h-1zM7 106h1v1h-1zM125 98h1v1h-1zM4 37h1v1h-1zM23 50h1v1h-1zM127 107h1v1h-1zM60 117h1v1h-1zM25 96h1v1h-1zM118 58h1v1h-1zM57 48h1v1h-1zM2 112h1v1h-1zM120 104h1v1h-1zM92 42h1v1h-1zM113 101h1v1h-1zM85 2h1v1h-1zM71 104h1v1h-1zM90 117h1v1h-1zM2 4h1v1h-1zM103 56h1v1h-1zM48 120h1v1h-1zM4 50h1v1h-1zM64 64h1v1h-1zM36 2h1v1h-1zM22 67h1v1h-1zM99 58h1v1h-1zM85 123h1v1h-1zM120 117h1v1h-1zM73 5h1v1h-1zM59 107h1v1h-1zM78 120h1v1h-1zM66 2h1v1h-1zM11 66h1v1h-1zM85 15h1v1h-1zM126 16h1v1h-1zM29 120h1v1h-1zM1 21h1v1h-1zM73 126h1v1h-1zM100 0h1v1h-1zM77 16h1v1h-1zM22 80h1v1h-1zM38 61h1v1h-1zM112 10h1v1h-1zM82 67h1v1h-1zM18 82h1v1h-1zM100 121h1v1h-1zM12 8h1v1h-1zM130 0h1v1h-1zM94 77h1v1h-1zM88 3h1v1h-1zM107 16h1v1h-1zM24 18h1v1h-1zM65 19h1v1h-1zM10 83h1v1h-1zM68 24h1v1h-1zM54 126h1v1h-1zM128 75h1v1h-1zM45 77h1v1h-1zM89 83h1v1h-1zM130 121h1v1h-1zM47 86h1v1h-1zM79 75h1v1h-1zM54 18h1v1h-1zM114 32h1v1h-1zM72 35h1v1h-1zM130 13h1v1h-1zM74 81h1v1h-1zM107 29h1v1h-1zM46 19h1v1h-1zM65 32h1v1h-1zM51 97h1v1h-1zM128 88h1v1h-1zM67 78h1v1h-1zM28 86h1v1h-1zM47 99h1v1h-1zM63 80h1v1h-1zM81 97h1v1h-1zM34 22h1v1h-1zM39 100h1v1h-1zM14 43h1v1h-1zM93 107h1v1h-1zM13 84h1v1h-1zM32 97h1v1h-1zM51 110h1v1h-1zM16 89h1v1h-1zM90 38h1v1h-1zM7 40h1v1h-1zM70 96h1v1h-1zM69 100h1v1h-1zM44 43h1v1h-1zM104 94h1v1h-1zM2 46h1v1h-1zM117 33h1v1h-1zM81 110h1v1h-1zM122 111h1v1h-1zM34 35h1v1h-1zM20 100h1v1h-1zM39 113h1v1h-1zM96 95h1v1h-1zM113 35h1v1h-1zM32 110h1v1h-1zM118 113h1v1h-1zM35 115h1v1h-1zM48 54h1v1h-1zM92 97h1v1h-1zM124 49h1v1h-1zM8 103h1v1h-1zM11 108h1v1h-1zM76 8h1v1h-1zM20 113h1v1h-1zM18 3h1v1h-1zM97 67h1v1h-1zM17 44h1v1h-1zM36 57h1v1h-1zM55 70h1v1h-1zM99 113h1v1h-1zM103 3h1v1h-1zM73 60h1v1h-1zM6 70h1v1h-1zM3 1h1v1h-1zM22 14h1v1h-1zM108 54h1v1h-1zM127 67h1v1h-1zM11 121h1v1h-1zM126 71h1v1h-1zM24 60h1v1h-1zM84 111h1v1h-1zM103 124h1v1h-1zM15 11h1v1h-1zM87 116h1v1h-1zM100 55h1v1h-1zM45 119h1v1h-1zM119 68h1v1h-1zM91 6h1v1h-1zM121 114h1v1h-1zM52 14h1v1h-1zM73 73h1v1h-1zM86 12h1v1h-1zM22 27h1v1h-1zM121 6h1v1h-1zM33 122h1v1h-1zM66 70h1v1h-1zM126 84h1v1h-1zM24 73h1v1h-1zM98 22h1v1h-1zM82 14h1v1h-1zM40 17h1v1h-1zM100 68h1v1h-1zM58 71h1v1h-1zM77 84h1v1h-1zM75 11h1v1h-1zM116 12h1v1h-1zM33 14h1v1h-1zM19 79h1v1h-1zM93 28h1v1h-1zM128 22h1v1h-1zM114 87h1v1h-1zM86 25h1v1h-1zM72 90h1v1h-1zM70 17h1v1h-1zM28 20h1v1h-1zM88 71h1v1h-1zM47 33h1v1h-1zM65 87h1v1h-1zM49 79h1v1h-1zM68 92h1v1h-1zM21 17h1v1h-1zM81 31h1v1h-1zM125 74h1v1h-1zM42 76h1v1h-1zM61 89h1v1h-1zM102 90h1v1h-1zM93 41h1v1h-1zM51 44h1v1h-1zM95 87h1v1h-1zM114 100h1v1h-1zM111 31h1v1h-1zM56 95h1v1h-1zM9 20h1v1h-1zM88 84h1v1h-1zM129 85h1v1h-1zM46 87h1v1h-1zM49 92h1v1h-1zM90 93h1v1h-1zM123 41h1v1h-1zM21 30h1v1h-1zM7 95h1v1h-1zM81 44h1v1h-1zM125 87h1v1h-1zM83 90h1v1h-1zM102 103h1v1h-1zM13 31h1v1h-1zM44 98h1v1h-1zM16 36h1v1h-1zM117 88h1v1h-1zM76 50h1v1h-1zM120 93h1v1h-1zM111 44h1v1h-1zM56 108h1v1h-1zM9 33h1v1h-1zM113 90h1v1h-1zM27 50h1v1h-1zM90 106h1v1h-1zM20 47h1v1h-1zM106 50h1v1h-1zM39 60h1v1h-1zM4 39h1v1h-1zM83 103h1v1h-1zM124 104h1v1h-1zM41 106h1v1h-1zM13 44h1v1h-1zM25 98h1v1h-1zM2 114h1v1h-1zM117 101h1v1h-1zM120 106h1v1h-1zM6 4h1v1h-1zM50 47h1v1h-1zM55 125h1v1h-1zM27 63h1v1h-1zM11 55h1v1h-1zM85 4h1v1h-1zM71 106h1v1h-1zM29 109h1v1h-1zM103 58h1v1h-1zM119 2h1v1h-1zM64 66h1v1h-1zM80 10h1v1h-1zM66 112h1v1h-1zM57 63h1v1h-1zM98 64h1v1h-1zM115 4h1v1h-1zM73 7h1v1h-1zM78 122h1v1h-1zM31 10h1v1h-1zM91 61h1v1h-1zM66 4h1v1h-1zM52 69h1v1h-1zM126 18h1v1h-1zM24 7h1v1h-1zM10 72h1v1h-1zM115 125h1v1h-1zM128 64h1v1h-1zM119 15h1v1h-1zM105 117h1v1h-1zM17 4h1v1h-1zM3 69h1v1h-1zM77 18h1v1h-1zM19 13h1v1h-1zM79 64h1v1h-1zM98 77h1v1h-1zM54 7h1v1h-1zM73 20h1v1h-1zM40 72h1v1h-1zM17 125h1v1h-1zM91 74h1v1h-1zM130 2h1v1h-1zM75 66h1v1h-1zM94 79h1v1h-1zM88 5h1v1h-1zM52 82h1v1h-1zM46 8h1v1h-1zM65 21h1v1h-1zM10 85h1v1h-1zM109 64h1v1h-1zM67 67h1v1h-1zM86 80h1v1h-1zM70 72h1v1h-1zM130 123h1v1h-1zM61 23h1v1h-1zM88 126h1v1h-1zM79 77h1v1h-1zM82 82h1v1h-1zM123 83h1v1h-1zM21 72h1v1h-1zM95 21h1v1h-1zM40 85h1v1h-1zM72 37h1v1h-1zM116 80h1v1h-1zM74 83h1v1h-1zM46 21h1v1h-1zM65 34h1v1h-1zM35 91h1v1h-1zM68 39h1v1h-1zM67 80h1v1h-1zM86 93h1v1h-1zM89 98h1v1h-1zM9 75h1v1h-1zM102 37h1v1h-1zM47 101h1v1h-1zM60 40h1v1h-1zM104 83h1v1h-1zM21 85h1v1h-1zM81 99h1v1h-1zM53 37h1v1h-1zM37 29h1v1h-1zM97 43h1v1h-1zM129 32h1v1h-1zM74 96h1v1h-1zM113 24h1v1h-1zM13 86h1v1h-1zM118 102h1v1h-1zM16 91h1v1h-1zM90 40h1v1h-1zM48 43h1v1h-1zM83 37h1v1h-1zM60 53h1v1h-1zM44 45h1v1h-1zM104 96h1v1h-1zM2 48h1v1h-1zM62 99h1v1h-1zM39 115h1v1h-1zM37 42h1v1h-1zM23 107h1v1h-1zM97 56h1v1h-1zM36 46h1v1h-1zM99 102h1v1h-1zM76 118h1v1h-1zM6 59h1v1h-1zM92 99h1v1h-1zM111 112h1v1h-1zM105 38h1v1h-1zM50 102h1v1h-1zM124 51h1v1h-1zM69 115h1v1h-1zM22 3h1v1h-1zM8 105h1v1h-1zM127 56h1v1h-1zM25 45h1v1h-1zM2 61h1v1h-1zM84 100h1v1h-1zM15 0h1v1h-1zM120 53h1v1h-1zM106 118h1v1h-1zM78 56h1v1h-1zM64 121h1v1h-1zM110 8h1v1h-1zM55 72h1v1h-1zM99 115h1v1h-1zM11 2h1v1h-1zM29 56h1v1h-1zM15 121h1v1h-1zM73 62h1v1h-1zM105 51h1v1h-1zM91 116h1v1h-1zM3 3h1v1h-1zM94 121h1v1h-1zM85 72h1v1h-1zM24 62h1v1h-1zM98 11h1v1h-1zM87 118h1v1h-1zM1 78h1v1h-1zM45 121h1v1h-1zM119 70h1v1h-1zM91 8h1v1h-1zM3 124h1v1h-1zM75 0h1v1h-1zM94 13h1v1h-1zM38 118h1v1h-1zM112 67h1v1h-1zM82 124h1v1h-1zM54 62h1v1h-1zM128 11h1v1h-1zM73 75h1v1h-1zM114 76h1v1h-1zM12 65h1v1h-1zM86 14h1v1h-1zM31 78h1v1h-1zM89 19h1v1h-1zM75 121h1v1h-1zM130 57h1v1h-1zM33 124h1v1h-1zM79 11h1v1h-1zM24 75h1v1h-1zM65 76h1v1h-1zM63 3h1v1h-1zM109 119h1v1h-1zM1 91h1v1h-1zM21 6h1v1h-1zM40 19h1v1h-1zM77 86h1v1h-1zM42 65h1v1h-1zM116 14h1v1h-1zM80 91h1v1h-1zM33 16h1v1h-1zM93 30h1v1h-1zM54 75h1v1h-1zM95 76h1v1h-1zM114 89h1v1h-1zM86 27h1v1h-1zM72 92h1v1h-1zM89 32h1v1h-1zM28 22h1v1h-1zM107 86h1v1h-1zM46 76h1v1h-1zM65 89h1v1h-1zM104 17h1v1h-1zM49 81h1v1h-1zM68 94h1v1h-1zM40 32h1v1h-1zM39 36h1v1h-1zM116 27h1v1h-1zM19 94h1v1h-1zM93 43h1v1h-1zM35 38h1v1h-1zM34 79h1v1h-1zM53 92h1v1h-1zM70 32h1v1h-1zM129 87h1v1h-1zM46 89h1v1h-1zM5 51h1v1h-1zM90 95h1v1h-1zM26 110h1v1h-1zM20 36h1v1h-1zM83 92h1v1h-1zM102 105h1v1h-1zM44 100h1v1h-1zM32 46h1v1h-1zM16 38h1v1h-1zM117 90h1v1h-1zM92 33h1v1h-1zM9 35h1v1h-1zM69 49h1v1h-1zM129 100h1v1h-1zM11 44h1v1h-1zM90 108h1v1h-1zM62 46h1v1h-1zM48 111h1v1h-1zM122 60h1v1h-1zM20 49h1v1h-1zM106 52h1v1h-1zM23 54h1v1h-1zM64 55h1v1h-1zM97 3h1v1h-1zM25 100h1v1h-1zM85 114h1v1h-1zM117 103h1v1h-1zM76 65h1v1h-1zM120 108h1v1h-1zM6 6h1v1h-1zM59 98h1v1h-1zM18 60h1v1h-1zM50 49h1v1h-1zM91 50h1v1h-1zM110 63h1v1h-1zM8 52h1v1h-1zM94 55h1v1h-1zM71 108h1v1h-1zM112 109h1v1h-1zM29 111h1v1h-1zM103 60h1v1h-1zM1 12h1v1h-1zM106 65h1v1h-1zM64 68h1v1h-1zM124 119h1v1h-1zM36 6h1v1h-1zM108 111h1v1h-1zM121 50h1v1h-1zM15 68h1v1h-1zM73 9h1v1h-1zM18 73h1v1h-1zM59 111h1v1h-1zM119 125h1v1h-1zM17 114h1v1h-1zM91 63h1v1h-1zM110 76h1v1h-1zM75 55h1v1h-1zM94 68h1v1h-1zM52 71h1v1h-1zM84 60h1v1h-1zM68 15h1v1h-1zM87 65h1v1h-1zM119 17h1v1h-1zM130 112h1v1h-1zM77 20h1v1h-1zM22 84h1v1h-1zM89 74h1v1h-1zM61 12h1v1h-1zM80 25h1v1h-1zM82 71h1v1h-1zM101 84h1v1h-1zM40 74h1v1h-1zM114 23h1v1h-1zM12 12h1v1h-1zM31 25h1v1h-1zM72 26h1v1h-1zM75 68h1v1h-1zM88 7h1v1h-1zM33 71h1v1h-1zM107 20h1v1h-1zM46 10h1v1h-1zM65 23h1v1h-1zM109 66h1v1h-1zM68 28h1v1h-1zM86 82h1v1h-1zM58 20h1v1h-1zM130 125h1v1h-1zM61 25h1v1h-1zM47 90h1v1h-1zM79 79h1v1h-1zM5 93h1v1h-1zM123 85h1v1h-1zM40 87h1v1h-1zM34 13h1v1h-1zM72 39h1v1h-1zM116 82h1v1h-1zM93 98h1v1h-1zM51 101h1v1h-1zM35 93h1v1h-1zM109 79h1v1h-1zM7 31h1v1h-1zM67 82h1v1h-1zM26 44h1v1h-1zM47 103h1v1h-1zM60 42h1v1h-1zM44 34h1v1h-1zM104 85h1v1h-1zM117 24h1v1h-1zM120 29h1v1h-1zM53 39h1v1h-1zM37 31h1v1h-1zM14 47h1v1h-1zM74 98h1v1h-1z" fill="#000"/></pattern><linearGradient id="fade" gradientUnits="userSpaceOnUse" x1="2040" y1="980" x2="2080" y2="1345"><stop offset="0" stop-color="#fff" stop-opacity="1"/><stop offset="0.35" stop-color="#fff" stop-opacity="0.85"/><stop offset="0.62" stop-color="#fff" stop-opacity="0.5"/><stop offset="0.85" stop-color="#fff" stop-opacity="0.18"/><stop offset="1" stop-color="#fff" stop-opacity="0"/></linearGradient><mask id="m1" maskUnits="userSpaceOnUse" x="1848" y="680" width="800" height="960"><rect x="1848" y="680" width="800" height="960" fill="url(#fade)"/></mask><linearGradient id="hf" gradientUnits="userSpaceOnUse" x1="2185" y1="0" x2="2232" y2="0"><stop offset="0" stop-color="#fff"/><stop offset="1" stop-color="#fff" stop-opacity="0"/></linearGradient><mask id="m2" maskUnits="userSpaceOnUse" x="1848" y="680" width="800" height="960"><rect x="1848" y="680" width="800" height="960" fill="url(#hf)"/></mask><clipPath id="dia"><path d="M2263.8 804.3L2459.8 1056.9L2325.9 1223.9L2134.6 965.7z"/></clipPath></defs><path d="M1897 1017L2212 939L2208 1300L1962 1350z" fill="url(#pc)" mask="url(#m1)"/><g clip-path="url(#dia)"><path d="M1897 1017L2232 933L2236 1125L2150 1125z" fill="url(#pb)" mask="url(#m2)"/></g></svg>
<svg class="a" style="left:1848px;top:680px" width="786" height="959" viewBox="1848 680 786 959">
<g transform="matrix(5.478 7.156 -3.522 4.578 2279.8 906.4)"><rect width="9" height="9" fill="#000"/><path d="M0 0h1v1h-1zM1 0h1v1h-1zM4 0h1v1h-1zM6 0h1v1h-1zM7 0h1v1h-1zM8 0h1v1h-1zM0 2h1v1h-1zM2 2h1v1h-1zM3 2h1v1h-1zM4 2h1v1h-1zM5 2h1v1h-1zM6 2h1v1h-1zM2 3h1v1h-1zM3 3h1v1h-1zM6 3h1v1h-1zM2 4h1v1h-1zM3 4h1v1h-1zM5 4h1v1h-1zM6 4h1v1h-1zM2 5h1v1h-1zM5 5h1v1h-1zM6 5h1v1h-1zM8 5h1v1h-1zM0 6h1v1h-1zM2 6h1v1h-1zM3 6h1v1h-1zM4 6h1v1h-1zM5 6h1v1h-1zM6 6h1v1h-1zM8 7h1v1h-1zM0 8h1v1h-1zM3 8h1v1h-1zM4 8h1v1h-1zM5 8h1v1h-1zM7 8h1v1h-1z" fill="#fff" stroke="#fff" stroke-width="0.04"/></g>
<line x1="2296.4" y1="1011.6" x2="2311.4" y2="1117.6" stroke="#5fa845" stroke-width="1.6"/>
<text x="0" y="0" transform="translate(2309 1051) rotate(234)" font-family="Liberation Sans" font-size="15" fill="#fff">hello</text>
</svg>
<div class="a" id="emacs" style="left:0;top:32px;width:1152px;height:2152px;background:#2e2e2e;border-radius:14px 14px 0 0;overflow:hidden">
<div class="a" style="left:0;top:0;width:1152px;height:57px;background:#cfcfcf;border-bottom:1px solid #1c1c1c;border-top:1px solid #e4e4e4"></div>
<div class="tl" style="left:16px;top:16px;background:#ee6a5f;border:1px solid #d4574c"></div>
<div class="tl" style="left:56px;top:16px;background:#f5be4f;border:1px solid #d9a33a"></div>
<div class="tl" style="left:96px;top:16px;background:#61c555;border:1px solid #4ea843"></div>
<svg class="a" style="left:299px;top:12px" width="26" height="29" viewBox="0 0 26 29"><path d="M2.5 0.5H17L25 8.5V27a1.5 1.5 0 0 1-1.5 1.5H2.5A1.5 1.5 0 0 1 1 27V2a1.5 1.5 0 0 1 1.5-1.5z" fill="#fafafa" stroke="#c8c8c8" stroke-width="1"/><path d="M17 0.5V8.5H25" fill="#e6e6e6" stroke="#c8c8c8" stroke-width="1"/></svg>
<div class="a t" style="left:336px;top:11px;font-size:27px;line-height:32px;font-weight:bold;color:#3c3c3c">image.folk - GNU Emacs at scoriae.local</div>
<div class="a" style="left:0;top:57px;width:16px;height:2100px;background:#4d4d4d"></div>
<div class="a" style="left:1106px;top:57px;width:16px;height:2100px;background:#4d4d4d"></div>
<div class="a" style="left:1130px;top:1195px;width:16px;height:894px;border-radius:8px;background:linear-gradient(to right,#c4c4c4,#b0b0b0)"></div>
<div class="a" style="left:0;top:57px;width:1152px;height:2041px;overflow:hidden">
<div class="ln" style="top:-6.8px">            } <span class="k">else</span> {</div>
<div class="ln" style="top:33.2px">                <span class="p">set</span> <span class="o">im</span> [$<span class="o">imageLib</span> loadPng $<span class="o">path</span>]</div>
<div class="ln" style="top:73.2px">            }</div>
<div class="ln" style="top:113.2px">            $<span class="o">cacheLib</span> cachePut $<span class="o">impath</span> $<span class="o">im</span></div>
<div class="ln" style="top:153.2px">        }</div>
<div class="ln" style="top:193.2px">        <span class="k">return</span> $<span class="o">im</span></div>
<div class="ln" style="top:233.2px">    }} $<span class="o">cacheLib</span> $<span class="o">imageLib</span>]</div>
<div class="ln" style="top:273.2px">    Claim the image loader is $<span class="o">loadImage</span></div>
<div class="ln" style="top:313.2px">}</div>
<div class="ln" style="top:353.2px"></div>
<div class="ln" style="top:393.2px">Wish the GPU compiles pipeline <span class="s">&quot;image&quot;</span> {</div>
<div class="ln" style="top:433.2px">    {vec2 viewport mat3 surfaceToClip</div>
<div class="ln" style="top:473.2px">     sampler2D image vec2 a vec2 b vec2 c vec2 d} {</div>
<div class="ln" style="top:513.2px">        vec2 vertices[6] = vec2[6](a, b, c, a, c, d);</div>
<div class="ln" style="top:553.2px">        vec3 v = surfaceToClip * vec3(vertices[gl_VertexIndex], 1.0)</div>
<svg class="a" style="left:1110px;top:573.0px" width="12" height="16" shape-rendering="crispEdges"><path d="M0 0h2v2h-2zM2 0h2v2h-2zM4 0h2v2h-2zM6 0h2v2h-2zM0 2h2v2h-2zM2 2h2v2h-2zM4 2h2v2h-2zM6 2h2v2h-2zM8 2h2v2h-2zM8 4h2v2h-2zM10 4h2v2h-2zM0 6h2v2h-2zM6 6h2v2h-2zM8 6h2v2h-2zM10 6h2v2h-2zM0 8h2v2h-2zM2 8h2v2h-2zM4 8h2v2h-2zM6 8h2v2h-2zM8 8h2v2h-2zM10 8h2v2h-2zM0 10h2v2h-2zM2 10h2v2h-2zM4 10h2v2h-2zM6 10h2v2h-2zM8 10h2v2h-2zM0 12h2v2h-2zM2 12h2v2h-2zM4 12h2v2h-2zM6 12h2v2h-2zM0 14h2v2h-2zM2 14h2v2h-2zM4 14h2v2h-2zM6 14h2v2h-2zM8 14h2v2h-2z" fill="#acacac"/></svg>
<div class="ln" style="top:593.2px">;</div>
<svg class="a" style="left:0px;top:613.0px" width="12" height="16" shape-rendering="crispEdges"><path d="M4 0h2v2h-2zM6 0h2v2h-2zM8 0h2v2h-2zM10 0h2v2h-2zM2 2h2v2h-2zM4 2h2v2h-2zM6 2h2v2h-2zM8 2h2v2h-2zM10 2h2v2h-2zM0 4h2v2h-2zM2 4h2v2h-2zM0 6h2v2h-2zM2 6h2v2h-2zM4 6h2v2h-2zM10 6h2v2h-2zM0 8h2v2h-2zM2 8h2v2h-2zM4 8h2v2h-2zM6 8h2v2h-2zM8 8h2v2h-2zM10 8h2v2h-2zM2 10h2v2h-2zM4 10h2v2h-2zM6 10h2v2h-2zM8 10h2v2h-2zM10 10h2v2h-2zM4 12h2v2h-2zM6 12h2v2h-2zM8 12h2v2h-2zM10 12h2v2h-2zM2 14h2v2h-2zM4 14h2v2h-2zM6 14h2v2h-2zM8 14h2v2h-2zM10 14h2v2h-2z" fill="#acacac"/></svg>
<div class="ln" style="top:633.2px">        <span class="k">return</span> vec4(v.xy/v.z, 0.0, 1.0);</div>
<div class="ln" style="top:673.2px"></div>
<div class="ln" style="top:713.2px">} {fn invBilinear} {</div>
<div class="ln" style="top:753.2px">        vec2 clipXy = (gl_FragCoord.xy / viewport) * 2.0 - 1.0;</div>
<div class="ln" style="top:793.2px">        vec3 surfaceXy = inverse(surfaceToClip) * vec3(clipXy, 1.0);</div>
<div class="ln" style="top:833.2px">        surfaceXy /= surfaceXy.z;</div>
<div class="ln" style="top:873.2px"></div>
<div class="ln" style="top:913.2px">        vec2 uv = invBilinear(surfaceXy.xy, a, b, c, d);</div>
<div class="ln" style="top:953.2px">        <span class="k">if</span>( max( abs(uv.x-0.5), abs(uv.y-0.5))&lt;0.5 ) {</div>
<div class="ln" style="top:993.2px">            <span class="k">return</span> texture(image, uv);</div>
<div class="ln" style="top:1033.2px">        }</div>
<div class="ln" style="top:1073.2px">        <span class="k">return</span> vec4(0.0, 0.0, 0.0, 0.0);</div>
<div class="ln" style="top:1113.2px">}}</div>
<div class="ln" style="top:1153.2px">When the image library is /imageLib/ &amp;<span class="s">\</span></div>
<div class="a" style="left:368px;top:1161.0px;width:16px;height:30px;background:#efefef"></div>
<div class="ln" style="top:1193.2px">     /someone/ wishes to draw an image with /...options/ {</div>
<div class="ln" style="top:1233.2px">    <span class="k">if</span> {[dict exists $<span class="o">options</span> center]} {</div>
<div class="ln" style="top:1273.2px">        <span class="p">set</span> <span class="o">center</span> [dict get $<span class="o">options</span> center]</div>
<div class="ln" style="top:1313.2px">    } <span class="k">else</span> {</div>
<div class="ln" style="top:1353.2px">        <span class="p">set</span> <span class="o">center</span> [<span class="p">list</span> [dict get $<span class="o">options</span> x] [dict get $<span class="o">options</span> y]</div>
<svg class="a" style="left:1110px;top:1373.0px" width="12" height="16" shape-rendering="crispEdges"><path d="M0 0h2v2h-2zM2 0h2v2h-2zM4 0h2v2h-2zM6 0h2v2h-2zM0 2h2v2h-2zM2 2h2v2h-2zM4 2h2v2h-2zM6 2h2v2h-2zM8 2h2v2h-2zM8 4h2v2h-2zM10 4h2v2h-2zM0 6h2v2h-2zM6 6h2v2h-2zM8 6h2v2h-2zM10 6h2v2h-2zM0 8h2v2h-2zM2 8h2v2h-2zM4 8h2v2h-2zM6 8h2v2h-2zM8 8h2v2h-2zM10 8h2v2h-2zM0 10h2v2h-2zM2 10h2v2h-2zM4 10h2v2h-2zM6 10h2v2h-2zM8 10h2v2h-2zM0 12h2v2h-2zM2 12h2v2h-2zM4 12h2v2h-2zM6 12h2v2h-2zM0 14h2v2h-2zM2 14h2v2h-2zM4 14h2v2h-2zM6 14h2v2h-2zM8 14h2v2h-2z" fill="#acacac"/></svg>
<div class="ln" style="top:1393.2px">]</div>
<svg class="a" style="left:0px;top:1413.0px" width="12" height="16" shape-rendering="crispEdges"><path d="M4 0h2v2h-2zM6 0h2v2h-2zM8 0h2v2h-2zM10 0h2v2h-2zM2 2h2v2h-2zM4 2h2v2h-2zM6 2h2v2h-2zM8 2h2v2h-2zM10 2h2v2h-2zM0 4h2v2h-2zM2 4h2v2h-2zM0 6h2v2h-2zM2 6h2v2h-2zM4 6h2v2h-2zM10 6h2v2h-2zM0 8h2v2h-2zM2 8h2v2h-2zM4 8h2v2h-2zM6 8h2v2h-2zM8 8h2v2h-2zM10 8h2v2h-2zM2 10h2v2h-2zM4 10h2v2h-2zM6 10h2v2h-2zM8 10h2v2h-2zM10 10h2v2h-2zM4 12h2v2h-2zM6 12h2v2h-2zM8 12h2v2h-2zM10 12h2v2h-2zM2 14h2v2h-2zM4 14h2v2h-2zM6 14h2v2h-2zM8 14h2v2h-2zM10 14h2v2h-2z" fill="#acacac"/></svg>
<div class="ln" style="top:1433.2px">    }</div>
<div class="ln" style="top:1473.2px">    <span class="p">set</span> <span class="o">im</span> [dict get $<span class="o">options</span> image]</div>
<div class="ln" style="top:1513.2px">    <span class="p">set</span> <span class="o">radians</span> [dict getdef $<span class="o">options</span> radians 0]</div>
<div class="ln" style="top:1553.2px">    <span class="p">set</span> <span class="o">scale</span> [dict getdef $<span class="o">options</span> scale 1.0]</div>
<div class="ln" style="top:1593.2px">    <span class="k">if</span> {[<span class="p">llength</span> $<span class="o">scale</span>] == 1} {</div>
<div class="ln" style="top:1633.2px">        <span class="p">set</span> <span class="o">scale</span> [<span class="p">list</span> $<span class="o">scale</span> $<span class="o">scale</span>]</div>
<div class="ln" style="top:1673.2px">    }</div>
<div class="ln" style="top:1713.2px"></div>
<div class="ln" style="top:1753.2px">    Wish the GPU loads image $<span class="o">im</span></div>
<div class="ln" style="top:1793.2px">    When the GPU has loaded image $<span class="o">im</span> as /gim/ {</div>
<div class="ln" style="top:1833.2px">        Wish the GPU draws pipeline <span class="s">&quot;image&quot;</span> with arguments <span class="s">\</span></div>
<div class="ln" style="top:1873.2px">            [<span class="p">list</span> $<span class="o">gim</span> [<span class="p">list</span> [$<span class="o">imageLib</span> Image_width $<span class="o">im</span>] [$<span class="o">imageLib</span></div>
<svg class="a" style="left:1110px;top:1893.0px" width="12" height="16" shape-rendering="crispEdges"><path d="M0 0h2v2h-2zM2 0h2v2h-2zM4 0h2v2h-2zM6 0h2v2h-2zM0 2h2v2h-2zM2 2h2v2h-2zM4 2h2v2h-2zM6 2h2v2h-2zM8 2h2v2h-2zM8 4h2v2h-2zM10 4h2v2h-2zM0 6h2v2h-2zM6 6h2v2h-2zM8 6h2v2h-2zM10 6h2v2h-2zM0 8h2v2h-2zM2 8h2v2h-2zM4 8h2v2h-2zM6 8h2v2h-2zM8 8h2v2h-2zM10 8h2v2h-2zM0 10h2v2h-2zM2 10h2v2h-2zM4 10h2v2h-2zM6 10h2v2h-2zM8 10h2v2h-2zM0 12h2v2h-2zM2 12h2v2h-2zM4 12h2v2h-2zM6 12h2v2h-2zM0 14h2v2h-2zM2 14h2v2h-2zM4 14h2v2h-2zM6 14h2v2h-2zM8 14h2v2h-2z" fill="#acacac"/></svg>
<div class="ln" style="top:1913.2px">Image_height $<span class="o">im</span>]] <span class="s">\</span></div>
<svg class="a" style="left:0px;top:1933.0px" width="12" height="16" shape-rendering="crispEdges"><path d="M4 0h2v2h-2zM6 0h2v2h-2zM8 0h2v2h-2zM10 0h2v2h-2zM2 2h2v2h-2zM4 2h2v2h-2zM6 2h2v2h-2zM8 2h2v2h-2zM10 2h2v2h-2zM0 4h2v2h-2zM2 4h2v2h-2zM0 6h2v2h-2zM2 6h2v2h-2zM4 6h2v2h-2zM10 6h2v2h-2zM0 8h2v2h-2zM2 8h2v2h-2zM4 8h2v2h-2zM6 8h2v2h-2zM8 8h2v2h-2zM10 8h2v2h-2zM2 10h2v2h-2zM4 10h2v2h-2zM6 10h2v2h-2zM8 10h2v2h-2zM10 10h2v2h-2zM4 12h2v2h-2zM6 12h2v2h-2zM8 12h2v2h-2zM10 12h2v2h-2zM2 14h2v2h-2zM4 14h2v2h-2zM6 14h2v2h-2zM8 14h2v2h-2zM10 14h2v2h-2z" fill="#acacac"/></svg>
<div class="ln" style="top:1953.2px">                 $<span class="o">center</span> $<span class="o">radians</span> $<span class="o">scale</span>]</div>
<div class="ln" style="top:1993.2px">    }</div>
</div>
<div class="a" style="left:0;top:2098px;width:1152px;height:30px;background:#b6d6f8"></div>
<div class="ln" style="top:2091px;color:#2f5d86;line-height:40px">-:---  <b style="color:#2a2a2a">image.folk</b>     57%   L110  Git-osnr/folk2-leakfix-writable-image</div>
</div>
</body></html>
